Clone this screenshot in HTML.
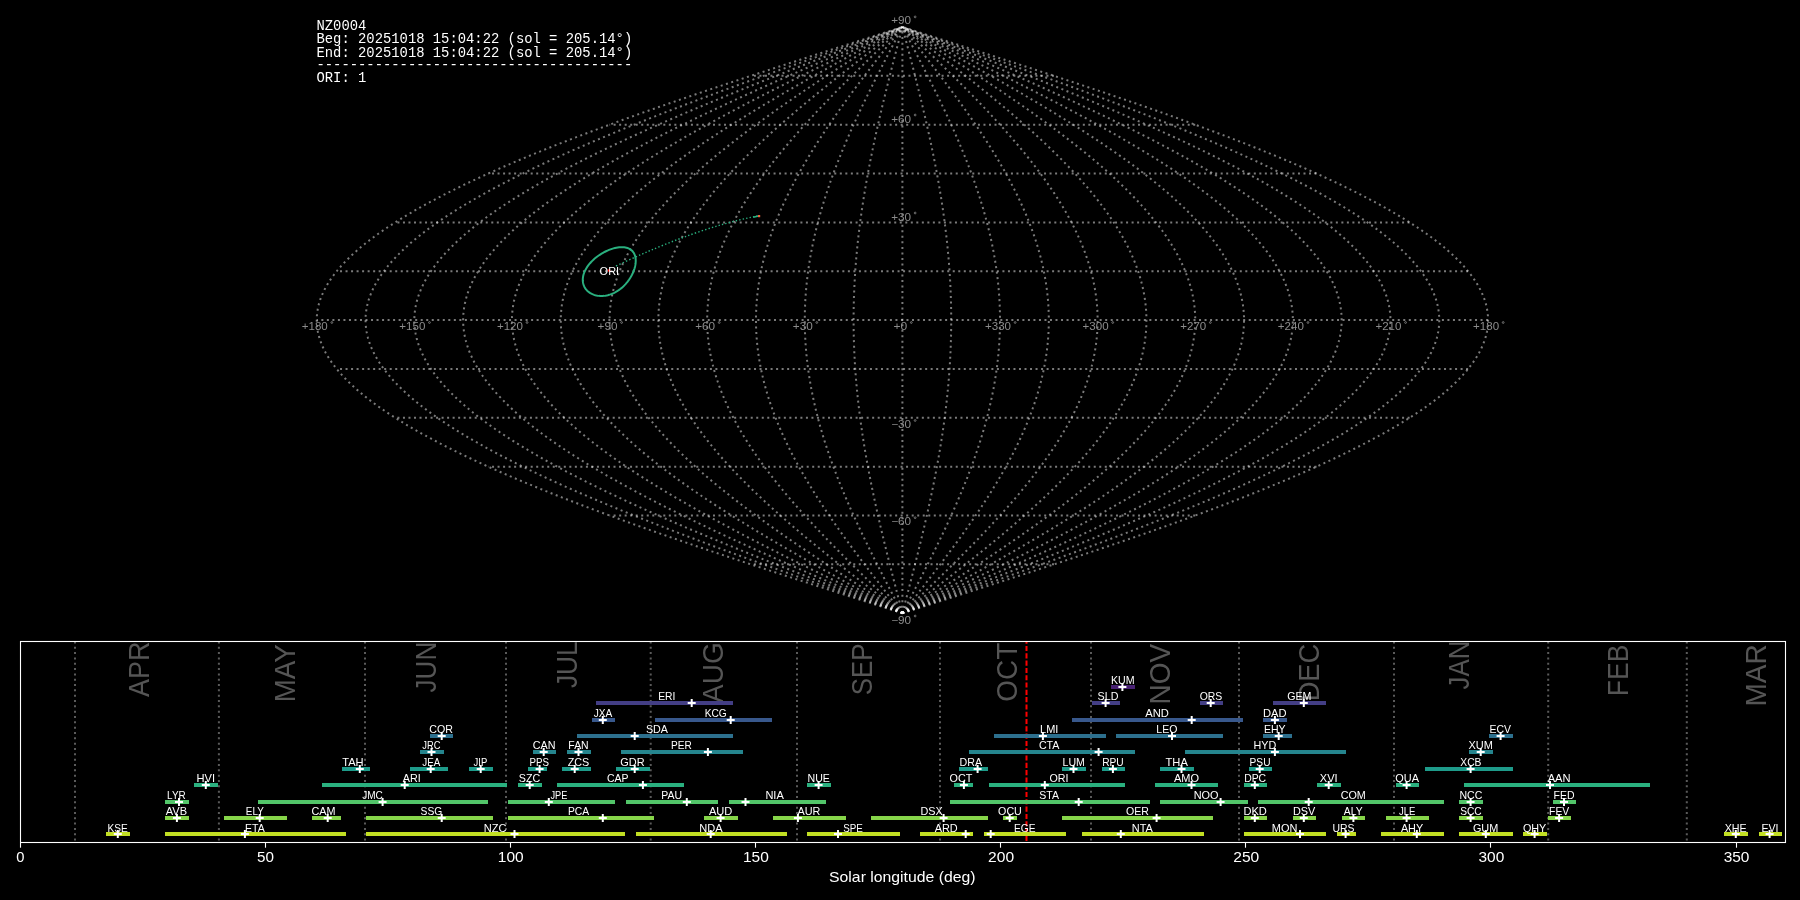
<!DOCTYPE html>
<html><head><meta charset="utf-8"><title>NZ0004</title>
<style>html,body{margin:0;padding:0;background:#000;width:1800px;height:900px;overflow:hidden}svg{display:block;will-change:transform}</style>
</head><body>
<svg width="1800" height="900" viewBox="0 0 1800 900"><g fill="none" stroke="#ffffff" stroke-opacity="0.48" stroke-width="2" stroke-dasharray="2 3.52"><path d="M1053.98 564.35 H750.82"/><path d="M1195.23 515.50 H609.57"/><path d="M1316.53 466.65 H488.27"/><path d="M1409.60 417.80 H395.20"/><path d="M1468.11 368.95 H336.69"/><path d="M1488.07 320.10 H316.73"/><path d="M1468.11 271.25 H336.69"/><path d="M1409.60 222.40 H395.20"/><path d="M1316.53 173.55 H488.27"/><path d="M1195.23 124.70 H609.57"/><path d="M1053.98 75.85 H750.82"/><path d="M902.40 613.20 L907.51 611.57 L912.62 609.95 L917.73 608.32 L922.84 606.69 L927.95 605.06 L933.05 603.43 L938.15 601.80 L943.25 600.18 L948.35 598.55 L953.44 596.92 L958.53 595.29 L963.62 593.66 L968.70 592.03 L973.77 590.41 L978.84 588.78 L983.91 587.15 L988.97 585.52 L994.02 583.89 L999.06 582.26 L1004.10 580.64 L1009.13 579.01 L1014.15 577.38 L1019.16 575.75 L1024.17 574.12 L1029.16 572.49 L1034.15 570.87 L1039.12 569.24 L1044.09 567.61 L1049.04 565.98 L1053.98 564.35 L1058.91 562.72 L1063.83 561.10 L1068.74 559.47 L1073.63 557.84 L1078.51 556.21 L1083.38 554.58 L1088.23 552.95 L1093.07 551.33 L1097.90 549.70 L1102.71 548.07 L1107.50 546.44 L1112.28 544.81 L1117.05 543.18 L1121.79 541.56 L1126.52 539.93 L1131.24 538.30 L1135.93 536.67 L1140.61 535.04 L1145.27 533.41 L1149.91 531.79 L1154.54 530.16 L1159.14 528.53 L1163.72 526.90 L1168.29 525.27 L1172.83 523.64 L1177.35 522.02 L1181.86 520.39 L1186.34 518.76 L1190.80 517.13 L1195.23 515.50 L1199.65 513.87 L1204.04 512.25 L1208.41 510.62 L1212.76 508.99 L1217.08 507.36 L1221.38 505.73 L1225.65 504.10 L1229.90 502.48 L1234.12 500.85 L1238.32 499.22 L1242.50 497.59 L1246.65 495.96 L1250.77 494.33 L1254.86 492.71 L1258.93 491.08 L1262.97 489.45 L1266.99 487.82 L1270.97 486.19 L1274.93 484.56 L1278.86 482.94 L1282.76 481.31 L1286.63 479.68 L1290.47 478.05 L1294.29 476.42 L1298.07 474.79 L1301.82 473.16 L1305.55 471.54 L1309.24 469.91 L1312.90 468.28 L1316.53 466.65 L1320.13 465.02 L1323.69 463.39 L1327.23 461.77 L1330.73 460.14 L1334.20 458.51 L1337.63 456.88 L1341.04 455.25 L1344.41 453.62 L1347.74 452.00 L1351.05 450.37 L1354.31 448.74 L1357.55 447.11 L1360.75 445.48 L1363.91 443.85 L1367.04 442.23 L1370.13 440.60 L1373.19 438.97 L1376.21 437.34 L1379.20 435.71 L1382.15 434.08 L1385.06 432.46 L1387.94 430.83 L1390.78 429.20 L1393.58 427.57 L1396.35 425.94 L1399.07 424.31 L1401.76 422.69 L1404.41 421.06 L1407.03 419.43 L1409.60 417.80 L1412.14 416.17 L1414.64 414.54 L1417.09 412.92 L1419.51 411.29 L1421.89 409.66 L1424.23 408.03 L1426.53 406.40 L1428.79 404.77 L1431.01 403.15 L1433.19 401.52 L1435.33 399.89 L1437.43 398.26 L1439.49 396.63 L1441.51 395.00 L1443.48 393.38 L1445.42 391.75 L1447.31 390.12 L1449.17 388.49 L1450.98 386.86 L1452.75 385.23 L1454.47 383.61 L1456.16 381.98 L1457.80 380.35 L1459.40 378.72 L1460.96 377.09 L1462.48 375.46 L1463.95 373.84 L1465.38 372.21 L1466.77 370.58 L1468.11 368.95 L1469.41 367.32 L1470.67 365.69 L1471.88 364.07 L1473.06 362.44 L1474.18 360.81 L1475.27 359.18 L1476.31 357.55 L1477.31 355.92 L1478.26 354.30 L1479.17 352.67 L1480.03 351.04 L1480.86 349.41 L1481.63 347.78 L1482.37 346.15 L1483.06 344.53 L1483.70 342.90 L1484.30 341.27 L1484.86 339.64 L1485.37 338.01 L1485.84 336.38 L1486.26 334.76 L1486.64 333.13 L1486.97 331.50 L1487.26 329.87 L1487.51 328.24 L1487.71 326.61 L1487.87 324.99 L1487.98 323.36 L1488.04 321.73 L1488.07 320.10 L1488.04 318.47 L1487.98 316.84 L1487.87 315.21 L1487.71 313.59 L1487.51 311.96 L1487.26 310.33 L1486.97 308.70 L1486.64 307.07 L1486.26 305.44 L1485.84 303.82 L1485.37 302.19 L1484.86 300.56 L1484.30 298.93 L1483.70 297.30 L1483.06 295.67 L1482.37 294.05 L1481.63 292.42 L1480.86 290.79 L1480.03 289.16 L1479.17 287.53 L1478.26 285.90 L1477.31 284.28 L1476.31 282.65 L1475.27 281.02 L1474.18 279.39 L1473.06 277.76 L1471.88 276.13 L1470.67 274.51 L1469.41 272.88 L1468.11 271.25 L1466.77 269.62 L1465.38 267.99 L1463.95 266.36 L1462.48 264.74 L1460.96 263.11 L1459.40 261.48 L1457.80 259.85 L1456.16 258.22 L1454.47 256.59 L1452.75 254.97 L1450.98 253.34 L1449.17 251.71 L1447.31 250.08 L1445.42 248.45 L1443.48 246.82 L1441.51 245.20 L1439.49 243.57 L1437.43 241.94 L1435.33 240.31 L1433.19 238.68 L1431.01 237.05 L1428.79 235.43 L1426.53 233.80 L1424.23 232.17 L1421.89 230.54 L1419.51 228.91 L1417.09 227.28 L1414.64 225.66 L1412.14 224.03 L1409.60 222.40 L1407.03 220.77 L1404.41 219.14 L1401.76 217.51 L1399.07 215.89 L1396.35 214.26 L1393.58 212.63 L1390.78 211.00 L1387.94 209.37 L1385.06 207.74 L1382.15 206.12 L1379.20 204.49 L1376.21 202.86 L1373.19 201.23 L1370.13 199.60 L1367.04 197.97 L1363.91 196.35 L1360.75 194.72 L1357.55 193.09 L1354.31 191.46 L1351.05 189.83 L1347.74 188.20 L1344.41 186.58 L1341.04 184.95 L1337.63 183.32 L1334.20 181.69 L1330.73 180.06 L1327.23 178.43 L1323.69 176.81 L1320.13 175.18 L1316.53 173.55 L1312.90 171.92 L1309.24 170.29 L1305.55 168.66 L1301.82 167.04 L1298.07 165.41 L1294.29 163.78 L1290.47 162.15 L1286.63 160.52 L1282.76 158.89 L1278.86 157.27 L1274.93 155.64 L1270.97 154.01 L1266.99 152.38 L1262.97 150.75 L1258.93 149.12 L1254.86 147.49 L1250.77 145.87 L1246.65 144.24 L1242.50 142.61 L1238.32 140.98 L1234.12 139.35 L1229.90 137.72 L1225.65 136.10 L1221.38 134.47 L1217.08 132.84 L1212.76 131.21 L1208.41 129.58 L1204.04 127.95 L1199.65 126.33 L1195.23 124.70 L1190.80 123.07 L1186.34 121.44 L1181.86 119.81 L1177.35 118.18 L1172.83 116.56 L1168.29 114.93 L1163.72 113.30 L1159.14 111.67 L1154.54 110.04 L1149.91 108.41 L1145.27 106.79 L1140.61 105.16 L1135.93 103.53 L1131.24 101.90 L1126.52 100.27 L1121.79 98.64 L1117.05 97.02 L1112.28 95.39 L1107.50 93.76 L1102.71 92.13 L1097.90 90.50 L1093.07 88.87 L1088.23 87.25 L1083.38 85.62 L1078.51 83.99 L1073.63 82.36 L1068.74 80.73 L1063.83 79.10 L1058.91 77.48 L1053.98 75.85 L1049.04 74.22 L1044.09 72.59 L1039.12 70.96 L1034.15 69.33 L1029.16 67.71 L1024.17 66.08 L1019.16 64.45 L1014.15 62.82 L1009.13 61.19 L1004.10 59.56 L999.06 57.94 L994.02 56.31 L988.97 54.68 L983.91 53.05 L978.84 51.42 L973.77 49.79 L968.70 48.17 L963.62 46.54 L958.53 44.91 L953.44 43.28 L948.35 41.65 L943.25 40.02 L938.15 38.40 L933.05 36.77 L927.95 35.14 L922.84 33.51 L917.73 31.88 L912.62 30.25 L907.51 28.63 L902.40 27.00"/><path d="M902.40 613.20 L907.08 611.57 L911.77 609.95 L916.45 608.32 L921.14 606.69 L925.82 605.06 L930.50 603.43 L935.17 601.80 L939.85 600.18 L944.52 598.55 L949.19 596.92 L953.86 595.29 L958.52 593.66 L963.17 592.03 L967.83 590.41 L972.47 588.78 L977.12 587.15 L981.75 585.52 L986.38 583.89 L991.01 582.26 L995.62 580.64 L1000.24 579.01 L1004.84 577.38 L1009.43 575.75 L1014.02 574.12 L1018.60 572.49 L1023.17 570.87 L1027.73 569.24 L1032.28 567.61 L1036.82 565.98 L1041.35 564.35 L1045.87 562.72 L1050.38 561.10 L1054.88 559.47 L1059.36 557.84 L1063.84 556.21 L1068.30 554.58 L1072.75 552.95 L1077.18 551.33 L1081.61 549.70 L1086.02 548.07 L1090.41 546.44 L1094.79 544.81 L1099.16 543.18 L1103.51 541.56 L1107.85 539.93 L1112.17 538.30 L1116.47 536.67 L1120.76 535.04 L1125.03 533.41 L1129.29 531.79 L1133.52 530.16 L1137.74 528.53 L1141.95 526.90 L1146.13 525.27 L1150.29 523.64 L1154.44 522.02 L1158.57 520.39 L1162.68 518.76 L1166.76 517.13 L1170.83 515.50 L1174.88 513.87 L1178.90 512.25 L1182.91 510.62 L1186.89 508.99 L1190.85 507.36 L1194.80 505.73 L1198.71 504.10 L1202.61 502.48 L1206.48 500.85 L1210.33 499.22 L1214.16 497.59 L1217.96 495.96 L1221.74 494.33 L1225.49 492.71 L1229.22 491.08 L1232.92 489.45 L1236.60 487.82 L1240.26 486.19 L1243.89 484.56 L1247.49 482.94 L1251.06 481.31 L1254.61 479.68 L1258.13 478.05 L1261.63 476.42 L1265.10 474.79 L1268.54 473.16 L1271.95 471.54 L1275.33 469.91 L1278.69 468.28 L1282.02 466.65 L1285.32 465.02 L1288.59 463.39 L1291.82 461.77 L1295.03 460.14 L1298.22 458.51 L1301.37 456.88 L1304.48 455.25 L1307.57 453.62 L1310.63 452.00 L1313.66 450.37 L1316.65 448.74 L1319.62 447.11 L1322.55 445.48 L1325.45 443.85 L1328.32 442.23 L1331.16 440.60 L1333.96 438.97 L1336.73 437.34 L1339.47 435.71 L1342.17 434.08 L1344.84 432.46 L1347.48 430.83 L1350.08 429.20 L1352.65 427.57 L1355.18 425.94 L1357.68 424.31 L1360.15 422.69 L1362.58 421.06 L1364.97 419.43 L1367.33 417.80 L1369.66 416.17 L1371.95 414.54 L1374.20 412.92 L1376.42 411.29 L1378.60 409.66 L1380.75 408.03 L1382.85 406.40 L1384.93 404.77 L1386.96 403.15 L1388.96 401.52 L1390.92 399.89 L1392.85 398.26 L1394.73 396.63 L1396.58 395.00 L1398.39 393.38 L1400.17 391.75 L1401.90 390.12 L1403.60 388.49 L1405.26 386.86 L1406.88 385.23 L1408.47 383.61 L1410.01 381.98 L1411.52 380.35 L1412.98 378.72 L1414.41 377.09 L1415.80 375.46 L1417.15 373.84 L1418.46 372.21 L1419.74 370.58 L1420.97 368.95 L1422.16 367.32 L1423.31 365.69 L1424.43 364.07 L1425.50 362.44 L1426.53 360.81 L1427.53 359.18 L1428.48 357.55 L1429.40 355.92 L1430.27 354.30 L1431.10 352.67 L1431.90 351.04 L1432.65 349.41 L1433.36 347.78 L1434.04 346.15 L1434.67 344.53 L1435.26 342.90 L1435.81 341.27 L1436.32 339.64 L1436.79 338.01 L1437.22 336.38 L1437.61 334.76 L1437.95 333.13 L1438.26 331.50 L1438.52 329.87 L1438.75 328.24 L1438.93 326.61 L1439.08 324.99 L1439.18 323.36 L1439.24 321.73 L1439.26 320.10 L1439.24 318.47 L1439.18 316.84 L1439.08 315.21 L1438.93 313.59 L1438.75 311.96 L1438.52 310.33 L1438.26 308.70 L1437.95 307.07 L1437.61 305.44 L1437.22 303.82 L1436.79 302.19 L1436.32 300.56 L1435.81 298.93 L1435.26 297.30 L1434.67 295.67 L1434.04 294.05 L1433.36 292.42 L1432.65 290.79 L1431.90 289.16 L1431.10 287.53 L1430.27 285.90 L1429.40 284.28 L1428.48 282.65 L1427.53 281.02 L1426.53 279.39 L1425.50 277.76 L1424.43 276.13 L1423.31 274.51 L1422.16 272.88 L1420.97 271.25 L1419.74 269.62 L1418.46 267.99 L1417.15 266.36 L1415.80 264.74 L1414.41 263.11 L1412.98 261.48 L1411.52 259.85 L1410.01 258.22 L1408.47 256.59 L1406.88 254.97 L1405.26 253.34 L1403.60 251.71 L1401.90 250.08 L1400.17 248.45 L1398.39 246.82 L1396.58 245.20 L1394.73 243.57 L1392.85 241.94 L1390.92 240.31 L1388.96 238.68 L1386.96 237.05 L1384.93 235.43 L1382.85 233.80 L1380.75 232.17 L1378.60 230.54 L1376.42 228.91 L1374.20 227.28 L1371.95 225.66 L1369.66 224.03 L1367.33 222.40 L1364.97 220.77 L1362.58 219.14 L1360.15 217.51 L1357.68 215.89 L1355.18 214.26 L1352.65 212.63 L1350.08 211.00 L1347.48 209.37 L1344.84 207.74 L1342.17 206.12 L1339.47 204.49 L1336.73 202.86 L1333.96 201.23 L1331.16 199.60 L1328.32 197.97 L1325.45 196.35 L1322.55 194.72 L1319.62 193.09 L1316.65 191.46 L1313.66 189.83 L1310.63 188.20 L1307.57 186.58 L1304.48 184.95 L1301.37 183.32 L1298.22 181.69 L1295.03 180.06 L1291.82 178.43 L1288.59 176.81 L1285.32 175.18 L1282.02 173.55 L1278.69 171.92 L1275.33 170.29 L1271.95 168.66 L1268.54 167.04 L1265.10 165.41 L1261.63 163.78 L1258.13 162.15 L1254.61 160.52 L1251.06 158.89 L1247.49 157.27 L1243.89 155.64 L1240.26 154.01 L1236.60 152.38 L1232.92 150.75 L1229.22 149.12 L1225.49 147.49 L1221.74 145.87 L1217.96 144.24 L1214.16 142.61 L1210.33 140.98 L1206.48 139.35 L1202.61 137.72 L1198.71 136.10 L1194.80 134.47 L1190.85 132.84 L1186.89 131.21 L1182.91 129.58 L1178.90 127.95 L1174.88 126.33 L1170.83 124.70 L1166.76 123.07 L1162.68 121.44 L1158.57 119.81 L1154.44 118.18 L1150.29 116.56 L1146.13 114.93 L1141.95 113.30 L1137.74 111.67 L1133.52 110.04 L1129.29 108.41 L1125.03 106.79 L1120.76 105.16 L1116.47 103.53 L1112.17 101.90 L1107.85 100.27 L1103.51 98.64 L1099.16 97.02 L1094.79 95.39 L1090.41 93.76 L1086.02 92.13 L1081.61 90.50 L1077.18 88.87 L1072.75 87.25 L1068.30 85.62 L1063.84 83.99 L1059.36 82.36 L1054.88 80.73 L1050.38 79.10 L1045.87 77.48 L1041.35 75.85 L1036.82 74.22 L1032.28 72.59 L1027.73 70.96 L1023.17 69.33 L1018.60 67.71 L1014.02 66.08 L1009.43 64.45 L1004.84 62.82 L1000.24 61.19 L995.62 59.56 L991.01 57.94 L986.38 56.31 L981.75 54.68 L977.12 53.05 L972.47 51.42 L967.83 49.79 L963.17 48.17 L958.52 46.54 L953.86 44.91 L949.19 43.28 L944.52 41.65 L939.85 40.02 L935.17 38.40 L930.50 36.77 L925.82 35.14 L921.14 33.51 L916.45 31.88 L911.77 30.25 L907.08 28.63 L902.40 27.00"/><path d="M902.40 613.20 L906.66 611.57 L910.92 609.95 L915.18 608.32 L919.43 606.69 L923.69 605.06 L927.94 603.43 L932.20 601.80 L936.44 600.18 L940.69 598.55 L944.94 596.92 L949.18 595.29 L953.42 593.66 L957.65 592.03 L961.88 590.41 L966.10 588.78 L970.32 587.15 L974.54 585.52 L978.75 583.89 L982.95 582.26 L987.15 580.64 L991.34 579.01 L995.53 577.38 L999.70 575.75 L1003.87 574.12 L1008.03 572.49 L1012.19 570.87 L1016.33 569.24 L1020.47 567.61 L1024.60 565.98 L1028.72 564.35 L1032.83 562.72 L1036.93 561.10 L1041.02 559.47 L1045.09 557.84 L1049.16 556.21 L1053.22 554.58 L1057.26 552.95 L1061.30 551.33 L1065.32 549.70 L1069.32 548.07 L1073.32 546.44 L1077.30 544.81 L1081.27 543.18 L1085.23 541.56 L1089.17 539.93 L1093.10 538.30 L1097.01 536.67 L1100.91 535.04 L1104.79 533.41 L1108.66 531.79 L1112.51 530.16 L1116.35 528.53 L1120.17 526.90 L1123.97 525.27 L1127.76 523.64 L1131.53 522.02 L1135.28 520.39 L1139.01 518.76 L1142.73 517.13 L1146.43 515.50 L1150.11 513.87 L1153.77 512.25 L1157.41 510.62 L1161.03 508.99 L1164.63 507.36 L1168.21 505.73 L1171.78 504.10 L1175.32 502.48 L1178.84 500.85 L1182.34 499.22 L1185.81 497.59 L1189.27 495.96 L1192.71 494.33 L1196.12 492.71 L1199.51 491.08 L1202.88 489.45 L1206.22 487.82 L1209.54 486.19 L1212.84 484.56 L1216.12 482.94 L1219.37 481.31 L1222.59 479.68 L1225.80 478.05 L1228.97 476.42 L1232.13 474.79 L1235.25 473.16 L1238.35 471.54 L1241.43 469.91 L1244.48 468.28 L1247.51 466.65 L1250.51 465.02 L1253.48 463.39 L1256.42 461.77 L1259.34 460.14 L1262.23 458.51 L1265.10 456.88 L1267.93 455.25 L1270.74 453.62 L1273.52 452.00 L1276.27 450.37 L1279.00 448.74 L1281.69 447.11 L1284.36 445.48 L1286.99 443.85 L1289.60 442.23 L1292.18 440.60 L1294.73 438.97 L1297.24 437.34 L1299.73 435.71 L1302.19 434.08 L1304.62 432.46 L1307.02 430.83 L1309.38 429.20 L1311.72 427.57 L1314.02 425.94 L1316.29 424.31 L1318.54 422.69 L1320.74 421.06 L1322.92 419.43 L1325.07 417.80 L1327.18 416.17 L1329.26 414.54 L1331.31 412.92 L1333.33 411.29 L1335.31 409.66 L1337.26 408.03 L1339.18 406.40 L1341.06 404.77 L1342.91 403.15 L1344.73 401.52 L1346.51 399.89 L1348.26 398.26 L1349.98 396.63 L1351.66 395.00 L1353.30 393.38 L1354.92 391.75 L1356.49 390.12 L1358.04 388.49 L1359.55 386.86 L1361.02 385.23 L1362.46 383.61 L1363.87 381.98 L1365.23 380.35 L1366.57 378.72 L1367.87 377.09 L1369.13 375.46 L1370.36 373.84 L1371.55 372.21 L1372.70 370.58 L1373.82 368.95 L1374.91 367.32 L1375.96 365.69 L1376.97 364.07 L1377.95 362.44 L1378.89 360.81 L1379.79 359.18 L1380.66 357.55 L1381.49 355.92 L1382.28 354.30 L1383.04 352.67 L1383.76 351.04 L1384.45 349.41 L1385.09 347.78 L1385.71 346.15 L1386.28 344.53 L1386.82 342.90 L1387.32 341.27 L1387.78 339.64 L1388.21 338.01 L1388.60 336.38 L1388.95 334.76 L1389.27 333.13 L1389.54 331.50 L1389.79 329.87 L1389.99 328.24 L1390.16 326.61 L1390.29 324.99 L1390.38 323.36 L1390.44 321.73 L1390.45 320.10 L1390.44 318.47 L1390.38 316.84 L1390.29 315.21 L1390.16 313.59 L1389.99 311.96 L1389.79 310.33 L1389.54 308.70 L1389.27 307.07 L1388.95 305.44 L1388.60 303.82 L1388.21 302.19 L1387.78 300.56 L1387.32 298.93 L1386.82 297.30 L1386.28 295.67 L1385.71 294.05 L1385.09 292.42 L1384.45 290.79 L1383.76 289.16 L1383.04 287.53 L1382.28 285.90 L1381.49 284.28 L1380.66 282.65 L1379.79 281.02 L1378.89 279.39 L1377.95 277.76 L1376.97 276.13 L1375.96 274.51 L1374.91 272.88 L1373.82 271.25 L1372.70 269.62 L1371.55 267.99 L1370.36 266.36 L1369.13 264.74 L1367.87 263.11 L1366.57 261.48 L1365.23 259.85 L1363.87 258.22 L1362.46 256.59 L1361.02 254.97 L1359.55 253.34 L1358.04 251.71 L1356.49 250.08 L1354.92 248.45 L1353.30 246.82 L1351.66 245.20 L1349.98 243.57 L1348.26 241.94 L1346.51 240.31 L1344.73 238.68 L1342.91 237.05 L1341.06 235.43 L1339.18 233.80 L1337.26 232.17 L1335.31 230.54 L1333.33 228.91 L1331.31 227.28 L1329.26 225.66 L1327.18 224.03 L1325.07 222.40 L1322.92 220.77 L1320.74 219.14 L1318.54 217.51 L1316.29 215.89 L1314.02 214.26 L1311.72 212.63 L1309.38 211.00 L1307.02 209.37 L1304.62 207.74 L1302.19 206.12 L1299.73 204.49 L1297.24 202.86 L1294.73 201.23 L1292.18 199.60 L1289.60 197.97 L1286.99 196.35 L1284.36 194.72 L1281.69 193.09 L1279.00 191.46 L1276.27 189.83 L1273.52 188.20 L1270.74 186.58 L1267.93 184.95 L1265.10 183.32 L1262.23 181.69 L1259.34 180.06 L1256.42 178.43 L1253.48 176.81 L1250.51 175.18 L1247.51 173.55 L1244.48 171.92 L1241.43 170.29 L1238.35 168.66 L1235.25 167.04 L1232.13 165.41 L1228.97 163.78 L1225.80 162.15 L1222.59 160.52 L1219.37 158.89 L1216.12 157.27 L1212.84 155.64 L1209.54 154.01 L1206.22 152.38 L1202.88 150.75 L1199.51 149.12 L1196.12 147.49 L1192.71 145.87 L1189.27 144.24 L1185.81 142.61 L1182.34 140.98 L1178.84 139.35 L1175.32 137.72 L1171.78 136.10 L1168.21 134.47 L1164.63 132.84 L1161.03 131.21 L1157.41 129.58 L1153.77 127.95 L1150.11 126.33 L1146.43 124.70 L1142.73 123.07 L1139.01 121.44 L1135.28 119.81 L1131.53 118.18 L1127.76 116.56 L1123.97 114.93 L1120.17 113.30 L1116.35 111.67 L1112.51 110.04 L1108.66 108.41 L1104.79 106.79 L1100.91 105.16 L1097.01 103.53 L1093.10 101.90 L1089.17 100.27 L1085.23 98.64 L1081.27 97.02 L1077.30 95.39 L1073.32 93.76 L1069.32 92.13 L1065.32 90.50 L1061.30 88.87 L1057.26 87.25 L1053.22 85.62 L1049.16 83.99 L1045.09 82.36 L1041.02 80.73 L1036.93 79.10 L1032.83 77.48 L1028.72 75.85 L1024.60 74.22 L1020.47 72.59 L1016.33 70.96 L1012.19 69.33 L1008.03 67.71 L1003.87 66.08 L999.70 64.45 L995.53 62.82 L991.34 61.19 L987.15 59.56 L982.95 57.94 L978.75 56.31 L974.54 54.68 L970.32 53.05 L966.10 51.42 L961.88 49.79 L957.65 48.17 L953.42 46.54 L949.18 44.91 L944.94 43.28 L940.69 41.65 L936.44 40.02 L932.20 38.40 L927.94 36.77 L923.69 35.14 L919.43 33.51 L915.18 31.88 L910.92 30.25 L906.66 28.63 L902.40 27.00"/><path d="M902.40 613.20 L906.23 611.57 L910.07 609.95 L913.90 608.32 L917.73 606.69 L921.56 605.06 L925.39 603.43 L929.22 601.80 L933.04 600.18 L936.86 598.55 L940.68 596.92 L944.50 595.29 L948.31 593.66 L952.12 592.03 L955.93 590.41 L959.73 588.78 L963.53 587.15 L967.33 585.52 L971.11 583.89 L974.90 582.26 L978.67 580.64 L982.45 579.01 L986.21 577.38 L989.97 575.75 L993.73 574.12 L997.47 572.49 L1001.21 570.87 L1004.94 569.24 L1008.66 567.61 L1012.38 565.98 L1016.09 564.35 L1019.78 562.72 L1023.47 561.10 L1027.15 559.47 L1030.82 557.84 L1034.48 556.21 L1038.14 554.58 L1041.78 552.95 L1045.41 551.33 L1049.02 549.70 L1052.63 548.07 L1056.23 546.44 L1059.81 544.81 L1063.39 543.18 L1066.95 541.56 L1070.49 539.93 L1074.03 538.30 L1077.55 536.67 L1081.06 535.04 L1084.55 533.41 L1088.03 531.79 L1091.50 530.16 L1094.95 528.53 L1098.39 526.90 L1101.82 525.27 L1105.22 523.64 L1108.62 522.02 L1111.99 520.39 L1115.35 518.76 L1118.70 517.13 L1122.02 515.50 L1125.34 513.87 L1128.63 512.25 L1131.91 510.62 L1135.17 508.99 L1138.41 507.36 L1141.63 505.73 L1144.84 504.10 L1148.03 502.48 L1151.19 500.85 L1154.34 499.22 L1157.47 497.59 L1160.58 495.96 L1163.68 494.33 L1166.75 492.71 L1169.80 491.08 L1172.83 489.45 L1175.84 487.82 L1178.83 486.19 L1181.80 484.56 L1184.74 482.94 L1187.67 481.31 L1190.57 479.68 L1193.46 478.05 L1196.32 476.42 L1199.15 474.79 L1201.97 473.16 L1204.76 471.54 L1207.53 469.91 L1210.27 468.28 L1213.00 466.65 L1215.69 465.02 L1218.37 463.39 L1221.02 461.77 L1223.65 460.14 L1226.25 458.51 L1228.83 456.88 L1231.38 455.25 L1233.91 453.62 L1236.41 452.00 L1238.88 450.37 L1241.34 448.74 L1243.76 447.11 L1246.16 445.48 L1248.53 443.85 L1250.88 442.23 L1253.20 440.60 L1255.49 438.97 L1257.76 437.34 L1260.00 435.71 L1262.21 434.08 L1264.40 432.46 L1266.55 430.83 L1268.68 429.20 L1270.79 427.57 L1272.86 425.94 L1274.90 424.31 L1276.92 422.69 L1278.91 421.06 L1280.87 419.43 L1282.80 417.80 L1284.70 416.17 L1286.58 414.54 L1288.42 412.92 L1290.23 411.29 L1292.02 409.66 L1293.77 408.03 L1295.50 406.40 L1297.19 404.77 L1298.86 403.15 L1300.50 401.52 L1302.10 399.89 L1303.67 398.26 L1305.22 396.63 L1306.73 395.00 L1308.21 393.38 L1309.67 391.75 L1311.09 390.12 L1312.47 388.49 L1313.83 386.86 L1315.16 385.23 L1316.45 383.61 L1317.72 381.98 L1318.95 380.35 L1320.15 378.72 L1321.32 377.09 L1322.46 375.46 L1323.56 373.84 L1324.63 372.21 L1325.67 370.58 L1326.68 368.95 L1327.66 367.32 L1328.60 365.69 L1329.51 364.07 L1330.39 362.44 L1331.24 360.81 L1332.05 359.18 L1332.83 357.55 L1333.58 355.92 L1334.29 354.30 L1334.98 352.67 L1335.63 351.04 L1336.24 349.41 L1336.82 347.78 L1337.37 346.15 L1337.89 344.53 L1338.38 342.90 L1338.83 341.27 L1339.24 339.64 L1339.63 338.01 L1339.98 336.38 L1340.30 334.76 L1340.58 333.13 L1340.83 331.50 L1341.05 329.87 L1341.23 328.24 L1341.38 326.61 L1341.50 324.99 L1341.58 323.36 L1341.63 321.73 L1341.65 320.10 L1341.63 318.47 L1341.58 316.84 L1341.50 315.21 L1341.38 313.59 L1341.23 311.96 L1341.05 310.33 L1340.83 308.70 L1340.58 307.07 L1340.30 305.44 L1339.98 303.82 L1339.63 302.19 L1339.24 300.56 L1338.83 298.93 L1338.38 297.30 L1337.89 295.67 L1337.37 294.05 L1336.82 292.42 L1336.24 290.79 L1335.63 289.16 L1334.98 287.53 L1334.29 285.90 L1333.58 284.28 L1332.83 282.65 L1332.05 281.02 L1331.24 279.39 L1330.39 277.76 L1329.51 276.13 L1328.60 274.51 L1327.66 272.88 L1326.68 271.25 L1325.67 269.62 L1324.63 267.99 L1323.56 266.36 L1322.46 264.74 L1321.32 263.11 L1320.15 261.48 L1318.95 259.85 L1317.72 258.22 L1316.45 256.59 L1315.16 254.97 L1313.83 253.34 L1312.47 251.71 L1311.09 250.08 L1309.67 248.45 L1308.21 246.82 L1306.73 245.20 L1305.22 243.57 L1303.67 241.94 L1302.10 240.31 L1300.50 238.68 L1298.86 237.05 L1297.19 235.43 L1295.50 233.80 L1293.77 232.17 L1292.02 230.54 L1290.23 228.91 L1288.42 227.28 L1286.58 225.66 L1284.70 224.03 L1282.80 222.40 L1280.87 220.77 L1278.91 219.14 L1276.92 217.51 L1274.90 215.89 L1272.86 214.26 L1270.79 212.63 L1268.68 211.00 L1266.55 209.37 L1264.40 207.74 L1262.21 206.12 L1260.00 204.49 L1257.76 202.86 L1255.49 201.23 L1253.20 199.60 L1250.88 197.97 L1248.53 196.35 L1246.16 194.72 L1243.76 193.09 L1241.34 191.46 L1238.88 189.83 L1236.41 188.20 L1233.91 186.58 L1231.38 184.95 L1228.83 183.32 L1226.25 181.69 L1223.65 180.06 L1221.02 178.43 L1218.37 176.81 L1215.69 175.18 L1213.00 173.55 L1210.27 171.92 L1207.53 170.29 L1204.76 168.66 L1201.97 167.04 L1199.15 165.41 L1196.32 163.78 L1193.46 162.15 L1190.57 160.52 L1187.67 158.89 L1184.74 157.27 L1181.80 155.64 L1178.83 154.01 L1175.84 152.38 L1172.83 150.75 L1169.80 149.12 L1166.75 147.49 L1163.68 145.87 L1160.58 144.24 L1157.47 142.61 L1154.34 140.98 L1151.19 139.35 L1148.03 137.72 L1144.84 136.10 L1141.63 134.47 L1138.41 132.84 L1135.17 131.21 L1131.91 129.58 L1128.63 127.95 L1125.34 126.33 L1122.02 124.70 L1118.70 123.07 L1115.35 121.44 L1111.99 119.81 L1108.62 118.18 L1105.22 116.56 L1101.82 114.93 L1098.39 113.30 L1094.95 111.67 L1091.50 110.04 L1088.03 108.41 L1084.55 106.79 L1081.06 105.16 L1077.55 103.53 L1074.03 101.90 L1070.49 100.27 L1066.95 98.64 L1063.39 97.02 L1059.81 95.39 L1056.23 93.76 L1052.63 92.13 L1049.02 90.50 L1045.41 88.87 L1041.78 87.25 L1038.14 85.62 L1034.48 83.99 L1030.82 82.36 L1027.15 80.73 L1023.47 79.10 L1019.78 77.48 L1016.09 75.85 L1012.38 74.22 L1008.66 72.59 L1004.94 70.96 L1001.21 69.33 L997.47 67.71 L993.73 66.08 L989.97 64.45 L986.21 62.82 L982.45 61.19 L978.67 59.56 L974.90 57.94 L971.11 56.31 L967.33 54.68 L963.53 53.05 L959.73 51.42 L955.93 49.79 L952.12 48.17 L948.31 46.54 L944.50 44.91 L940.68 43.28 L936.86 41.65 L933.04 40.02 L929.22 38.40 L925.39 36.77 L921.56 35.14 L917.73 33.51 L913.90 31.88 L910.07 30.25 L906.23 28.63 L902.40 27.00"/><path d="M902.40 613.20 L905.81 611.57 L909.21 609.95 L912.62 608.32 L916.03 606.69 L919.43 605.06 L922.83 603.43 L926.24 601.80 L929.64 600.18 L933.03 598.55 L936.43 596.92 L939.82 595.29 L943.21 593.66 L946.60 592.03 L949.98 590.41 L953.36 588.78 L956.74 587.15 L960.11 585.52 L963.48 583.89 L966.84 582.26 L970.20 580.64 L973.55 579.01 L976.90 577.38 L980.24 575.75 L983.58 574.12 L986.91 572.49 L990.23 570.87 L993.55 569.24 L996.86 567.61 L1000.16 565.98 L1003.45 564.35 L1006.74 562.72 L1010.02 561.10 L1013.29 559.47 L1016.55 557.84 L1019.81 556.21 L1023.05 554.58 L1026.29 552.95 L1029.52 551.33 L1032.73 549.70 L1035.94 548.07 L1039.14 546.44 L1042.32 544.81 L1045.50 543.18 L1048.66 541.56 L1051.82 539.93 L1054.96 538.30 L1058.09 536.67 L1061.21 535.04 L1064.31 533.41 L1067.41 531.79 L1070.49 530.16 L1073.56 528.53 L1076.62 526.90 L1079.66 525.27 L1082.69 523.64 L1085.70 522.02 L1088.70 520.39 L1091.69 518.76 L1094.66 517.13 L1097.62 515.50 L1100.57 513.87 L1103.49 512.25 L1106.41 510.62 L1109.30 508.99 L1112.19 507.36 L1115.05 505.73 L1117.90 504.10 L1120.73 502.48 L1123.55 500.85 L1126.35 499.22 L1129.13 497.59 L1131.90 495.96 L1134.64 494.33 L1137.38 492.71 L1140.09 491.08 L1142.78 489.45 L1145.46 487.82 L1148.11 486.19 L1150.75 484.56 L1153.37 482.94 L1155.97 481.31 L1158.55 479.68 L1161.12 478.05 L1163.66 476.42 L1166.18 474.79 L1168.68 473.16 L1171.16 471.54 L1173.63 469.91 L1176.07 468.28 L1178.49 466.65 L1180.88 465.02 L1183.26 463.39 L1185.62 461.77 L1187.95 460.14 L1190.27 458.51 L1192.56 456.88 L1194.83 455.25 L1197.07 453.62 L1199.30 452.00 L1201.50 450.37 L1203.68 448.74 L1205.83 447.11 L1207.96 445.48 L1210.07 443.85 L1212.16 442.23 L1214.22 440.60 L1216.26 438.97 L1218.28 437.34 L1220.27 435.71 L1222.23 434.08 L1224.18 432.46 L1226.09 430.83 L1227.99 429.20 L1229.85 427.57 L1231.70 425.94 L1233.52 424.31 L1235.31 422.69 L1237.08 421.06 L1238.82 419.43 L1240.53 417.80 L1242.23 416.17 L1243.89 414.54 L1245.53 412.92 L1247.14 411.29 L1248.73 409.66 L1250.29 408.03 L1251.82 406.40 L1253.33 404.77 L1254.81 403.15 L1256.26 401.52 L1257.69 399.89 L1259.09 398.26 L1260.46 396.63 L1261.81 395.00 L1263.12 393.38 L1264.41 391.75 L1265.68 390.12 L1266.91 388.49 L1268.12 386.86 L1269.30 385.23 L1270.45 383.61 L1271.57 381.98 L1272.67 380.35 L1273.73 378.72 L1274.77 377.09 L1275.78 375.46 L1276.77 373.84 L1277.72 372.21 L1278.64 370.58 L1279.54 368.95 L1280.41 367.32 L1281.25 365.69 L1282.06 364.07 L1282.84 362.44 L1283.59 360.81 L1284.31 359.18 L1285.01 357.55 L1285.67 355.92 L1286.31 354.30 L1286.91 352.67 L1287.49 351.04 L1288.04 349.41 L1288.56 347.78 L1289.04 346.15 L1289.50 344.53 L1289.93 342.90 L1290.33 341.27 L1290.71 339.64 L1291.05 338.01 L1291.36 336.38 L1291.64 334.76 L1291.89 333.13 L1292.12 331.50 L1292.31 329.87 L1292.47 328.24 L1292.61 326.61 L1292.71 324.99 L1292.78 323.36 L1292.83 321.73 L1292.84 320.10 L1292.83 318.47 L1292.78 316.84 L1292.71 315.21 L1292.61 313.59 L1292.47 311.96 L1292.31 310.33 L1292.12 308.70 L1291.89 307.07 L1291.64 305.44 L1291.36 303.82 L1291.05 302.19 L1290.71 300.56 L1290.33 298.93 L1289.93 297.30 L1289.50 295.67 L1289.04 294.05 L1288.56 292.42 L1288.04 290.79 L1287.49 289.16 L1286.91 287.53 L1286.31 285.90 L1285.67 284.28 L1285.01 282.65 L1284.31 281.02 L1283.59 279.39 L1282.84 277.76 L1282.06 276.13 L1281.25 274.51 L1280.41 272.88 L1279.54 271.25 L1278.64 269.62 L1277.72 267.99 L1276.77 266.36 L1275.78 264.74 L1274.77 263.11 L1273.73 261.48 L1272.67 259.85 L1271.57 258.22 L1270.45 256.59 L1269.30 254.97 L1268.12 253.34 L1266.91 251.71 L1265.68 250.08 L1264.41 248.45 L1263.12 246.82 L1261.81 245.20 L1260.46 243.57 L1259.09 241.94 L1257.69 240.31 L1256.26 238.68 L1254.81 237.05 L1253.33 235.43 L1251.82 233.80 L1250.29 232.17 L1248.73 230.54 L1247.14 228.91 L1245.53 227.28 L1243.89 225.66 L1242.23 224.03 L1240.53 222.40 L1238.82 220.77 L1237.08 219.14 L1235.31 217.51 L1233.52 215.89 L1231.70 214.26 L1229.85 212.63 L1227.99 211.00 L1226.09 209.37 L1224.18 207.74 L1222.23 206.12 L1220.27 204.49 L1218.28 202.86 L1216.26 201.23 L1214.22 199.60 L1212.16 197.97 L1210.07 196.35 L1207.96 194.72 L1205.83 193.09 L1203.68 191.46 L1201.50 189.83 L1199.30 188.20 L1197.07 186.58 L1194.83 184.95 L1192.56 183.32 L1190.27 181.69 L1187.95 180.06 L1185.62 178.43 L1183.26 176.81 L1180.88 175.18 L1178.49 173.55 L1176.07 171.92 L1173.63 170.29 L1171.16 168.66 L1168.68 167.04 L1166.18 165.41 L1163.66 163.78 L1161.12 162.15 L1158.55 160.52 L1155.97 158.89 L1153.37 157.27 L1150.75 155.64 L1148.11 154.01 L1145.46 152.38 L1142.78 150.75 L1140.09 149.12 L1137.38 147.49 L1134.64 145.87 L1131.90 144.24 L1129.13 142.61 L1126.35 140.98 L1123.55 139.35 L1120.73 137.72 L1117.90 136.10 L1115.05 134.47 L1112.19 132.84 L1109.30 131.21 L1106.41 129.58 L1103.49 127.95 L1100.57 126.33 L1097.62 124.70 L1094.66 123.07 L1091.69 121.44 L1088.70 119.81 L1085.70 118.18 L1082.69 116.56 L1079.66 114.93 L1076.62 113.30 L1073.56 111.67 L1070.49 110.04 L1067.41 108.41 L1064.31 106.79 L1061.21 105.16 L1058.09 103.53 L1054.96 101.90 L1051.82 100.27 L1048.66 98.64 L1045.50 97.02 L1042.32 95.39 L1039.14 93.76 L1035.94 92.13 L1032.73 90.50 L1029.52 88.87 L1026.29 87.25 L1023.05 85.62 L1019.81 83.99 L1016.55 82.36 L1013.29 80.73 L1010.02 79.10 L1006.74 77.48 L1003.45 75.85 L1000.16 74.22 L996.86 72.59 L993.55 70.96 L990.23 69.33 L986.91 67.71 L983.58 66.08 L980.24 64.45 L976.90 62.82 L973.55 61.19 L970.20 59.56 L966.84 57.94 L963.48 56.31 L960.11 54.68 L956.74 53.05 L953.36 51.42 L949.98 49.79 L946.60 48.17 L943.21 46.54 L939.82 44.91 L936.43 43.28 L933.03 41.65 L929.64 40.02 L926.24 38.40 L922.83 36.77 L919.43 35.14 L916.03 33.51 L912.62 31.88 L909.21 30.25 L905.81 28.63 L902.40 27.00"/><path d="M902.40 613.20 L905.38 611.57 L908.36 609.95 L911.34 608.32 L914.32 606.69 L917.30 605.06 L920.28 603.43 L923.26 601.80 L926.23 600.18 L929.20 598.55 L932.18 596.92 L935.14 595.29 L938.11 593.66 L941.07 592.03 L944.04 590.41 L946.99 588.78 L949.95 587.15 L952.90 585.52 L955.84 583.89 L958.79 582.26 L961.72 580.64 L964.66 579.01 L967.59 577.38 L970.51 575.75 L973.43 574.12 L976.34 572.49 L979.25 570.87 L982.15 569.24 L985.05 567.61 L987.94 565.98 L990.82 564.35 L993.70 562.72 L996.57 561.10 L999.43 559.47 L1002.29 557.84 L1005.13 556.21 L1007.97 554.58 L1010.80 552.95 L1013.63 551.33 L1016.44 549.70 L1019.25 548.07 L1022.04 546.44 L1024.83 544.81 L1027.61 543.18 L1030.38 541.56 L1033.14 539.93 L1035.89 538.30 L1038.63 536.67 L1041.36 535.04 L1044.08 533.41 L1046.78 531.79 L1049.48 530.16 L1052.16 528.53 L1054.84 526.90 L1057.50 525.27 L1060.15 523.64 L1062.79 522.02 L1065.42 520.39 L1068.03 518.76 L1070.63 517.13 L1073.22 515.50 L1075.79 513.87 L1078.36 512.25 L1080.91 510.62 L1083.44 508.99 L1085.96 507.36 L1088.47 505.73 L1090.96 504.10 L1093.44 502.48 L1095.91 500.85 L1098.36 499.22 L1100.79 497.59 L1103.21 495.96 L1105.61 494.33 L1108.00 492.71 L1110.38 491.08 L1112.73 489.45 L1115.07 487.82 L1117.40 486.19 L1119.71 484.56 L1122.00 482.94 L1124.28 481.31 L1126.54 479.68 L1128.78 478.05 L1131.00 476.42 L1133.21 474.79 L1135.40 473.16 L1137.57 471.54 L1139.72 469.91 L1141.86 468.28 L1143.97 466.65 L1146.07 465.02 L1148.15 463.39 L1150.22 461.77 L1152.26 460.14 L1154.28 458.51 L1156.29 456.88 L1158.27 455.25 L1160.24 453.62 L1162.18 452.00 L1164.11 450.37 L1166.02 448.74 L1167.90 447.11 L1169.77 445.48 L1171.61 443.85 L1173.44 442.23 L1175.24 440.60 L1177.03 438.97 L1178.79 437.34 L1180.53 435.71 L1182.25 434.08 L1183.95 432.46 L1185.63 430.83 L1187.29 429.20 L1188.92 427.57 L1190.53 425.94 L1192.13 424.31 L1193.69 422.69 L1195.24 421.06 L1196.77 419.43 L1198.27 417.80 L1199.75 416.17 L1201.20 414.54 L1202.64 412.92 L1204.05 411.29 L1205.44 409.66 L1206.80 408.03 L1208.14 406.40 L1209.46 404.77 L1210.76 403.15 L1212.03 401.52 L1213.28 399.89 L1214.50 398.26 L1215.70 396.63 L1216.88 395.00 L1218.03 393.38 L1219.16 391.75 L1220.27 390.12 L1221.35 388.49 L1222.40 386.86 L1223.44 385.23 L1224.44 383.61 L1225.43 381.98 L1226.38 380.35 L1227.32 378.72 L1228.23 377.09 L1229.11 375.46 L1229.97 373.84 L1230.80 372.21 L1231.61 370.58 L1232.40 368.95 L1233.16 367.32 L1233.89 365.69 L1234.60 364.07 L1235.28 362.44 L1235.94 360.81 L1236.57 359.18 L1237.18 357.55 L1237.76 355.92 L1238.32 354.30 L1238.85 352.67 L1239.35 351.04 L1239.83 349.41 L1240.29 347.78 L1240.71 346.15 L1241.12 344.53 L1241.49 342.90 L1241.84 341.27 L1242.17 339.64 L1242.47 338.01 L1242.74 336.38 L1242.99 334.76 L1243.21 333.13 L1243.40 331.50 L1243.57 329.87 L1243.71 328.24 L1243.83 326.61 L1243.92 324.99 L1243.99 323.36 L1244.03 321.73 L1244.04 320.10 L1244.03 318.47 L1243.99 316.84 L1243.92 315.21 L1243.83 313.59 L1243.71 311.96 L1243.57 310.33 L1243.40 308.70 L1243.21 307.07 L1242.99 305.44 L1242.74 303.82 L1242.47 302.19 L1242.17 300.56 L1241.84 298.93 L1241.49 297.30 L1241.12 295.67 L1240.71 294.05 L1240.29 292.42 L1239.83 290.79 L1239.35 289.16 L1238.85 287.53 L1238.32 285.90 L1237.76 284.28 L1237.18 282.65 L1236.57 281.02 L1235.94 279.39 L1235.28 277.76 L1234.60 276.13 L1233.89 274.51 L1233.16 272.88 L1232.40 271.25 L1231.61 269.62 L1230.80 267.99 L1229.97 266.36 L1229.11 264.74 L1228.23 263.11 L1227.32 261.48 L1226.38 259.85 L1225.43 258.22 L1224.44 256.59 L1223.44 254.97 L1222.40 253.34 L1221.35 251.71 L1220.27 250.08 L1219.16 248.45 L1218.03 246.82 L1216.88 245.20 L1215.70 243.57 L1214.50 241.94 L1213.28 240.31 L1212.03 238.68 L1210.76 237.05 L1209.46 235.43 L1208.14 233.80 L1206.80 232.17 L1205.44 230.54 L1204.05 228.91 L1202.64 227.28 L1201.20 225.66 L1199.75 224.03 L1198.27 222.40 L1196.77 220.77 L1195.24 219.14 L1193.69 217.51 L1192.13 215.89 L1190.53 214.26 L1188.92 212.63 L1187.29 211.00 L1185.63 209.37 L1183.95 207.74 L1182.25 206.12 L1180.53 204.49 L1178.79 202.86 L1177.03 201.23 L1175.24 199.60 L1173.44 197.97 L1171.61 196.35 L1169.77 194.72 L1167.90 193.09 L1166.02 191.46 L1164.11 189.83 L1162.18 188.20 L1160.24 186.58 L1158.27 184.95 L1156.29 183.32 L1154.28 181.69 L1152.26 180.06 L1150.22 178.43 L1148.15 176.81 L1146.07 175.18 L1143.97 173.55 L1141.86 171.92 L1139.72 170.29 L1137.57 168.66 L1135.40 167.04 L1133.21 165.41 L1131.00 163.78 L1128.78 162.15 L1126.54 160.52 L1124.28 158.89 L1122.00 157.27 L1119.71 155.64 L1117.40 154.01 L1115.07 152.38 L1112.73 150.75 L1110.38 149.12 L1108.00 147.49 L1105.61 145.87 L1103.21 144.24 L1100.79 142.61 L1098.36 140.98 L1095.91 139.35 L1093.44 137.72 L1090.96 136.10 L1088.47 134.47 L1085.96 132.84 L1083.44 131.21 L1080.91 129.58 L1078.36 127.95 L1075.79 126.33 L1073.22 124.70 L1070.63 123.07 L1068.03 121.44 L1065.42 119.81 L1062.79 118.18 L1060.15 116.56 L1057.50 114.93 L1054.84 113.30 L1052.16 111.67 L1049.48 110.04 L1046.78 108.41 L1044.08 106.79 L1041.36 105.16 L1038.63 103.53 L1035.89 101.90 L1033.14 100.27 L1030.38 98.64 L1027.61 97.02 L1024.83 95.39 L1022.04 93.76 L1019.25 92.13 L1016.44 90.50 L1013.63 88.87 L1010.80 87.25 L1007.97 85.62 L1005.13 83.99 L1002.29 82.36 L999.43 80.73 L996.57 79.10 L993.70 77.48 L990.82 75.85 L987.94 74.22 L985.05 72.59 L982.15 70.96 L979.25 69.33 L976.34 67.71 L973.43 66.08 L970.51 64.45 L967.59 62.82 L964.66 61.19 L961.72 59.56 L958.79 57.94 L955.84 56.31 L952.90 54.68 L949.95 53.05 L946.99 51.42 L944.04 49.79 L941.07 48.17 L938.11 46.54 L935.14 44.91 L932.18 43.28 L929.20 41.65 L926.23 40.02 L923.26 38.40 L920.28 36.77 L917.30 35.14 L914.32 33.51 L911.34 31.88 L908.36 30.25 L905.38 28.63 L902.40 27.00"/><path d="M902.40 613.20 L904.96 611.57 L907.51 609.95 L910.07 608.32 L912.62 606.69 L915.17 605.06 L917.73 603.43 L920.28 601.80 L922.83 600.18 L925.38 598.55 L927.92 596.92 L930.47 595.29 L933.01 593.66 L935.55 592.03 L938.09 590.41 L940.62 588.78 L943.15 587.15 L945.68 585.52 L948.21 583.89 L950.73 582.26 L953.25 580.64 L955.76 579.01 L958.28 577.38 L960.78 575.75 L963.28 574.12 L965.78 572.49 L968.27 570.87 L970.76 569.24 L973.24 567.61 L975.72 565.98 L978.19 564.35 L980.66 562.72 L983.12 561.10 L985.57 559.47 L988.02 557.84 L990.46 556.21 L992.89 554.58 L995.32 552.95 L997.74 551.33 L1000.15 549.70 L1002.55 548.07 L1004.95 546.44 L1007.34 544.81 L1009.72 543.18 L1012.10 541.56 L1014.46 539.93 L1016.82 538.30 L1019.17 536.67 L1021.51 535.04 L1023.84 533.41 L1026.16 531.79 L1028.47 530.16 L1030.77 528.53 L1033.06 526.90 L1035.34 525.27 L1037.62 523.64 L1039.88 522.02 L1042.13 520.39 L1044.37 518.76 L1046.60 517.13 L1048.82 515.50 L1051.02 513.87 L1053.22 512.25 L1055.40 510.62 L1057.58 508.99 L1059.74 507.36 L1061.89 505.73 L1064.03 504.10 L1066.15 502.48 L1068.26 500.85 L1070.36 499.22 L1072.45 497.59 L1074.52 495.96 L1076.58 494.33 L1078.63 492.71 L1080.67 491.08 L1082.69 489.45 L1084.69 487.82 L1086.69 486.19 L1088.66 484.56 L1090.63 482.94 L1092.58 481.31 L1094.52 479.68 L1096.44 478.05 L1098.34 476.42 L1100.24 474.79 L1102.11 473.16 L1103.97 471.54 L1105.82 469.91 L1107.65 468.28 L1109.46 466.65 L1111.26 465.02 L1113.05 463.39 L1114.81 461.77 L1116.56 460.14 L1118.30 458.51 L1120.02 456.88 L1121.72 455.25 L1123.40 453.62 L1125.07 452.00 L1126.72 450.37 L1128.36 448.74 L1129.97 447.11 L1131.57 445.48 L1133.16 443.85 L1134.72 442.23 L1136.27 440.60 L1137.80 438.97 L1139.31 437.34 L1140.80 435.71 L1142.27 434.08 L1143.73 432.46 L1145.17 430.83 L1146.59 429.20 L1147.99 427.57 L1149.37 425.94 L1150.74 424.31 L1152.08 422.69 L1153.41 421.06 L1154.71 419.43 L1156.00 417.80 L1157.27 416.17 L1158.52 414.54 L1159.75 412.92 L1160.96 411.29 L1162.15 409.66 L1163.32 408.03 L1164.47 406.40 L1165.60 404.77 L1166.71 403.15 L1167.80 401.52 L1168.87 399.89 L1169.92 398.26 L1170.95 396.63 L1171.95 395.00 L1172.94 393.38 L1173.91 391.75 L1174.86 390.12 L1175.78 388.49 L1176.69 386.86 L1177.57 385.23 L1178.44 383.61 L1179.28 381.98 L1180.10 380.35 L1180.90 378.72 L1181.68 377.09 L1182.44 375.46 L1183.17 373.84 L1183.89 372.21 L1184.58 370.58 L1185.25 368.95 L1185.91 367.32 L1186.53 365.69 L1187.14 364.07 L1187.73 362.44 L1188.29 360.81 L1188.83 359.18 L1189.35 357.55 L1189.85 355.92 L1190.33 354.30 L1190.78 352.67 L1191.22 351.04 L1191.63 349.41 L1192.02 347.78 L1192.38 346.15 L1192.73 344.53 L1193.05 342.90 L1193.35 341.27 L1193.63 339.64 L1193.88 338.01 L1194.12 336.38 L1194.33 334.76 L1194.52 333.13 L1194.69 331.50 L1194.83 329.87 L1194.95 328.24 L1195.05 326.61 L1195.13 324.99 L1195.19 323.36 L1195.22 321.73 L1195.23 320.10 L1195.22 318.47 L1195.19 316.84 L1195.13 315.21 L1195.05 313.59 L1194.95 311.96 L1194.83 310.33 L1194.69 308.70 L1194.52 307.07 L1194.33 305.44 L1194.12 303.82 L1193.88 302.19 L1193.63 300.56 L1193.35 298.93 L1193.05 297.30 L1192.73 295.67 L1192.38 294.05 L1192.02 292.42 L1191.63 290.79 L1191.22 289.16 L1190.78 287.53 L1190.33 285.90 L1189.85 284.28 L1189.35 282.65 L1188.83 281.02 L1188.29 279.39 L1187.73 277.76 L1187.14 276.13 L1186.53 274.51 L1185.91 272.88 L1185.25 271.25 L1184.58 269.62 L1183.89 267.99 L1183.17 266.36 L1182.44 264.74 L1181.68 263.11 L1180.90 261.48 L1180.10 259.85 L1179.28 258.22 L1178.44 256.59 L1177.57 254.97 L1176.69 253.34 L1175.78 251.71 L1174.86 250.08 L1173.91 248.45 L1172.94 246.82 L1171.95 245.20 L1170.95 243.57 L1169.92 241.94 L1168.87 240.31 L1167.80 238.68 L1166.71 237.05 L1165.60 235.43 L1164.47 233.80 L1163.32 232.17 L1162.15 230.54 L1160.96 228.91 L1159.75 227.28 L1158.52 225.66 L1157.27 224.03 L1156.00 222.40 L1154.71 220.77 L1153.41 219.14 L1152.08 217.51 L1150.74 215.89 L1149.37 214.26 L1147.99 212.63 L1146.59 211.00 L1145.17 209.37 L1143.73 207.74 L1142.27 206.12 L1140.80 204.49 L1139.31 202.86 L1137.80 201.23 L1136.27 199.60 L1134.72 197.97 L1133.16 196.35 L1131.57 194.72 L1129.97 193.09 L1128.36 191.46 L1126.72 189.83 L1125.07 188.20 L1123.40 186.58 L1121.72 184.95 L1120.02 183.32 L1118.30 181.69 L1116.56 180.06 L1114.81 178.43 L1113.05 176.81 L1111.26 175.18 L1109.46 173.55 L1107.65 171.92 L1105.82 170.29 L1103.97 168.66 L1102.11 167.04 L1100.24 165.41 L1098.34 163.78 L1096.44 162.15 L1094.52 160.52 L1092.58 158.89 L1090.63 157.27 L1088.66 155.64 L1086.69 154.01 L1084.69 152.38 L1082.69 150.75 L1080.67 149.12 L1078.63 147.49 L1076.58 145.87 L1074.52 144.24 L1072.45 142.61 L1070.36 140.98 L1068.26 139.35 L1066.15 137.72 L1064.03 136.10 L1061.89 134.47 L1059.74 132.84 L1057.58 131.21 L1055.40 129.58 L1053.22 127.95 L1051.02 126.33 L1048.82 124.70 L1046.60 123.07 L1044.37 121.44 L1042.13 119.81 L1039.88 118.18 L1037.62 116.56 L1035.34 114.93 L1033.06 113.30 L1030.77 111.67 L1028.47 110.04 L1026.16 108.41 L1023.84 106.79 L1021.51 105.16 L1019.17 103.53 L1016.82 101.90 L1014.46 100.27 L1012.10 98.64 L1009.72 97.02 L1007.34 95.39 L1004.95 93.76 L1002.55 92.13 L1000.15 90.50 L997.74 88.87 L995.32 87.25 L992.89 85.62 L990.46 83.99 L988.02 82.36 L985.57 80.73 L983.12 79.10 L980.66 77.48 L978.19 75.85 L975.72 74.22 L973.24 72.59 L970.76 70.96 L968.27 69.33 L965.78 67.71 L963.28 66.08 L960.78 64.45 L958.28 62.82 L955.76 61.19 L953.25 59.56 L950.73 57.94 L948.21 56.31 L945.68 54.68 L943.15 53.05 L940.62 51.42 L938.09 49.79 L935.55 48.17 L933.01 46.54 L930.47 44.91 L927.92 43.28 L925.38 41.65 L922.83 40.02 L920.28 38.40 L917.73 36.77 L915.17 35.14 L912.62 33.51 L910.07 31.88 L907.51 30.25 L904.96 28.63 L902.40 27.00"/><path d="M902.40 613.20 L904.53 611.57 L906.66 609.95 L908.79 608.32 L910.92 606.69 L913.04 605.06 L915.17 603.43 L917.30 601.80 L919.42 600.18 L921.55 598.55 L923.67 596.92 L925.79 595.29 L927.91 593.66 L930.02 592.03 L932.14 590.41 L934.25 588.78 L936.36 587.15 L938.47 585.52 L940.57 583.89 L942.68 582.26 L944.77 580.64 L946.87 579.01 L948.96 577.38 L951.05 575.75 L953.14 574.12 L955.22 572.49 L957.29 570.87 L959.37 569.24 L961.44 567.61 L963.50 565.98 L965.56 564.35 L967.61 562.72 L969.66 561.10 L971.71 559.47 L973.75 557.84 L975.78 556.21 L977.81 554.58 L979.83 552.95 L981.85 551.33 L983.86 549.70 L985.86 548.07 L987.86 546.44 L989.85 544.81 L991.84 543.18 L993.81 541.56 L995.79 539.93 L997.75 538.30 L999.71 536.67 L1001.65 535.04 L1003.60 533.41 L1005.53 531.79 L1007.46 530.16 L1009.37 528.53 L1011.28 526.90 L1013.19 525.27 L1015.08 523.64 L1016.96 522.02 L1018.84 520.39 L1020.71 518.76 L1022.56 517.13 L1024.41 515.50 L1026.25 513.87 L1028.08 512.25 L1029.90 510.62 L1031.71 508.99 L1033.52 507.36 L1035.31 505.73 L1037.09 504.10 L1038.86 502.48 L1040.62 500.85 L1042.37 499.22 L1044.11 497.59 L1045.84 495.96 L1047.55 494.33 L1049.26 492.71 L1050.95 491.08 L1052.64 489.45 L1054.31 487.82 L1055.97 486.19 L1057.62 484.56 L1059.26 482.94 L1060.88 481.31 L1062.50 479.68 L1064.10 478.05 L1065.69 476.42 L1067.26 474.79 L1068.83 473.16 L1070.38 471.54 L1071.92 469.91 L1073.44 468.28 L1074.95 466.65 L1076.45 465.02 L1077.94 463.39 L1079.41 461.77 L1080.87 460.14 L1082.32 458.51 L1083.75 456.88 L1085.17 455.25 L1086.57 453.62 L1087.96 452.00 L1089.34 450.37 L1090.70 448.74 L1092.04 447.11 L1093.38 445.48 L1094.70 443.85 L1096.00 442.23 L1097.29 440.60 L1098.56 438.97 L1099.82 437.34 L1101.07 435.71 L1102.30 434.08 L1103.51 432.46 L1104.71 430.83 L1105.89 429.20 L1107.06 427.57 L1108.21 425.94 L1109.35 424.31 L1110.47 422.69 L1111.57 421.06 L1112.66 419.43 L1113.73 417.80 L1114.79 416.17 L1115.83 414.54 L1116.86 412.92 L1117.86 411.29 L1118.86 409.66 L1119.83 408.03 L1120.79 406.40 L1121.73 404.77 L1122.66 403.15 L1123.56 401.52 L1124.46 399.89 L1125.33 398.26 L1126.19 396.63 L1127.03 395.00 L1127.85 393.38 L1128.66 391.75 L1129.45 390.12 L1130.22 388.49 L1130.97 386.86 L1131.71 385.23 L1132.43 383.61 L1133.13 381.98 L1133.82 380.35 L1134.48 378.72 L1135.13 377.09 L1135.76 375.46 L1136.38 373.84 L1136.97 372.21 L1137.55 370.58 L1138.11 368.95 L1138.65 367.32 L1139.18 365.69 L1139.69 364.07 L1140.17 362.44 L1140.64 360.81 L1141.09 359.18 L1141.53 357.55 L1141.94 355.92 L1142.34 354.30 L1142.72 352.67 L1143.08 351.04 L1143.42 349.41 L1143.75 347.78 L1144.05 346.15 L1144.34 344.53 L1144.61 342.90 L1144.86 341.27 L1145.09 339.64 L1145.30 338.01 L1145.50 336.38 L1145.68 334.76 L1145.83 333.13 L1145.97 331.50 L1146.09 329.87 L1146.20 328.24 L1146.28 326.61 L1146.34 324.99 L1146.39 323.36 L1146.42 321.73 L1146.43 320.10 L1146.42 318.47 L1146.39 316.84 L1146.34 315.21 L1146.28 313.59 L1146.20 311.96 L1146.09 310.33 L1145.97 308.70 L1145.83 307.07 L1145.68 305.44 L1145.50 303.82 L1145.30 302.19 L1145.09 300.56 L1144.86 298.93 L1144.61 297.30 L1144.34 295.67 L1144.05 294.05 L1143.75 292.42 L1143.42 290.79 L1143.08 289.16 L1142.72 287.53 L1142.34 285.90 L1141.94 284.28 L1141.53 282.65 L1141.09 281.02 L1140.64 279.39 L1140.17 277.76 L1139.69 276.13 L1139.18 274.51 L1138.65 272.88 L1138.11 271.25 L1137.55 269.62 L1136.97 267.99 L1136.38 266.36 L1135.76 264.74 L1135.13 263.11 L1134.48 261.48 L1133.82 259.85 L1133.13 258.22 L1132.43 256.59 L1131.71 254.97 L1130.97 253.34 L1130.22 251.71 L1129.45 250.08 L1128.66 248.45 L1127.85 246.82 L1127.03 245.20 L1126.19 243.57 L1125.33 241.94 L1124.46 240.31 L1123.56 238.68 L1122.66 237.05 L1121.73 235.43 L1120.79 233.80 L1119.83 232.17 L1118.86 230.54 L1117.86 228.91 L1116.86 227.28 L1115.83 225.66 L1114.79 224.03 L1113.73 222.40 L1112.66 220.77 L1111.57 219.14 L1110.47 217.51 L1109.35 215.89 L1108.21 214.26 L1107.06 212.63 L1105.89 211.00 L1104.71 209.37 L1103.51 207.74 L1102.30 206.12 L1101.07 204.49 L1099.82 202.86 L1098.56 201.23 L1097.29 199.60 L1096.00 197.97 L1094.70 196.35 L1093.38 194.72 L1092.04 193.09 L1090.70 191.46 L1089.34 189.83 L1087.96 188.20 L1086.57 186.58 L1085.17 184.95 L1083.75 183.32 L1082.32 181.69 L1080.87 180.06 L1079.41 178.43 L1077.94 176.81 L1076.45 175.18 L1074.95 173.55 L1073.44 171.92 L1071.92 170.29 L1070.38 168.66 L1068.83 167.04 L1067.26 165.41 L1065.69 163.78 L1064.10 162.15 L1062.50 160.52 L1060.88 158.89 L1059.26 157.27 L1057.62 155.64 L1055.97 154.01 L1054.31 152.38 L1052.64 150.75 L1050.95 149.12 L1049.26 147.49 L1047.55 145.87 L1045.84 144.24 L1044.11 142.61 L1042.37 140.98 L1040.62 139.35 L1038.86 137.72 L1037.09 136.10 L1035.31 134.47 L1033.52 132.84 L1031.71 131.21 L1029.90 129.58 L1028.08 127.95 L1026.25 126.33 L1024.41 124.70 L1022.56 123.07 L1020.71 121.44 L1018.84 119.81 L1016.96 118.18 L1015.08 116.56 L1013.19 114.93 L1011.28 113.30 L1009.37 111.67 L1007.46 110.04 L1005.53 108.41 L1003.60 106.79 L1001.65 105.16 L999.71 103.53 L997.75 101.90 L995.79 100.27 L993.81 98.64 L991.84 97.02 L989.85 95.39 L987.86 93.76 L985.86 92.13 L983.86 90.50 L981.85 88.87 L979.83 87.25 L977.81 85.62 L975.78 83.99 L973.75 82.36 L971.71 80.73 L969.66 79.10 L967.61 77.48 L965.56 75.85 L963.50 74.22 L961.44 72.59 L959.37 70.96 L957.29 69.33 L955.22 67.71 L953.14 66.08 L951.05 64.45 L948.96 62.82 L946.87 61.19 L944.77 59.56 L942.68 57.94 L940.57 56.31 L938.47 54.68 L936.36 53.05 L934.25 51.42 L932.14 49.79 L930.02 48.17 L927.91 46.54 L925.79 44.91 L923.67 43.28 L921.55 41.65 L919.42 40.02 L917.30 38.40 L915.17 36.77 L913.04 35.14 L910.92 33.51 L908.79 31.88 L906.66 30.25 L904.53 28.63 L902.40 27.00"/><path d="M902.40 613.20 L904.10 611.57 L905.81 609.95 L907.51 608.32 L909.21 606.69 L910.92 605.06 L912.62 603.43 L914.32 601.80 L916.02 600.18 L917.72 598.55 L919.41 596.92 L921.11 595.29 L922.81 593.66 L924.50 592.03 L926.19 590.41 L927.88 588.78 L929.57 587.15 L931.26 585.52 L932.94 583.89 L934.62 582.26 L936.30 580.64 L937.98 579.01 L939.65 577.38 L941.32 575.75 L942.99 574.12 L944.65 572.49 L946.32 570.87 L947.97 569.24 L949.63 567.61 L951.28 565.98 L952.93 564.35 L954.57 562.72 L956.21 561.10 L957.85 559.47 L959.48 557.84 L961.10 556.21 L962.73 554.58 L964.34 552.95 L965.96 551.33 L967.57 549.70 L969.17 548.07 L970.77 546.44 L972.36 544.81 L973.95 543.18 L975.53 541.56 L977.11 539.93 L978.68 538.30 L980.24 536.67 L981.80 535.04 L983.36 533.41 L984.90 531.79 L986.45 530.16 L987.98 528.53 L989.51 526.90 L991.03 525.27 L992.54 523.64 L994.05 522.02 L995.55 520.39 L997.05 518.76 L998.53 517.13 L1000.01 515.50 L1001.48 513.87 L1002.95 512.25 L1004.40 510.62 L1005.85 508.99 L1007.29 507.36 L1008.73 505.73 L1010.15 504.10 L1011.57 502.48 L1012.97 500.85 L1014.37 499.22 L1015.77 497.59 L1017.15 495.96 L1018.52 494.33 L1019.89 492.71 L1021.24 491.08 L1022.59 489.45 L1023.93 487.82 L1025.26 486.19 L1026.58 484.56 L1027.89 482.94 L1029.19 481.31 L1030.48 479.68 L1031.76 478.05 L1033.03 476.42 L1034.29 474.79 L1035.54 473.16 L1036.78 471.54 L1038.01 469.91 L1039.23 468.28 L1040.44 466.65 L1041.64 465.02 L1042.83 463.39 L1044.01 461.77 L1045.18 460.14 L1046.33 458.51 L1047.48 456.88 L1048.61 455.25 L1049.74 453.62 L1050.85 452.00 L1051.95 450.37 L1053.04 448.74 L1054.12 447.11 L1055.18 445.48 L1056.24 443.85 L1057.28 442.23 L1058.31 440.60 L1059.33 438.97 L1060.34 437.34 L1061.33 435.71 L1062.32 434.08 L1063.29 432.46 L1064.25 430.83 L1065.19 429.20 L1066.13 427.57 L1067.05 425.94 L1067.96 424.31 L1068.85 422.69 L1069.74 421.06 L1070.61 419.43 L1071.47 417.80 L1072.31 416.17 L1073.15 414.54 L1073.96 412.92 L1074.77 411.29 L1075.56 409.66 L1076.34 408.03 L1077.11 406.40 L1077.86 404.77 L1078.60 403.15 L1079.33 401.52 L1080.04 399.89 L1080.74 398.26 L1081.43 396.63 L1082.10 395.00 L1082.76 393.38 L1083.41 391.75 L1084.04 390.12 L1084.66 388.49 L1085.26 386.86 L1085.85 385.23 L1086.42 383.61 L1086.99 381.98 L1087.53 380.35 L1088.07 378.72 L1088.59 377.09 L1089.09 375.46 L1089.58 373.84 L1090.06 372.21 L1090.52 370.58 L1090.97 368.95 L1091.40 367.32 L1091.82 365.69 L1092.23 364.07 L1092.62 362.44 L1092.99 360.81 L1093.36 359.18 L1093.70 357.55 L1094.04 355.92 L1094.35 354.30 L1094.66 352.67 L1094.94 351.04 L1095.22 349.41 L1095.48 347.78 L1095.72 346.15 L1095.95 344.53 L1096.17 342.90 L1096.37 341.27 L1096.55 339.64 L1096.72 338.01 L1096.88 336.38 L1097.02 334.76 L1097.15 333.13 L1097.26 331.50 L1097.35 329.87 L1097.44 328.24 L1097.50 326.61 L1097.56 324.99 L1097.59 323.36 L1097.61 321.73 L1097.62 320.10 L1097.61 318.47 L1097.59 316.84 L1097.56 315.21 L1097.50 313.59 L1097.44 311.96 L1097.35 310.33 L1097.26 308.70 L1097.15 307.07 L1097.02 305.44 L1096.88 303.82 L1096.72 302.19 L1096.55 300.56 L1096.37 298.93 L1096.17 297.30 L1095.95 295.67 L1095.72 294.05 L1095.48 292.42 L1095.22 290.79 L1094.94 289.16 L1094.66 287.53 L1094.35 285.90 L1094.04 284.28 L1093.70 282.65 L1093.36 281.02 L1092.99 279.39 L1092.62 277.76 L1092.23 276.13 L1091.82 274.51 L1091.40 272.88 L1090.97 271.25 L1090.52 269.62 L1090.06 267.99 L1089.58 266.36 L1089.09 264.74 L1088.59 263.11 L1088.07 261.48 L1087.53 259.85 L1086.99 258.22 L1086.42 256.59 L1085.85 254.97 L1085.26 253.34 L1084.66 251.71 L1084.04 250.08 L1083.41 248.45 L1082.76 246.82 L1082.10 245.20 L1081.43 243.57 L1080.74 241.94 L1080.04 240.31 L1079.33 238.68 L1078.60 237.05 L1077.86 235.43 L1077.11 233.80 L1076.34 232.17 L1075.56 230.54 L1074.77 228.91 L1073.96 227.28 L1073.15 225.66 L1072.31 224.03 L1071.47 222.40 L1070.61 220.77 L1069.74 219.14 L1068.85 217.51 L1067.96 215.89 L1067.05 214.26 L1066.13 212.63 L1065.19 211.00 L1064.25 209.37 L1063.29 207.74 L1062.32 206.12 L1061.33 204.49 L1060.34 202.86 L1059.33 201.23 L1058.31 199.60 L1057.28 197.97 L1056.24 196.35 L1055.18 194.72 L1054.12 193.09 L1053.04 191.46 L1051.95 189.83 L1050.85 188.20 L1049.74 186.58 L1048.61 184.95 L1047.48 183.32 L1046.33 181.69 L1045.18 180.06 L1044.01 178.43 L1042.83 176.81 L1041.64 175.18 L1040.44 173.55 L1039.23 171.92 L1038.01 170.29 L1036.78 168.66 L1035.54 167.04 L1034.29 165.41 L1033.03 163.78 L1031.76 162.15 L1030.48 160.52 L1029.19 158.89 L1027.89 157.27 L1026.58 155.64 L1025.26 154.01 L1023.93 152.38 L1022.59 150.75 L1021.24 149.12 L1019.89 147.49 L1018.52 145.87 L1017.15 144.24 L1015.77 142.61 L1014.37 140.98 L1012.97 139.35 L1011.57 137.72 L1010.15 136.10 L1008.73 134.47 L1007.29 132.84 L1005.85 131.21 L1004.40 129.58 L1002.95 127.95 L1001.48 126.33 L1000.01 124.70 L998.53 123.07 L997.05 121.44 L995.55 119.81 L994.05 118.18 L992.54 116.56 L991.03 114.93 L989.51 113.30 L987.98 111.67 L986.45 110.04 L984.90 108.41 L983.36 106.79 L981.80 105.16 L980.24 103.53 L978.68 101.90 L977.11 100.27 L975.53 98.64 L973.95 97.02 L972.36 95.39 L970.77 93.76 L969.17 92.13 L967.57 90.50 L965.96 88.87 L964.34 87.25 L962.73 85.62 L961.10 83.99 L959.48 82.36 L957.85 80.73 L956.21 79.10 L954.57 77.48 L952.93 75.85 L951.28 74.22 L949.63 72.59 L947.97 70.96 L946.32 69.33 L944.65 67.71 L942.99 66.08 L941.32 64.45 L939.65 62.82 L937.98 61.19 L936.30 59.56 L934.62 57.94 L932.94 56.31 L931.26 54.68 L929.57 53.05 L927.88 51.42 L926.19 49.79 L924.50 48.17 L922.81 46.54 L921.11 44.91 L919.41 43.28 L917.72 41.65 L916.02 40.02 L914.32 38.40 L912.62 36.77 L910.92 35.14 L909.21 33.51 L907.51 31.88 L905.81 30.25 L904.10 28.63 L902.40 27.00"/><path d="M902.40 613.20 L903.68 611.57 L904.96 609.95 L906.23 608.32 L907.51 606.69 L908.79 605.06 L910.06 603.43 L911.34 601.80 L912.61 600.18 L913.89 598.55 L915.16 596.92 L916.43 595.29 L917.70 593.66 L918.97 592.03 L920.24 590.41 L921.51 588.78 L922.78 587.15 L924.04 585.52 L925.30 583.89 L926.57 582.26 L927.82 580.64 L929.08 579.01 L930.34 577.38 L931.59 575.75 L932.84 574.12 L934.09 572.49 L935.34 570.87 L936.58 569.24 L937.82 567.61 L939.06 565.98 L940.30 564.35 L941.53 562.72 L942.76 561.10 L943.98 559.47 L945.21 557.84 L946.43 556.21 L947.65 554.58 L948.86 552.95 L950.07 551.33 L951.27 549.70 L952.48 548.07 L953.68 546.44 L954.87 544.81 L956.06 543.18 L957.25 541.56 L958.43 539.93 L959.61 538.30 L960.78 536.67 L961.95 535.04 L963.12 533.41 L964.28 531.79 L965.43 530.16 L966.58 528.53 L967.73 526.90 L968.87 525.27 L970.01 523.64 L971.14 522.02 L972.26 520.39 L973.38 518.76 L974.50 517.13 L975.61 515.50 L976.71 513.87 L977.81 512.25 L978.90 510.62 L979.99 508.99 L981.07 507.36 L982.14 505.73 L983.21 504.10 L984.28 502.48 L985.33 500.85 L986.38 499.22 L987.42 497.59 L988.46 495.96 L989.49 494.33 L990.52 492.71 L991.53 491.08 L992.54 489.45 L993.55 487.82 L994.54 486.19 L995.53 484.56 L996.51 482.94 L997.49 481.31 L998.46 479.68 L999.42 478.05 L1000.37 476.42 L1001.32 474.79 L1002.26 473.16 L1003.19 471.54 L1004.11 469.91 L1005.02 468.28 L1005.93 466.65 L1006.83 465.02 L1007.72 463.39 L1008.61 461.77 L1009.48 460.14 L1010.35 458.51 L1011.21 456.88 L1012.06 455.25 L1012.90 453.62 L1013.74 452.00 L1014.56 450.37 L1015.38 448.74 L1016.19 447.11 L1016.99 445.48 L1017.78 443.85 L1018.56 442.23 L1019.33 440.60 L1020.10 438.97 L1020.85 437.34 L1021.60 435.71 L1022.34 434.08 L1023.07 432.46 L1023.78 430.83 L1024.49 429.20 L1025.20 427.57 L1025.89 425.94 L1026.57 424.31 L1027.24 422.69 L1027.90 421.06 L1028.56 419.43 L1029.20 417.80 L1029.83 416.17 L1030.46 414.54 L1031.07 412.92 L1031.68 411.29 L1032.27 409.66 L1032.86 408.03 L1033.43 406.40 L1034.00 404.77 L1034.55 403.15 L1035.10 401.52 L1035.63 399.89 L1036.16 398.26 L1036.67 396.63 L1037.18 395.00 L1037.67 393.38 L1038.16 391.75 L1038.63 390.12 L1039.09 388.49 L1039.54 386.86 L1039.99 385.23 L1040.42 383.61 L1040.84 381.98 L1041.25 380.35 L1041.65 378.72 L1042.04 377.09 L1042.42 375.46 L1042.79 373.84 L1043.14 372.21 L1043.49 370.58 L1043.83 368.95 L1044.15 367.32 L1044.47 365.69 L1044.77 364.07 L1045.06 362.44 L1045.35 360.81 L1045.62 359.18 L1045.88 357.55 L1046.13 355.92 L1046.36 354.30 L1046.59 352.67 L1046.81 351.04 L1047.01 349.41 L1047.21 347.78 L1047.39 346.15 L1047.56 344.53 L1047.73 342.90 L1047.88 341.27 L1048.01 339.64 L1048.14 338.01 L1048.26 336.38 L1048.37 334.76 L1048.46 333.13 L1048.54 331.50 L1048.62 329.87 L1048.68 328.24 L1048.73 326.61 L1048.77 324.99 L1048.79 323.36 L1048.81 321.73 L1048.82 320.10 L1048.81 318.47 L1048.79 316.84 L1048.77 315.21 L1048.73 313.59 L1048.68 311.96 L1048.62 310.33 L1048.54 308.70 L1048.46 307.07 L1048.37 305.44 L1048.26 303.82 L1048.14 302.19 L1048.01 300.56 L1047.88 298.93 L1047.73 297.30 L1047.56 295.67 L1047.39 294.05 L1047.21 292.42 L1047.01 290.79 L1046.81 289.16 L1046.59 287.53 L1046.36 285.90 L1046.13 284.28 L1045.88 282.65 L1045.62 281.02 L1045.35 279.39 L1045.06 277.76 L1044.77 276.13 L1044.47 274.51 L1044.15 272.88 L1043.83 271.25 L1043.49 269.62 L1043.14 267.99 L1042.79 266.36 L1042.42 264.74 L1042.04 263.11 L1041.65 261.48 L1041.25 259.85 L1040.84 258.22 L1040.42 256.59 L1039.99 254.97 L1039.54 253.34 L1039.09 251.71 L1038.63 250.08 L1038.16 248.45 L1037.67 246.82 L1037.18 245.20 L1036.67 243.57 L1036.16 241.94 L1035.63 240.31 L1035.10 238.68 L1034.55 237.05 L1034.00 235.43 L1033.43 233.80 L1032.86 232.17 L1032.27 230.54 L1031.68 228.91 L1031.07 227.28 L1030.46 225.66 L1029.83 224.03 L1029.20 222.40 L1028.56 220.77 L1027.90 219.14 L1027.24 217.51 L1026.57 215.89 L1025.89 214.26 L1025.20 212.63 L1024.49 211.00 L1023.78 209.37 L1023.07 207.74 L1022.34 206.12 L1021.60 204.49 L1020.85 202.86 L1020.10 201.23 L1019.33 199.60 L1018.56 197.97 L1017.78 196.35 L1016.99 194.72 L1016.19 193.09 L1015.38 191.46 L1014.56 189.83 L1013.74 188.20 L1012.90 186.58 L1012.06 184.95 L1011.21 183.32 L1010.35 181.69 L1009.48 180.06 L1008.61 178.43 L1007.72 176.81 L1006.83 175.18 L1005.93 173.55 L1005.02 171.92 L1004.11 170.29 L1003.19 168.66 L1002.26 167.04 L1001.32 165.41 L1000.37 163.78 L999.42 162.15 L998.46 160.52 L997.49 158.89 L996.51 157.27 L995.53 155.64 L994.54 154.01 L993.55 152.38 L992.54 150.75 L991.53 149.12 L990.52 147.49 L989.49 145.87 L988.46 144.24 L987.42 142.61 L986.38 140.98 L985.33 139.35 L984.28 137.72 L983.21 136.10 L982.14 134.47 L981.07 132.84 L979.99 131.21 L978.90 129.58 L977.81 127.95 L976.71 126.33 L975.61 124.70 L974.50 123.07 L973.38 121.44 L972.26 119.81 L971.14 118.18 L970.01 116.56 L968.87 114.93 L967.73 113.30 L966.58 111.67 L965.43 110.04 L964.28 108.41 L963.12 106.79 L961.95 105.16 L960.78 103.53 L959.61 101.90 L958.43 100.27 L957.25 98.64 L956.06 97.02 L954.87 95.39 L953.68 93.76 L952.48 92.13 L951.27 90.50 L950.07 88.87 L948.86 87.25 L947.65 85.62 L946.43 83.99 L945.21 82.36 L943.98 80.73 L942.76 79.10 L941.53 77.48 L940.30 75.85 L939.06 74.22 L937.82 72.59 L936.58 70.96 L935.34 69.33 L934.09 67.71 L932.84 66.08 L931.59 64.45 L930.34 62.82 L929.08 61.19 L927.82 59.56 L926.57 57.94 L925.30 56.31 L924.04 54.68 L922.78 53.05 L921.51 51.42 L920.24 49.79 L918.97 48.17 L917.70 46.54 L916.43 44.91 L915.16 43.28 L913.89 41.65 L912.61 40.02 L911.34 38.40 L910.06 36.77 L908.79 35.14 L907.51 33.51 L906.23 31.88 L904.96 30.25 L903.68 28.63 L902.40 27.00"/><path d="M902.40 613.20 L903.25 611.57 L904.10 609.95 L904.96 608.32 L905.81 606.69 L906.66 605.06 L907.51 603.43 L908.36 601.80 L909.21 600.18 L910.06 598.55 L910.91 596.92 L911.76 595.29 L912.60 593.66 L913.45 592.03 L914.30 590.41 L915.14 588.78 L915.98 587.15 L916.83 585.52 L917.67 583.89 L918.51 582.26 L919.35 580.64 L920.19 579.01 L921.03 577.38 L921.86 575.75 L922.69 574.12 L923.53 572.49 L924.36 570.87 L925.19 569.24 L926.01 567.61 L926.84 565.98 L927.66 564.35 L928.49 562.72 L929.31 561.10 L930.12 559.47 L930.94 557.84 L931.75 556.21 L932.56 554.58 L933.37 552.95 L934.18 551.33 L934.98 549.70 L935.78 548.07 L936.58 546.44 L937.38 544.81 L938.17 543.18 L938.97 541.56 L939.75 539.93 L940.54 538.30 L941.32 536.67 L942.10 535.04 L942.88 533.41 L943.65 531.79 L944.42 530.16 L945.19 528.53 L945.95 526.90 L946.71 525.27 L947.47 523.64 L948.23 522.02 L948.98 520.39 L949.72 518.76 L950.47 517.13 L951.21 515.50 L951.94 513.87 L952.67 512.25 L953.40 510.62 L954.13 508.99 L954.85 507.36 L955.56 505.73 L956.28 504.10 L956.98 502.48 L957.69 500.85 L958.39 499.22 L959.08 497.59 L959.77 495.96 L960.46 494.33 L961.14 492.71 L961.82 491.08 L962.50 489.45 L963.16 487.82 L963.83 486.19 L964.49 484.56 L965.14 482.94 L965.79 481.31 L966.44 479.68 L967.08 478.05 L967.71 476.42 L968.35 474.79 L968.97 473.16 L969.59 471.54 L970.21 469.91 L970.82 468.28 L971.42 466.65 L972.02 465.02 L972.62 463.39 L973.20 461.77 L973.79 460.14 L974.37 458.51 L974.94 456.88 L975.51 455.25 L976.07 453.62 L976.62 452.00 L977.17 450.37 L977.72 448.74 L978.26 447.11 L978.79 445.48 L979.32 443.85 L979.84 442.23 L980.36 440.60 L980.87 438.97 L981.37 437.34 L981.87 435.71 L982.36 434.08 L982.84 432.46 L983.32 430.83 L983.80 429.20 L984.26 427.57 L984.72 425.94 L985.18 424.31 L985.63 422.69 L986.07 421.06 L986.50 419.43 L986.93 417.80 L987.36 416.17 L987.77 414.54 L988.18 412.92 L988.59 411.29 L988.98 409.66 L989.37 408.03 L989.76 406.40 L990.13 404.77 L990.50 403.15 L990.87 401.52 L991.22 399.89 L991.57 398.26 L991.92 396.63 L992.25 395.00 L992.58 393.38 L992.90 391.75 L993.22 390.12 L993.53 388.49 L993.83 386.86 L994.12 385.23 L994.41 383.61 L994.69 381.98 L994.97 380.35 L995.23 378.72 L995.49 377.09 L995.75 375.46 L995.99 373.84 L996.23 372.21 L996.46 370.58 L996.68 368.95 L996.90 367.32 L997.11 365.69 L997.31 364.07 L997.51 362.44 L997.70 360.81 L997.88 359.18 L998.05 357.55 L998.22 355.92 L998.38 354.30 L998.53 352.67 L998.67 351.04 L998.81 349.41 L998.94 347.78 L999.06 346.15 L999.18 344.53 L999.28 342.90 L999.38 341.27 L999.48 339.64 L999.56 338.01 L999.64 336.38 L999.71 334.76 L999.77 333.13 L999.83 331.50 L999.88 329.87 L999.92 328.24 L999.95 326.61 L999.98 324.99 L1000.00 323.36 L1000.01 321.73 L1000.01 320.10 L1000.01 318.47 L1000.00 316.84 L999.98 315.21 L999.95 313.59 L999.92 311.96 L999.88 310.33 L999.83 308.70 L999.77 307.07 L999.71 305.44 L999.64 303.82 L999.56 302.19 L999.48 300.56 L999.38 298.93 L999.28 297.30 L999.18 295.67 L999.06 294.05 L998.94 292.42 L998.81 290.79 L998.67 289.16 L998.53 287.53 L998.38 285.90 L998.22 284.28 L998.05 282.65 L997.88 281.02 L997.70 279.39 L997.51 277.76 L997.31 276.13 L997.11 274.51 L996.90 272.88 L996.68 271.25 L996.46 269.62 L996.23 267.99 L995.99 266.36 L995.75 264.74 L995.49 263.11 L995.23 261.48 L994.97 259.85 L994.69 258.22 L994.41 256.59 L994.12 254.97 L993.83 253.34 L993.53 251.71 L993.22 250.08 L992.90 248.45 L992.58 246.82 L992.25 245.20 L991.92 243.57 L991.57 241.94 L991.22 240.31 L990.87 238.68 L990.50 237.05 L990.13 235.43 L989.76 233.80 L989.37 232.17 L988.98 230.54 L988.59 228.91 L988.18 227.28 L987.77 225.66 L987.36 224.03 L986.93 222.40 L986.50 220.77 L986.07 219.14 L985.63 217.51 L985.18 215.89 L984.72 214.26 L984.26 212.63 L983.80 211.00 L983.32 209.37 L982.84 207.74 L982.36 206.12 L981.87 204.49 L981.37 202.86 L980.87 201.23 L980.36 199.60 L979.84 197.97 L979.32 196.35 L978.79 194.72 L978.26 193.09 L977.72 191.46 L977.17 189.83 L976.62 188.20 L976.07 186.58 L975.51 184.95 L974.94 183.32 L974.37 181.69 L973.79 180.06 L973.20 178.43 L972.62 176.81 L972.02 175.18 L971.42 173.55 L970.82 171.92 L970.21 170.29 L969.59 168.66 L968.97 167.04 L968.35 165.41 L967.71 163.78 L967.08 162.15 L966.44 160.52 L965.79 158.89 L965.14 157.27 L964.49 155.64 L963.83 154.01 L963.16 152.38 L962.50 150.75 L961.82 149.12 L961.14 147.49 L960.46 145.87 L959.77 144.24 L959.08 142.61 L958.39 140.98 L957.69 139.35 L956.98 137.72 L956.28 136.10 L955.56 134.47 L954.85 132.84 L954.13 131.21 L953.40 129.58 L952.67 127.95 L951.94 126.33 L951.21 124.70 L950.47 123.07 L949.72 121.44 L948.98 119.81 L948.23 118.18 L947.47 116.56 L946.71 114.93 L945.95 113.30 L945.19 111.67 L944.42 110.04 L943.65 108.41 L942.88 106.79 L942.10 105.16 L941.32 103.53 L940.54 101.90 L939.75 100.27 L938.97 98.64 L938.17 97.02 L937.38 95.39 L936.58 93.76 L935.78 92.13 L934.98 90.50 L934.18 88.87 L933.37 87.25 L932.56 85.62 L931.75 83.99 L930.94 82.36 L930.12 80.73 L929.31 79.10 L928.49 77.48 L927.66 75.85 L926.84 74.22 L926.01 72.59 L925.19 70.96 L924.36 69.33 L923.53 67.71 L922.69 66.08 L921.86 64.45 L921.03 62.82 L920.19 61.19 L919.35 59.56 L918.51 57.94 L917.67 56.31 L916.83 54.68 L915.98 53.05 L915.14 51.42 L914.30 49.79 L913.45 48.17 L912.60 46.54 L911.76 44.91 L910.91 43.28 L910.06 41.65 L909.21 40.02 L908.36 38.40 L907.51 36.77 L906.66 35.14 L905.81 33.51 L904.96 31.88 L904.10 30.25 L903.25 28.63 L902.40 27.00"/><path d="M902.40 613.20 L902.83 611.57 L903.25 609.95 L903.68 608.32 L904.10 606.69 L904.53 605.06 L904.95 603.43 L905.38 601.80 L905.80 600.18 L906.23 598.55 L906.65 596.92 L907.08 595.29 L907.50 593.66 L907.92 592.03 L908.35 590.41 L908.77 588.78 L909.19 587.15 L909.61 585.52 L910.03 583.89 L910.46 582.26 L910.87 580.64 L911.29 579.01 L911.71 577.38 L912.13 575.75 L912.55 574.12 L912.96 572.49 L913.38 570.87 L913.79 569.24 L914.21 567.61 L914.62 565.98 L915.03 564.35 L915.44 562.72 L915.85 561.10 L916.26 559.47 L916.67 557.84 L917.08 556.21 L917.48 554.58 L917.89 552.95 L918.29 551.33 L918.69 549.70 L919.09 548.07 L919.49 546.44 L919.89 544.81 L920.29 543.18 L920.68 541.56 L921.08 539.93 L921.47 538.30 L921.86 536.67 L922.25 535.04 L922.64 533.41 L923.03 531.79 L923.41 530.16 L923.79 528.53 L924.18 526.90 L924.56 525.27 L924.94 523.64 L925.31 522.02 L925.69 520.39 L926.06 518.76 L926.43 517.13 L926.80 515.50 L927.17 513.87 L927.54 512.25 L927.90 510.62 L928.26 508.99 L928.62 507.36 L928.98 505.73 L929.34 504.10 L929.69 502.48 L930.04 500.85 L930.39 499.22 L930.74 497.59 L931.09 495.96 L931.43 494.33 L931.77 492.71 L932.11 491.08 L932.45 489.45 L932.78 487.82 L933.11 486.19 L933.44 484.56 L933.77 482.94 L934.10 481.31 L934.42 479.68 L934.74 478.05 L935.06 476.42 L935.37 474.79 L935.69 473.16 L936.00 471.54 L936.30 469.91 L936.61 468.28 L936.91 466.65 L937.21 465.02 L937.51 463.39 L937.80 461.77 L938.09 460.14 L938.38 458.51 L938.67 456.88 L938.95 455.25 L939.23 453.62 L939.51 452.00 L939.79 450.37 L940.06 448.74 L940.33 447.11 L940.60 445.48 L940.86 443.85 L941.12 442.23 L941.38 440.60 L941.63 438.97 L941.88 437.34 L942.13 435.71 L942.38 434.08 L942.62 432.46 L942.86 430.83 L943.10 429.20 L943.33 427.57 L943.56 425.94 L943.79 424.31 L944.01 422.69 L944.23 421.06 L944.45 419.43 L944.67 417.80 L944.88 416.17 L945.09 414.54 L945.29 412.92 L945.49 411.29 L945.69 409.66 L945.89 408.03 L946.08 406.40 L946.27 404.77 L946.45 403.15 L946.63 401.52 L946.81 399.89 L946.99 398.26 L947.16 396.63 L947.33 395.00 L947.49 393.38 L947.65 391.75 L947.81 390.12 L947.96 388.49 L948.11 386.86 L948.26 385.23 L948.41 383.61 L948.55 381.98 L948.68 380.35 L948.82 378.72 L948.95 377.09 L949.07 375.46 L949.20 373.84 L949.31 372.21 L949.43 370.58 L949.54 368.95 L949.65 367.32 L949.76 365.69 L949.86 364.07 L949.95 362.44 L950.05 360.81 L950.14 359.18 L950.23 357.55 L950.31 355.92 L950.39 354.30 L950.46 352.67 L950.54 351.04 L950.60 349.41 L950.67 347.78 L950.73 346.15 L950.79 344.53 L950.84 342.90 L950.89 341.27 L950.94 339.64 L950.98 338.01 L951.02 336.38 L951.06 334.76 L951.09 333.13 L951.11 331.50 L951.14 329.87 L951.16 328.24 L951.18 326.61 L951.19 324.99 L951.20 323.36 L951.20 321.73 L951.21 320.10 L951.20 318.47 L951.20 316.84 L951.19 315.21 L951.18 313.59 L951.16 311.96 L951.14 310.33 L951.11 308.70 L951.09 307.07 L951.06 305.44 L951.02 303.82 L950.98 302.19 L950.94 300.56 L950.89 298.93 L950.84 297.30 L950.79 295.67 L950.73 294.05 L950.67 292.42 L950.60 290.79 L950.54 289.16 L950.46 287.53 L950.39 285.90 L950.31 284.28 L950.23 282.65 L950.14 281.02 L950.05 279.39 L949.95 277.76 L949.86 276.13 L949.76 274.51 L949.65 272.88 L949.54 271.25 L949.43 269.62 L949.31 267.99 L949.20 266.36 L949.07 264.74 L948.95 263.11 L948.82 261.48 L948.68 259.85 L948.55 258.22 L948.41 256.59 L948.26 254.97 L948.11 253.34 L947.96 251.71 L947.81 250.08 L947.65 248.45 L947.49 246.82 L947.33 245.20 L947.16 243.57 L946.99 241.94 L946.81 240.31 L946.63 238.68 L946.45 237.05 L946.27 235.43 L946.08 233.80 L945.89 232.17 L945.69 230.54 L945.49 228.91 L945.29 227.28 L945.09 225.66 L944.88 224.03 L944.67 222.40 L944.45 220.77 L944.23 219.14 L944.01 217.51 L943.79 215.89 L943.56 214.26 L943.33 212.63 L943.10 211.00 L942.86 209.37 L942.62 207.74 L942.38 206.12 L942.13 204.49 L941.88 202.86 L941.63 201.23 L941.38 199.60 L941.12 197.97 L940.86 196.35 L940.60 194.72 L940.33 193.09 L940.06 191.46 L939.79 189.83 L939.51 188.20 L939.23 186.58 L938.95 184.95 L938.67 183.32 L938.38 181.69 L938.09 180.06 L937.80 178.43 L937.51 176.81 L937.21 175.18 L936.91 173.55 L936.61 171.92 L936.30 170.29 L936.00 168.66 L935.69 167.04 L935.37 165.41 L935.06 163.78 L934.74 162.15 L934.42 160.52 L934.10 158.89 L933.77 157.27 L933.44 155.64 L933.11 154.01 L932.78 152.38 L932.45 150.75 L932.11 149.12 L931.77 147.49 L931.43 145.87 L931.09 144.24 L930.74 142.61 L930.39 140.98 L930.04 139.35 L929.69 137.72 L929.34 136.10 L928.98 134.47 L928.62 132.84 L928.26 131.21 L927.90 129.58 L927.54 127.95 L927.17 126.33 L926.80 124.70 L926.43 123.07 L926.06 121.44 L925.69 119.81 L925.31 118.18 L924.94 116.56 L924.56 114.93 L924.18 113.30 L923.79 111.67 L923.41 110.04 L923.03 108.41 L922.64 106.79 L922.25 105.16 L921.86 103.53 L921.47 101.90 L921.08 100.27 L920.68 98.64 L920.29 97.02 L919.89 95.39 L919.49 93.76 L919.09 92.13 L918.69 90.50 L918.29 88.87 L917.89 87.25 L917.48 85.62 L917.08 83.99 L916.67 82.36 L916.26 80.73 L915.85 79.10 L915.44 77.48 L915.03 75.85 L914.62 74.22 L914.21 72.59 L913.79 70.96 L913.38 69.33 L912.96 67.71 L912.55 66.08 L912.13 64.45 L911.71 62.82 L911.29 61.19 L910.87 59.56 L910.46 57.94 L910.03 56.31 L909.61 54.68 L909.19 53.05 L908.77 51.42 L908.35 49.79 L907.92 48.17 L907.50 46.54 L907.08 44.91 L906.65 43.28 L906.23 41.65 L905.80 40.02 L905.38 38.40 L904.95 36.77 L904.53 35.14 L904.10 33.51 L903.68 31.88 L903.25 30.25 L902.83 28.63 L902.40 27.00"/><path d="M902.40 613.20 L902.40 611.57 L902.40 609.95 L902.40 608.32 L902.40 606.69 L902.40 605.06 L902.40 603.43 L902.40 601.80 L902.40 600.18 L902.40 598.55 L902.40 596.92 L902.40 595.29 L902.40 593.66 L902.40 592.03 L902.40 590.41 L902.40 588.78 L902.40 587.15 L902.40 585.52 L902.40 583.89 L902.40 582.26 L902.40 580.64 L902.40 579.01 L902.40 577.38 L902.40 575.75 L902.40 574.12 L902.40 572.49 L902.40 570.87 L902.40 569.24 L902.40 567.61 L902.40 565.98 L902.40 564.35 L902.40 562.72 L902.40 561.10 L902.40 559.47 L902.40 557.84 L902.40 556.21 L902.40 554.58 L902.40 552.95 L902.40 551.33 L902.40 549.70 L902.40 548.07 L902.40 546.44 L902.40 544.81 L902.40 543.18 L902.40 541.56 L902.40 539.93 L902.40 538.30 L902.40 536.67 L902.40 535.04 L902.40 533.41 L902.40 531.79 L902.40 530.16 L902.40 528.53 L902.40 526.90 L902.40 525.27 L902.40 523.64 L902.40 522.02 L902.40 520.39 L902.40 518.76 L902.40 517.13 L902.40 515.50 L902.40 513.87 L902.40 512.25 L902.40 510.62 L902.40 508.99 L902.40 507.36 L902.40 505.73 L902.40 504.10 L902.40 502.48 L902.40 500.85 L902.40 499.22 L902.40 497.59 L902.40 495.96 L902.40 494.33 L902.40 492.71 L902.40 491.08 L902.40 489.45 L902.40 487.82 L902.40 486.19 L902.40 484.56 L902.40 482.94 L902.40 481.31 L902.40 479.68 L902.40 478.05 L902.40 476.42 L902.40 474.79 L902.40 473.16 L902.40 471.54 L902.40 469.91 L902.40 468.28 L902.40 466.65 L902.40 465.02 L902.40 463.39 L902.40 461.77 L902.40 460.14 L902.40 458.51 L902.40 456.88 L902.40 455.25 L902.40 453.62 L902.40 452.00 L902.40 450.37 L902.40 448.74 L902.40 447.11 L902.40 445.48 L902.40 443.85 L902.40 442.23 L902.40 440.60 L902.40 438.97 L902.40 437.34 L902.40 435.71 L902.40 434.08 L902.40 432.46 L902.40 430.83 L902.40 429.20 L902.40 427.57 L902.40 425.94 L902.40 424.31 L902.40 422.69 L902.40 421.06 L902.40 419.43 L902.40 417.80 L902.40 416.17 L902.40 414.54 L902.40 412.92 L902.40 411.29 L902.40 409.66 L902.40 408.03 L902.40 406.40 L902.40 404.77 L902.40 403.15 L902.40 401.52 L902.40 399.89 L902.40 398.26 L902.40 396.63 L902.40 395.00 L902.40 393.38 L902.40 391.75 L902.40 390.12 L902.40 388.49 L902.40 386.86 L902.40 385.23 L902.40 383.61 L902.40 381.98 L902.40 380.35 L902.40 378.72 L902.40 377.09 L902.40 375.46 L902.40 373.84 L902.40 372.21 L902.40 370.58 L902.40 368.95 L902.40 367.32 L902.40 365.69 L902.40 364.07 L902.40 362.44 L902.40 360.81 L902.40 359.18 L902.40 357.55 L902.40 355.92 L902.40 354.30 L902.40 352.67 L902.40 351.04 L902.40 349.41 L902.40 347.78 L902.40 346.15 L902.40 344.53 L902.40 342.90 L902.40 341.27 L902.40 339.64 L902.40 338.01 L902.40 336.38 L902.40 334.76 L902.40 333.13 L902.40 331.50 L902.40 329.87 L902.40 328.24 L902.40 326.61 L902.40 324.99 L902.40 323.36 L902.40 321.73 L902.40 320.10 L902.40 318.47 L902.40 316.84 L902.40 315.21 L902.40 313.59 L902.40 311.96 L902.40 310.33 L902.40 308.70 L902.40 307.07 L902.40 305.44 L902.40 303.82 L902.40 302.19 L902.40 300.56 L902.40 298.93 L902.40 297.30 L902.40 295.67 L902.40 294.05 L902.40 292.42 L902.40 290.79 L902.40 289.16 L902.40 287.53 L902.40 285.90 L902.40 284.28 L902.40 282.65 L902.40 281.02 L902.40 279.39 L902.40 277.76 L902.40 276.13 L902.40 274.51 L902.40 272.88 L902.40 271.25 L902.40 269.62 L902.40 267.99 L902.40 266.36 L902.40 264.74 L902.40 263.11 L902.40 261.48 L902.40 259.85 L902.40 258.22 L902.40 256.59 L902.40 254.97 L902.40 253.34 L902.40 251.71 L902.40 250.08 L902.40 248.45 L902.40 246.82 L902.40 245.20 L902.40 243.57 L902.40 241.94 L902.40 240.31 L902.40 238.68 L902.40 237.05 L902.40 235.43 L902.40 233.80 L902.40 232.17 L902.40 230.54 L902.40 228.91 L902.40 227.28 L902.40 225.66 L902.40 224.03 L902.40 222.40 L902.40 220.77 L902.40 219.14 L902.40 217.51 L902.40 215.89 L902.40 214.26 L902.40 212.63 L902.40 211.00 L902.40 209.37 L902.40 207.74 L902.40 206.12 L902.40 204.49 L902.40 202.86 L902.40 201.23 L902.40 199.60 L902.40 197.97 L902.40 196.35 L902.40 194.72 L902.40 193.09 L902.40 191.46 L902.40 189.83 L902.40 188.20 L902.40 186.58 L902.40 184.95 L902.40 183.32 L902.40 181.69 L902.40 180.06 L902.40 178.43 L902.40 176.81 L902.40 175.18 L902.40 173.55 L902.40 171.92 L902.40 170.29 L902.40 168.66 L902.40 167.04 L902.40 165.41 L902.40 163.78 L902.40 162.15 L902.40 160.52 L902.40 158.89 L902.40 157.27 L902.40 155.64 L902.40 154.01 L902.40 152.38 L902.40 150.75 L902.40 149.12 L902.40 147.49 L902.40 145.87 L902.40 144.24 L902.40 142.61 L902.40 140.98 L902.40 139.35 L902.40 137.72 L902.40 136.10 L902.40 134.47 L902.40 132.84 L902.40 131.21 L902.40 129.58 L902.40 127.95 L902.40 126.33 L902.40 124.70 L902.40 123.07 L902.40 121.44 L902.40 119.81 L902.40 118.18 L902.40 116.56 L902.40 114.93 L902.40 113.30 L902.40 111.67 L902.40 110.04 L902.40 108.41 L902.40 106.79 L902.40 105.16 L902.40 103.53 L902.40 101.90 L902.40 100.27 L902.40 98.64 L902.40 97.02 L902.40 95.39 L902.40 93.76 L902.40 92.13 L902.40 90.50 L902.40 88.87 L902.40 87.25 L902.40 85.62 L902.40 83.99 L902.40 82.36 L902.40 80.73 L902.40 79.10 L902.40 77.48 L902.40 75.85 L902.40 74.22 L902.40 72.59 L902.40 70.96 L902.40 69.33 L902.40 67.71 L902.40 66.08 L902.40 64.45 L902.40 62.82 L902.40 61.19 L902.40 59.56 L902.40 57.94 L902.40 56.31 L902.40 54.68 L902.40 53.05 L902.40 51.42 L902.40 49.79 L902.40 48.17 L902.40 46.54 L902.40 44.91 L902.40 43.28 L902.40 41.65 L902.40 40.02 L902.40 38.40 L902.40 36.77 L902.40 35.14 L902.40 33.51 L902.40 31.88 L902.40 30.25 L902.40 28.63 L902.40 27.00"/><path d="M902.40 613.20 L901.97 611.57 L901.55 609.95 L901.12 608.32 L900.70 606.69 L900.27 605.06 L899.85 603.43 L899.42 601.80 L899.00 600.18 L898.57 598.55 L898.15 596.92 L897.72 595.29 L897.30 593.66 L896.88 592.03 L896.45 590.41 L896.03 588.78 L895.61 587.15 L895.19 585.52 L894.77 583.89 L894.34 582.26 L893.93 580.64 L893.51 579.01 L893.09 577.38 L892.67 575.75 L892.25 574.12 L891.84 572.49 L891.42 570.87 L891.01 569.24 L890.59 567.61 L890.18 565.98 L889.77 564.35 L889.36 562.72 L888.95 561.10 L888.54 559.47 L888.13 557.84 L887.72 556.21 L887.32 554.58 L886.91 552.95 L886.51 551.33 L886.11 549.70 L885.71 548.07 L885.31 546.44 L884.91 544.81 L884.51 543.18 L884.12 541.56 L883.72 539.93 L883.33 538.30 L882.94 536.67 L882.55 535.04 L882.16 533.41 L881.77 531.79 L881.39 530.16 L881.01 528.53 L880.62 526.90 L880.24 525.27 L879.86 523.64 L879.49 522.02 L879.11 520.39 L878.74 518.76 L878.37 517.13 L878.00 515.50 L877.63 513.87 L877.26 512.25 L876.90 510.62 L876.54 508.99 L876.18 507.36 L875.82 505.73 L875.46 504.10 L875.11 502.48 L874.76 500.85 L874.41 499.22 L874.06 497.59 L873.71 495.96 L873.37 494.33 L873.03 492.71 L872.69 491.08 L872.35 489.45 L872.02 487.82 L871.69 486.19 L871.36 484.56 L871.03 482.94 L870.70 481.31 L870.38 479.68 L870.06 478.05 L869.74 476.42 L869.43 474.79 L869.11 473.16 L868.80 471.54 L868.50 469.91 L868.19 468.28 L867.89 466.65 L867.59 465.02 L867.29 463.39 L867.00 461.77 L866.71 460.14 L866.42 458.51 L866.13 456.88 L865.85 455.25 L865.57 453.62 L865.29 452.00 L865.01 450.37 L864.74 448.74 L864.47 447.11 L864.20 445.48 L863.94 443.85 L863.68 442.23 L863.42 440.60 L863.17 438.97 L862.92 437.34 L862.67 435.71 L862.42 434.08 L862.18 432.46 L861.94 430.83 L861.70 429.20 L861.47 427.57 L861.24 425.94 L861.01 424.31 L860.79 422.69 L860.57 421.06 L860.35 419.43 L860.13 417.80 L859.92 416.17 L859.71 414.54 L859.51 412.92 L859.31 411.29 L859.11 409.66 L858.91 408.03 L858.72 406.40 L858.53 404.77 L858.35 403.15 L858.17 401.52 L857.99 399.89 L857.81 398.26 L857.64 396.63 L857.47 395.00 L857.31 393.38 L857.15 391.75 L856.99 390.12 L856.84 388.49 L856.69 386.86 L856.54 385.23 L856.39 383.61 L856.25 381.98 L856.12 380.35 L855.98 378.72 L855.85 377.09 L855.73 375.46 L855.60 373.84 L855.49 372.21 L855.37 370.58 L855.26 368.95 L855.15 367.32 L855.04 365.69 L854.94 364.07 L854.85 362.44 L854.75 360.81 L854.66 359.18 L854.57 357.55 L854.49 355.92 L854.41 354.30 L854.34 352.67 L854.26 351.04 L854.20 349.41 L854.13 347.78 L854.07 346.15 L854.01 344.53 L853.96 342.90 L853.91 341.27 L853.86 339.64 L853.82 338.01 L853.78 336.38 L853.74 334.76 L853.71 333.13 L853.69 331.50 L853.66 329.87 L853.64 328.24 L853.62 326.61 L853.61 324.99 L853.60 323.36 L853.60 321.73 L853.59 320.10 L853.60 318.47 L853.60 316.84 L853.61 315.21 L853.62 313.59 L853.64 311.96 L853.66 310.33 L853.69 308.70 L853.71 307.07 L853.74 305.44 L853.78 303.82 L853.82 302.19 L853.86 300.56 L853.91 298.93 L853.96 297.30 L854.01 295.67 L854.07 294.05 L854.13 292.42 L854.20 290.79 L854.26 289.16 L854.34 287.53 L854.41 285.90 L854.49 284.28 L854.57 282.65 L854.66 281.02 L854.75 279.39 L854.85 277.76 L854.94 276.13 L855.04 274.51 L855.15 272.88 L855.26 271.25 L855.37 269.62 L855.49 267.99 L855.60 266.36 L855.73 264.74 L855.85 263.11 L855.98 261.48 L856.12 259.85 L856.25 258.22 L856.39 256.59 L856.54 254.97 L856.69 253.34 L856.84 251.71 L856.99 250.08 L857.15 248.45 L857.31 246.82 L857.47 245.20 L857.64 243.57 L857.81 241.94 L857.99 240.31 L858.17 238.68 L858.35 237.05 L858.53 235.43 L858.72 233.80 L858.91 232.17 L859.11 230.54 L859.31 228.91 L859.51 227.28 L859.71 225.66 L859.92 224.03 L860.13 222.40 L860.35 220.77 L860.57 219.14 L860.79 217.51 L861.01 215.89 L861.24 214.26 L861.47 212.63 L861.70 211.00 L861.94 209.37 L862.18 207.74 L862.42 206.12 L862.67 204.49 L862.92 202.86 L863.17 201.23 L863.42 199.60 L863.68 197.97 L863.94 196.35 L864.20 194.72 L864.47 193.09 L864.74 191.46 L865.01 189.83 L865.29 188.20 L865.57 186.58 L865.85 184.95 L866.13 183.32 L866.42 181.69 L866.71 180.06 L867.00 178.43 L867.29 176.81 L867.59 175.18 L867.89 173.55 L868.19 171.92 L868.50 170.29 L868.80 168.66 L869.11 167.04 L869.43 165.41 L869.74 163.78 L870.06 162.15 L870.38 160.52 L870.70 158.89 L871.03 157.27 L871.36 155.64 L871.69 154.01 L872.02 152.38 L872.35 150.75 L872.69 149.12 L873.03 147.49 L873.37 145.87 L873.71 144.24 L874.06 142.61 L874.41 140.98 L874.76 139.35 L875.11 137.72 L875.46 136.10 L875.82 134.47 L876.18 132.84 L876.54 131.21 L876.90 129.58 L877.26 127.95 L877.63 126.33 L878.00 124.70 L878.37 123.07 L878.74 121.44 L879.11 119.81 L879.49 118.18 L879.86 116.56 L880.24 114.93 L880.62 113.30 L881.01 111.67 L881.39 110.04 L881.77 108.41 L882.16 106.79 L882.55 105.16 L882.94 103.53 L883.33 101.90 L883.72 100.27 L884.12 98.64 L884.51 97.02 L884.91 95.39 L885.31 93.76 L885.71 92.13 L886.11 90.50 L886.51 88.87 L886.91 87.25 L887.32 85.62 L887.72 83.99 L888.13 82.36 L888.54 80.73 L888.95 79.10 L889.36 77.48 L889.77 75.85 L890.18 74.22 L890.59 72.59 L891.01 70.96 L891.42 69.33 L891.84 67.71 L892.25 66.08 L892.67 64.45 L893.09 62.82 L893.51 61.19 L893.93 59.56 L894.34 57.94 L894.77 56.31 L895.19 54.68 L895.61 53.05 L896.03 51.42 L896.45 49.79 L896.88 48.17 L897.30 46.54 L897.72 44.91 L898.15 43.28 L898.57 41.65 L899.00 40.02 L899.42 38.40 L899.85 36.77 L900.27 35.14 L900.70 33.51 L901.12 31.88 L901.55 30.25 L901.97 28.63 L902.40 27.00"/><path d="M902.40 613.20 L901.55 611.57 L900.70 609.95 L899.84 608.32 L898.99 606.69 L898.14 605.06 L897.29 603.43 L896.44 601.80 L895.59 600.18 L894.74 598.55 L893.89 596.92 L893.04 595.29 L892.20 593.66 L891.35 592.03 L890.50 590.41 L889.66 588.78 L888.82 587.15 L887.97 585.52 L887.13 583.89 L886.29 582.26 L885.45 580.64 L884.61 579.01 L883.77 577.38 L882.94 575.75 L882.11 574.12 L881.27 572.49 L880.44 570.87 L879.61 569.24 L878.79 567.61 L877.96 565.98 L877.14 564.35 L876.31 562.72 L875.49 561.10 L874.68 559.47 L873.86 557.84 L873.05 556.21 L872.24 554.58 L871.43 552.95 L870.62 551.33 L869.82 549.70 L869.02 548.07 L868.22 546.44 L867.42 544.81 L866.63 543.18 L865.83 541.56 L865.05 539.93 L864.26 538.30 L863.48 536.67 L862.70 535.04 L861.92 533.41 L861.15 531.79 L860.38 530.16 L859.61 528.53 L858.85 526.90 L858.09 525.27 L857.33 523.64 L856.57 522.02 L855.82 520.39 L855.08 518.76 L854.33 517.13 L853.59 515.50 L852.86 513.87 L852.13 512.25 L851.40 510.62 L850.67 508.99 L849.95 507.36 L849.24 505.73 L848.52 504.10 L847.82 502.48 L847.11 500.85 L846.41 499.22 L845.72 497.59 L845.03 495.96 L844.34 494.33 L843.66 492.71 L842.98 491.08 L842.30 489.45 L841.64 487.82 L840.97 486.19 L840.31 484.56 L839.66 482.94 L839.01 481.31 L838.36 479.68 L837.72 478.05 L837.09 476.42 L836.45 474.79 L835.83 473.16 L835.21 471.54 L834.59 469.91 L833.98 468.28 L833.38 466.65 L832.78 465.02 L832.18 463.39 L831.60 461.77 L831.01 460.14 L830.43 458.51 L829.86 456.88 L829.29 455.25 L828.73 453.62 L828.18 452.00 L827.63 450.37 L827.08 448.74 L826.54 447.11 L826.01 445.48 L825.48 443.85 L824.96 442.23 L824.44 440.60 L823.93 438.97 L823.43 437.34 L822.93 435.71 L822.44 434.08 L821.96 432.46 L821.48 430.83 L821.00 429.20 L820.54 427.57 L820.08 425.94 L819.62 424.31 L819.17 422.69 L818.73 421.06 L818.30 419.43 L817.87 417.80 L817.44 416.17 L817.03 414.54 L816.62 412.92 L816.21 411.29 L815.82 409.66 L815.43 408.03 L815.04 406.40 L814.67 404.77 L814.30 403.15 L813.93 401.52 L813.58 399.89 L813.23 398.26 L812.88 396.63 L812.55 395.00 L812.22 393.38 L811.90 391.75 L811.58 390.12 L811.27 388.49 L810.97 386.86 L810.68 385.23 L810.39 383.61 L810.11 381.98 L809.83 380.35 L809.57 378.72 L809.31 377.09 L809.05 375.46 L808.81 373.84 L808.57 372.21 L808.34 370.58 L808.12 368.95 L807.90 367.32 L807.69 365.69 L807.49 364.07 L807.29 362.44 L807.10 360.81 L806.92 359.18 L806.75 357.55 L806.58 355.92 L806.42 354.30 L806.27 352.67 L806.13 351.04 L805.99 349.41 L805.86 347.78 L805.74 346.15 L805.62 344.53 L805.52 342.90 L805.42 341.27 L805.32 339.64 L805.24 338.01 L805.16 336.38 L805.09 334.76 L805.03 333.13 L804.97 331.50 L804.92 329.87 L804.88 328.24 L804.85 326.61 L804.82 324.99 L804.80 323.36 L804.79 321.73 L804.79 320.10 L804.79 318.47 L804.80 316.84 L804.82 315.21 L804.85 313.59 L804.88 311.96 L804.92 310.33 L804.97 308.70 L805.03 307.07 L805.09 305.44 L805.16 303.82 L805.24 302.19 L805.32 300.56 L805.42 298.93 L805.52 297.30 L805.62 295.67 L805.74 294.05 L805.86 292.42 L805.99 290.79 L806.13 289.16 L806.27 287.53 L806.42 285.90 L806.58 284.28 L806.75 282.65 L806.92 281.02 L807.10 279.39 L807.29 277.76 L807.49 276.13 L807.69 274.51 L807.90 272.88 L808.12 271.25 L808.34 269.62 L808.57 267.99 L808.81 266.36 L809.05 264.74 L809.31 263.11 L809.57 261.48 L809.83 259.85 L810.11 258.22 L810.39 256.59 L810.68 254.97 L810.97 253.34 L811.27 251.71 L811.58 250.08 L811.90 248.45 L812.22 246.82 L812.55 245.20 L812.88 243.57 L813.23 241.94 L813.58 240.31 L813.93 238.68 L814.30 237.05 L814.67 235.43 L815.04 233.80 L815.43 232.17 L815.82 230.54 L816.21 228.91 L816.62 227.28 L817.03 225.66 L817.44 224.03 L817.87 222.40 L818.30 220.77 L818.73 219.14 L819.17 217.51 L819.62 215.89 L820.08 214.26 L820.54 212.63 L821.00 211.00 L821.48 209.37 L821.96 207.74 L822.44 206.12 L822.93 204.49 L823.43 202.86 L823.93 201.23 L824.44 199.60 L824.96 197.97 L825.48 196.35 L826.01 194.72 L826.54 193.09 L827.08 191.46 L827.63 189.83 L828.18 188.20 L828.73 186.58 L829.29 184.95 L829.86 183.32 L830.43 181.69 L831.01 180.06 L831.60 178.43 L832.18 176.81 L832.78 175.18 L833.38 173.55 L833.98 171.92 L834.59 170.29 L835.21 168.66 L835.83 167.04 L836.45 165.41 L837.09 163.78 L837.72 162.15 L838.36 160.52 L839.01 158.89 L839.66 157.27 L840.31 155.64 L840.97 154.01 L841.64 152.38 L842.30 150.75 L842.98 149.12 L843.66 147.49 L844.34 145.87 L845.03 144.24 L845.72 142.61 L846.41 140.98 L847.11 139.35 L847.82 137.72 L848.52 136.10 L849.24 134.47 L849.95 132.84 L850.67 131.21 L851.40 129.58 L852.13 127.95 L852.86 126.33 L853.59 124.70 L854.33 123.07 L855.08 121.44 L855.82 119.81 L856.57 118.18 L857.33 116.56 L858.09 114.93 L858.85 113.30 L859.61 111.67 L860.38 110.04 L861.15 108.41 L861.92 106.79 L862.70 105.16 L863.48 103.53 L864.26 101.90 L865.05 100.27 L865.83 98.64 L866.63 97.02 L867.42 95.39 L868.22 93.76 L869.02 92.13 L869.82 90.50 L870.62 88.87 L871.43 87.25 L872.24 85.62 L873.05 83.99 L873.86 82.36 L874.68 80.73 L875.49 79.10 L876.31 77.48 L877.14 75.85 L877.96 74.22 L878.79 72.59 L879.61 70.96 L880.44 69.33 L881.27 67.71 L882.11 66.08 L882.94 64.45 L883.77 62.82 L884.61 61.19 L885.45 59.56 L886.29 57.94 L887.13 56.31 L887.97 54.68 L888.82 53.05 L889.66 51.42 L890.50 49.79 L891.35 48.17 L892.20 46.54 L893.04 44.91 L893.89 43.28 L894.74 41.65 L895.59 40.02 L896.44 38.40 L897.29 36.77 L898.14 35.14 L898.99 33.51 L899.84 31.88 L900.70 30.25 L901.55 28.63 L902.40 27.00"/><path d="M902.40 613.20 L901.12 611.57 L899.84 609.95 L898.57 608.32 L897.29 606.69 L896.01 605.06 L894.74 603.43 L893.46 601.80 L892.19 600.18 L890.91 598.55 L889.64 596.92 L888.37 595.29 L887.10 593.66 L885.83 592.03 L884.56 590.41 L883.29 588.78 L882.02 587.15 L880.76 585.52 L879.50 583.89 L878.23 582.26 L876.98 580.64 L875.72 579.01 L874.46 577.38 L873.21 575.75 L871.96 574.12 L870.71 572.49 L869.46 570.87 L868.22 569.24 L866.98 567.61 L865.74 565.98 L864.50 564.35 L863.27 562.72 L862.04 561.10 L860.82 559.47 L859.59 557.84 L858.37 556.21 L857.15 554.58 L855.94 552.95 L854.73 551.33 L853.53 549.70 L852.32 548.07 L851.12 546.44 L849.93 544.81 L848.74 543.18 L847.55 541.56 L846.37 539.93 L845.19 538.30 L844.02 536.67 L842.85 535.04 L841.68 533.41 L840.52 531.79 L839.37 530.16 L838.22 528.53 L837.07 526.90 L835.93 525.27 L834.79 523.64 L833.66 522.02 L832.54 520.39 L831.42 518.76 L830.30 517.13 L829.19 515.50 L828.09 513.87 L826.99 512.25 L825.90 510.62 L824.81 508.99 L823.73 507.36 L822.66 505.73 L821.59 504.10 L820.52 502.48 L819.47 500.85 L818.42 499.22 L817.38 497.59 L816.34 495.96 L815.31 494.33 L814.28 492.71 L813.27 491.08 L812.26 489.45 L811.25 487.82 L810.26 486.19 L809.27 484.56 L808.29 482.94 L807.31 481.31 L806.34 479.68 L805.38 478.05 L804.43 476.42 L803.48 474.79 L802.54 473.16 L801.61 471.54 L800.69 469.91 L799.78 468.28 L798.87 466.65 L797.97 465.02 L797.08 463.39 L796.19 461.77 L795.32 460.14 L794.45 458.51 L793.59 456.88 L792.74 455.25 L791.90 453.62 L791.06 452.00 L790.24 450.37 L789.42 448.74 L788.61 447.11 L787.81 445.48 L787.02 443.85 L786.24 442.23 L785.47 440.60 L784.70 438.97 L783.95 437.34 L783.20 435.71 L782.46 434.08 L781.73 432.46 L781.02 430.83 L780.31 429.20 L779.60 427.57 L778.91 425.94 L778.23 424.31 L777.56 422.69 L776.90 421.06 L776.24 419.43 L775.60 417.80 L774.97 416.17 L774.34 414.54 L773.73 412.92 L773.12 411.29 L772.53 409.66 L771.94 408.03 L771.37 406.40 L770.80 404.77 L770.25 403.15 L769.70 401.52 L769.17 399.89 L768.64 398.26 L768.13 396.63 L767.62 395.00 L767.13 393.38 L766.64 391.75 L766.17 390.12 L765.71 388.49 L765.26 386.86 L764.81 385.23 L764.38 383.61 L763.96 381.98 L763.55 380.35 L763.15 378.72 L762.76 377.09 L762.38 375.46 L762.01 373.84 L761.66 372.21 L761.31 370.58 L760.97 368.95 L760.65 367.32 L760.33 365.69 L760.03 364.07 L759.74 362.44 L759.45 360.81 L759.18 359.18 L758.92 357.55 L758.67 355.92 L758.44 354.30 L758.21 352.67 L757.99 351.04 L757.79 349.41 L757.59 347.78 L757.41 346.15 L757.24 344.53 L757.07 342.90 L756.92 341.27 L756.79 339.64 L756.66 338.01 L756.54 336.38 L756.43 334.76 L756.34 333.13 L756.26 331.50 L756.18 329.87 L756.12 328.24 L756.07 326.61 L756.03 324.99 L756.01 323.36 L755.99 321.73 L755.98 320.10 L755.99 318.47 L756.01 316.84 L756.03 315.21 L756.07 313.59 L756.12 311.96 L756.18 310.33 L756.26 308.70 L756.34 307.07 L756.43 305.44 L756.54 303.82 L756.66 302.19 L756.79 300.56 L756.92 298.93 L757.07 297.30 L757.24 295.67 L757.41 294.05 L757.59 292.42 L757.79 290.79 L757.99 289.16 L758.21 287.53 L758.44 285.90 L758.67 284.28 L758.92 282.65 L759.18 281.02 L759.45 279.39 L759.74 277.76 L760.03 276.13 L760.33 274.51 L760.65 272.88 L760.97 271.25 L761.31 269.62 L761.66 267.99 L762.01 266.36 L762.38 264.74 L762.76 263.11 L763.15 261.48 L763.55 259.85 L763.96 258.22 L764.38 256.59 L764.81 254.97 L765.26 253.34 L765.71 251.71 L766.17 250.08 L766.64 248.45 L767.13 246.82 L767.62 245.20 L768.13 243.57 L768.64 241.94 L769.17 240.31 L769.70 238.68 L770.25 237.05 L770.80 235.43 L771.37 233.80 L771.94 232.17 L772.53 230.54 L773.12 228.91 L773.73 227.28 L774.34 225.66 L774.97 224.03 L775.60 222.40 L776.24 220.77 L776.90 219.14 L777.56 217.51 L778.23 215.89 L778.91 214.26 L779.60 212.63 L780.31 211.00 L781.02 209.37 L781.73 207.74 L782.46 206.12 L783.20 204.49 L783.95 202.86 L784.70 201.23 L785.47 199.60 L786.24 197.97 L787.02 196.35 L787.81 194.72 L788.61 193.09 L789.42 191.46 L790.24 189.83 L791.06 188.20 L791.90 186.58 L792.74 184.95 L793.59 183.32 L794.45 181.69 L795.32 180.06 L796.19 178.43 L797.08 176.81 L797.97 175.18 L798.87 173.55 L799.78 171.92 L800.69 170.29 L801.61 168.66 L802.54 167.04 L803.48 165.41 L804.43 163.78 L805.38 162.15 L806.34 160.52 L807.31 158.89 L808.29 157.27 L809.27 155.64 L810.26 154.01 L811.25 152.38 L812.26 150.75 L813.27 149.12 L814.28 147.49 L815.31 145.87 L816.34 144.24 L817.38 142.61 L818.42 140.98 L819.47 139.35 L820.52 137.72 L821.59 136.10 L822.66 134.47 L823.73 132.84 L824.81 131.21 L825.90 129.58 L826.99 127.95 L828.09 126.33 L829.19 124.70 L830.30 123.07 L831.42 121.44 L832.54 119.81 L833.66 118.18 L834.79 116.56 L835.93 114.93 L837.07 113.30 L838.22 111.67 L839.37 110.04 L840.52 108.41 L841.68 106.79 L842.85 105.16 L844.02 103.53 L845.19 101.90 L846.37 100.27 L847.55 98.64 L848.74 97.02 L849.93 95.39 L851.12 93.76 L852.32 92.13 L853.53 90.50 L854.73 88.87 L855.94 87.25 L857.15 85.62 L858.37 83.99 L859.59 82.36 L860.82 80.73 L862.04 79.10 L863.27 77.48 L864.50 75.85 L865.74 74.22 L866.98 72.59 L868.22 70.96 L869.46 69.33 L870.71 67.71 L871.96 66.08 L873.21 64.45 L874.46 62.82 L875.72 61.19 L876.98 59.56 L878.23 57.94 L879.50 56.31 L880.76 54.68 L882.02 53.05 L883.29 51.42 L884.56 49.79 L885.83 48.17 L887.10 46.54 L888.37 44.91 L889.64 43.28 L890.91 41.65 L892.19 40.02 L893.46 38.40 L894.74 36.77 L896.01 35.14 L897.29 33.51 L898.57 31.88 L899.84 30.25 L901.12 28.63 L902.40 27.00"/><path d="M902.40 613.20 L900.70 611.57 L898.99 609.95 L897.29 608.32 L895.59 606.69 L893.88 605.06 L892.18 603.43 L890.48 601.80 L888.78 600.18 L887.08 598.55 L885.39 596.92 L883.69 595.29 L881.99 593.66 L880.30 592.03 L878.61 590.41 L876.92 588.78 L875.23 587.15 L873.54 585.52 L871.86 583.89 L870.18 582.26 L868.50 580.64 L866.82 579.01 L865.15 577.38 L863.48 575.75 L861.81 574.12 L860.15 572.49 L858.48 570.87 L856.83 569.24 L855.17 567.61 L853.52 565.98 L851.87 564.35 L850.23 562.72 L848.59 561.10 L846.95 559.47 L845.32 557.84 L843.70 556.21 L842.07 554.58 L840.46 552.95 L838.84 551.33 L837.23 549.70 L835.63 548.07 L834.03 546.44 L832.44 544.81 L830.85 543.18 L829.27 541.56 L827.69 539.93 L826.12 538.30 L824.56 536.67 L823.00 535.04 L821.44 533.41 L819.90 531.79 L818.35 530.16 L816.82 528.53 L815.29 526.90 L813.77 525.27 L812.26 523.64 L810.75 522.02 L809.25 520.39 L807.75 518.76 L806.27 517.13 L804.79 515.50 L803.32 513.87 L801.85 512.25 L800.40 510.62 L798.95 508.99 L797.51 507.36 L796.07 505.73 L794.65 504.10 L793.23 502.48 L791.83 500.85 L790.43 499.22 L789.03 497.59 L787.65 495.96 L786.28 494.33 L784.91 492.71 L783.56 491.08 L782.21 489.45 L780.87 487.82 L779.54 486.19 L778.22 484.56 L776.91 482.94 L775.61 481.31 L774.32 479.68 L773.04 478.05 L771.77 476.42 L770.51 474.79 L769.26 473.16 L768.02 471.54 L766.79 469.91 L765.57 468.28 L764.36 466.65 L763.16 465.02 L761.97 463.39 L760.79 461.77 L759.62 460.14 L758.47 458.51 L757.32 456.88 L756.19 455.25 L755.06 453.62 L753.95 452.00 L752.85 450.37 L751.76 448.74 L750.68 447.11 L749.62 445.48 L748.56 443.85 L747.52 442.23 L746.49 440.60 L745.47 438.97 L744.46 437.34 L743.47 435.71 L742.48 434.08 L741.51 432.46 L740.55 430.83 L739.61 429.20 L738.67 427.57 L737.75 425.94 L736.84 424.31 L735.95 422.69 L735.06 421.06 L734.19 419.43 L733.33 417.80 L732.49 416.17 L731.65 414.54 L730.84 412.92 L730.03 411.29 L729.24 409.66 L728.46 408.03 L727.69 406.40 L726.94 404.77 L726.20 403.15 L725.47 401.52 L724.76 399.89 L724.06 398.26 L723.37 396.63 L722.70 395.00 L722.04 393.38 L721.39 391.75 L720.76 390.12 L720.14 388.49 L719.54 386.86 L718.95 385.23 L718.38 383.61 L717.81 381.98 L717.27 380.35 L716.73 378.72 L716.21 377.09 L715.71 375.46 L715.22 373.84 L714.74 372.21 L714.28 370.58 L713.83 368.95 L713.40 367.32 L712.98 365.69 L712.57 364.07 L712.18 362.44 L711.81 360.81 L711.44 359.18 L711.10 357.55 L710.76 355.92 L710.45 354.30 L710.14 352.67 L709.86 351.04 L709.58 349.41 L709.32 347.78 L709.08 346.15 L708.85 344.53 L708.63 342.90 L708.43 341.27 L708.25 339.64 L708.08 338.01 L707.92 336.38 L707.78 334.76 L707.65 333.13 L707.54 331.50 L707.45 329.87 L707.36 328.24 L707.30 326.61 L707.24 324.99 L707.21 323.36 L707.19 321.73 L707.18 320.10 L707.19 318.47 L707.21 316.84 L707.24 315.21 L707.30 313.59 L707.36 311.96 L707.45 310.33 L707.54 308.70 L707.65 307.07 L707.78 305.44 L707.92 303.82 L708.08 302.19 L708.25 300.56 L708.43 298.93 L708.63 297.30 L708.85 295.67 L709.08 294.05 L709.32 292.42 L709.58 290.79 L709.86 289.16 L710.14 287.53 L710.45 285.90 L710.76 284.28 L711.10 282.65 L711.44 281.02 L711.81 279.39 L712.18 277.76 L712.57 276.13 L712.98 274.51 L713.40 272.88 L713.83 271.25 L714.28 269.62 L714.74 267.99 L715.22 266.36 L715.71 264.74 L716.21 263.11 L716.73 261.48 L717.27 259.85 L717.81 258.22 L718.38 256.59 L718.95 254.97 L719.54 253.34 L720.14 251.71 L720.76 250.08 L721.39 248.45 L722.04 246.82 L722.70 245.20 L723.37 243.57 L724.06 241.94 L724.76 240.31 L725.47 238.68 L726.20 237.05 L726.94 235.43 L727.69 233.80 L728.46 232.17 L729.24 230.54 L730.03 228.91 L730.84 227.28 L731.65 225.66 L732.49 224.03 L733.33 222.40 L734.19 220.77 L735.06 219.14 L735.95 217.51 L736.84 215.89 L737.75 214.26 L738.67 212.63 L739.61 211.00 L740.55 209.37 L741.51 207.74 L742.48 206.12 L743.47 204.49 L744.46 202.86 L745.47 201.23 L746.49 199.60 L747.52 197.97 L748.56 196.35 L749.62 194.72 L750.68 193.09 L751.76 191.46 L752.85 189.83 L753.95 188.20 L755.06 186.58 L756.19 184.95 L757.32 183.32 L758.47 181.69 L759.62 180.06 L760.79 178.43 L761.97 176.81 L763.16 175.18 L764.36 173.55 L765.57 171.92 L766.79 170.29 L768.02 168.66 L769.26 167.04 L770.51 165.41 L771.77 163.78 L773.04 162.15 L774.32 160.52 L775.61 158.89 L776.91 157.27 L778.22 155.64 L779.54 154.01 L780.87 152.38 L782.21 150.75 L783.56 149.12 L784.91 147.49 L786.28 145.87 L787.65 144.24 L789.03 142.61 L790.43 140.98 L791.83 139.35 L793.23 137.72 L794.65 136.10 L796.07 134.47 L797.51 132.84 L798.95 131.21 L800.40 129.58 L801.85 127.95 L803.32 126.33 L804.79 124.70 L806.27 123.07 L807.75 121.44 L809.25 119.81 L810.75 118.18 L812.26 116.56 L813.77 114.93 L815.29 113.30 L816.82 111.67 L818.35 110.04 L819.90 108.41 L821.44 106.79 L823.00 105.16 L824.56 103.53 L826.12 101.90 L827.69 100.27 L829.27 98.64 L830.85 97.02 L832.44 95.39 L834.03 93.76 L835.63 92.13 L837.23 90.50 L838.84 88.87 L840.46 87.25 L842.07 85.62 L843.70 83.99 L845.32 82.36 L846.95 80.73 L848.59 79.10 L850.23 77.48 L851.87 75.85 L853.52 74.22 L855.17 72.59 L856.83 70.96 L858.48 69.33 L860.15 67.71 L861.81 66.08 L863.48 64.45 L865.15 62.82 L866.82 61.19 L868.50 59.56 L870.18 57.94 L871.86 56.31 L873.54 54.68 L875.23 53.05 L876.92 51.42 L878.61 49.79 L880.30 48.17 L881.99 46.54 L883.69 44.91 L885.39 43.28 L887.08 41.65 L888.78 40.02 L890.48 38.40 L892.18 36.77 L893.88 35.14 L895.59 33.51 L897.29 31.88 L898.99 30.25 L900.70 28.63 L902.40 27.00"/><path d="M902.40 613.20 L900.27 611.57 L898.14 609.95 L896.01 608.32 L893.88 606.69 L891.76 605.06 L889.63 603.43 L887.50 601.80 L885.38 600.18 L883.25 598.55 L881.13 596.92 L879.01 595.29 L876.89 593.66 L874.78 592.03 L872.66 590.41 L870.55 588.78 L868.44 587.15 L866.33 585.52 L864.23 583.89 L862.12 582.26 L860.03 580.64 L857.93 579.01 L855.84 577.38 L853.75 575.75 L851.66 574.12 L849.58 572.49 L847.51 570.87 L845.43 569.24 L843.36 567.61 L841.30 565.98 L839.24 564.35 L837.19 562.72 L835.14 561.10 L833.09 559.47 L831.05 557.84 L829.02 556.21 L826.99 554.58 L824.97 552.95 L822.95 551.33 L820.94 549.70 L818.94 548.07 L816.94 546.44 L814.95 544.81 L812.96 543.18 L810.99 541.56 L809.01 539.93 L807.05 538.30 L805.09 536.67 L803.15 535.04 L801.20 533.41 L799.27 531.79 L797.34 530.16 L795.43 528.53 L793.52 526.90 L791.61 525.27 L789.72 523.64 L787.84 522.02 L785.96 520.39 L784.09 518.76 L782.24 517.13 L780.39 515.50 L778.55 513.87 L776.72 512.25 L774.90 510.62 L773.09 508.99 L771.28 507.36 L769.49 505.73 L767.71 504.10 L765.94 502.48 L764.18 500.85 L762.43 499.22 L760.69 497.59 L758.96 495.96 L757.25 494.33 L755.54 492.71 L753.85 491.08 L752.16 489.45 L750.49 487.82 L748.83 486.19 L747.18 484.56 L745.54 482.94 L743.92 481.31 L742.30 479.68 L740.70 478.05 L739.11 476.42 L737.54 474.79 L735.97 473.16 L734.42 471.54 L732.88 469.91 L731.36 468.28 L729.85 466.65 L728.35 465.02 L726.86 463.39 L725.39 461.77 L723.93 460.14 L722.48 458.51 L721.05 456.88 L719.63 455.25 L718.23 453.62 L716.84 452.00 L715.46 450.37 L714.10 448.74 L712.76 447.11 L711.42 445.48 L710.10 443.85 L708.80 442.23 L707.51 440.60 L706.24 438.97 L704.98 437.34 L703.73 435.71 L702.50 434.08 L701.29 432.46 L700.09 430.83 L698.91 429.20 L697.74 427.57 L696.59 425.94 L695.45 424.31 L694.33 422.69 L693.23 421.06 L692.14 419.43 L691.07 417.80 L690.01 416.17 L688.97 414.54 L687.94 412.92 L686.94 411.29 L685.94 409.66 L684.97 408.03 L684.01 406.40 L683.07 404.77 L682.14 403.15 L681.24 401.52 L680.34 399.89 L679.47 398.26 L678.61 396.63 L677.77 395.00 L676.95 393.38 L676.14 391.75 L675.35 390.12 L674.58 388.49 L673.83 386.86 L673.09 385.23 L672.37 383.61 L671.67 381.98 L670.98 380.35 L670.32 378.72 L669.67 377.09 L669.04 375.46 L668.42 373.84 L667.83 372.21 L667.25 370.58 L666.69 368.95 L666.15 367.32 L665.62 365.69 L665.11 364.07 L664.63 362.44 L664.16 360.81 L663.71 359.18 L663.27 357.55 L662.86 355.92 L662.46 354.30 L662.08 352.67 L661.72 351.04 L661.38 349.41 L661.05 347.78 L660.75 346.15 L660.46 344.53 L660.19 342.90 L659.94 341.27 L659.71 339.64 L659.50 338.01 L659.30 336.38 L659.12 334.76 L658.97 333.13 L658.83 331.50 L658.71 329.87 L658.60 328.24 L658.52 326.61 L658.46 324.99 L658.41 323.36 L658.38 321.73 L658.37 320.10 L658.38 318.47 L658.41 316.84 L658.46 315.21 L658.52 313.59 L658.60 311.96 L658.71 310.33 L658.83 308.70 L658.97 307.07 L659.12 305.44 L659.30 303.82 L659.50 302.19 L659.71 300.56 L659.94 298.93 L660.19 297.30 L660.46 295.67 L660.75 294.05 L661.05 292.42 L661.38 290.79 L661.72 289.16 L662.08 287.53 L662.46 285.90 L662.86 284.28 L663.27 282.65 L663.71 281.02 L664.16 279.39 L664.63 277.76 L665.11 276.13 L665.62 274.51 L666.15 272.88 L666.69 271.25 L667.25 269.62 L667.83 267.99 L668.42 266.36 L669.04 264.74 L669.67 263.11 L670.32 261.48 L670.98 259.85 L671.67 258.22 L672.37 256.59 L673.09 254.97 L673.83 253.34 L674.58 251.71 L675.35 250.08 L676.14 248.45 L676.95 246.82 L677.77 245.20 L678.61 243.57 L679.47 241.94 L680.34 240.31 L681.24 238.68 L682.14 237.05 L683.07 235.43 L684.01 233.80 L684.97 232.17 L685.94 230.54 L686.94 228.91 L687.94 227.28 L688.97 225.66 L690.01 224.03 L691.07 222.40 L692.14 220.77 L693.23 219.14 L694.33 217.51 L695.45 215.89 L696.59 214.26 L697.74 212.63 L698.91 211.00 L700.09 209.37 L701.29 207.74 L702.50 206.12 L703.73 204.49 L704.98 202.86 L706.24 201.23 L707.51 199.60 L708.80 197.97 L710.10 196.35 L711.42 194.72 L712.76 193.09 L714.10 191.46 L715.46 189.83 L716.84 188.20 L718.23 186.58 L719.63 184.95 L721.05 183.32 L722.48 181.69 L723.93 180.06 L725.39 178.43 L726.86 176.81 L728.35 175.18 L729.85 173.55 L731.36 171.92 L732.88 170.29 L734.42 168.66 L735.97 167.04 L737.54 165.41 L739.11 163.78 L740.70 162.15 L742.30 160.52 L743.92 158.89 L745.54 157.27 L747.18 155.64 L748.83 154.01 L750.49 152.38 L752.16 150.75 L753.85 149.12 L755.54 147.49 L757.25 145.87 L758.96 144.24 L760.69 142.61 L762.43 140.98 L764.18 139.35 L765.94 137.72 L767.71 136.10 L769.49 134.47 L771.28 132.84 L773.09 131.21 L774.90 129.58 L776.72 127.95 L778.55 126.33 L780.39 124.70 L782.24 123.07 L784.09 121.44 L785.96 119.81 L787.84 118.18 L789.72 116.56 L791.61 114.93 L793.52 113.30 L795.43 111.67 L797.34 110.04 L799.27 108.41 L801.20 106.79 L803.15 105.16 L805.09 103.53 L807.05 101.90 L809.01 100.27 L810.99 98.64 L812.96 97.02 L814.95 95.39 L816.94 93.76 L818.94 92.13 L820.94 90.50 L822.95 88.87 L824.97 87.25 L826.99 85.62 L829.02 83.99 L831.05 82.36 L833.09 80.73 L835.14 79.10 L837.19 77.48 L839.24 75.85 L841.30 74.22 L843.36 72.59 L845.43 70.96 L847.51 69.33 L849.58 67.71 L851.66 66.08 L853.75 64.45 L855.84 62.82 L857.93 61.19 L860.03 59.56 L862.12 57.94 L864.23 56.31 L866.33 54.68 L868.44 53.05 L870.55 51.42 L872.66 49.79 L874.78 48.17 L876.89 46.54 L879.01 44.91 L881.13 43.28 L883.25 41.65 L885.38 40.02 L887.50 38.40 L889.63 36.77 L891.76 35.14 L893.88 33.51 L896.01 31.88 L898.14 30.25 L900.27 28.63 L902.40 27.00"/><path d="M902.40 613.20 L899.84 611.57 L897.29 609.95 L894.73 608.32 L892.18 606.69 L889.63 605.06 L887.07 603.43 L884.52 601.80 L881.97 600.18 L879.42 598.55 L876.88 596.92 L874.33 595.29 L871.79 593.66 L869.25 592.03 L866.71 590.41 L864.18 588.78 L861.65 587.15 L859.12 585.52 L856.59 583.89 L854.07 582.26 L851.55 580.64 L849.04 579.01 L846.52 577.38 L844.02 575.75 L841.52 574.12 L839.02 572.49 L836.53 570.87 L834.04 569.24 L831.56 567.61 L829.08 565.98 L826.61 564.35 L824.14 562.72 L821.68 561.10 L819.23 559.47 L816.78 557.84 L814.34 556.21 L811.91 554.58 L809.48 552.95 L807.06 551.33 L804.65 549.70 L802.25 548.07 L799.85 546.44 L797.46 544.81 L795.08 543.18 L792.70 541.56 L790.34 539.93 L787.98 538.30 L785.63 536.67 L783.29 535.04 L780.96 533.41 L778.64 531.79 L776.33 530.16 L774.03 528.53 L771.74 526.90 L769.46 525.27 L767.18 523.64 L764.92 522.02 L762.67 520.39 L760.43 518.76 L758.20 517.13 L755.98 515.50 L753.78 513.87 L751.58 512.25 L749.40 510.62 L747.22 508.99 L745.06 507.36 L742.91 505.73 L740.77 504.10 L738.65 502.48 L736.54 500.85 L734.44 499.22 L732.35 497.59 L730.28 495.96 L728.22 494.33 L726.17 492.71 L724.13 491.08 L722.11 489.45 L720.11 487.82 L718.11 486.19 L716.14 484.56 L714.17 482.94 L712.22 481.31 L710.28 479.68 L708.36 478.05 L706.46 476.42 L704.56 474.79 L702.69 473.16 L700.83 471.54 L698.98 469.91 L697.15 468.28 L695.34 466.65 L693.54 465.02 L691.75 463.39 L689.99 461.77 L688.24 460.14 L686.50 458.51 L684.78 456.88 L683.08 455.25 L681.40 453.62 L679.73 452.00 L678.08 450.37 L676.44 448.74 L674.83 447.11 L673.23 445.48 L671.64 443.85 L670.08 442.23 L668.53 440.60 L667.00 438.97 L665.49 437.34 L664.00 435.71 L662.53 434.08 L661.07 432.46 L659.63 430.83 L658.21 429.20 L656.81 427.57 L655.43 425.94 L654.06 424.31 L652.72 422.69 L651.39 421.06 L650.09 419.43 L648.80 417.80 L647.53 416.17 L646.28 414.54 L645.05 412.92 L643.84 411.29 L642.65 409.66 L641.48 408.03 L640.33 406.40 L639.20 404.77 L638.09 403.15 L637.00 401.52 L635.93 399.89 L634.88 398.26 L633.85 396.63 L632.85 395.00 L631.86 393.38 L630.89 391.75 L629.94 390.12 L629.02 388.49 L628.11 386.86 L627.23 385.23 L626.36 383.61 L625.52 381.98 L624.70 380.35 L623.90 378.72 L623.12 377.09 L622.36 375.46 L621.63 373.84 L620.91 372.21 L620.22 370.58 L619.55 368.95 L618.89 367.32 L618.27 365.69 L617.66 364.07 L617.07 362.44 L616.51 360.81 L615.97 359.18 L615.45 357.55 L614.95 355.92 L614.47 354.30 L614.02 352.67 L613.58 351.04 L613.17 349.41 L612.78 347.78 L612.42 346.15 L612.07 344.53 L611.75 342.90 L611.45 341.27 L611.17 339.64 L610.92 338.01 L610.68 336.38 L610.47 334.76 L610.28 333.13 L610.11 331.50 L609.97 329.87 L609.85 328.24 L609.75 326.61 L609.67 324.99 L609.61 323.36 L609.58 321.73 L609.57 320.10 L609.58 318.47 L609.61 316.84 L609.67 315.21 L609.75 313.59 L609.85 311.96 L609.97 310.33 L610.11 308.70 L610.28 307.07 L610.47 305.44 L610.68 303.82 L610.92 302.19 L611.17 300.56 L611.45 298.93 L611.75 297.30 L612.07 295.67 L612.42 294.05 L612.78 292.42 L613.17 290.79 L613.58 289.16 L614.02 287.53 L614.47 285.90 L614.95 284.28 L615.45 282.65 L615.97 281.02 L616.51 279.39 L617.07 277.76 L617.66 276.13 L618.27 274.51 L618.89 272.88 L619.55 271.25 L620.22 269.62 L620.91 267.99 L621.63 266.36 L622.36 264.74 L623.12 263.11 L623.90 261.48 L624.70 259.85 L625.52 258.22 L626.36 256.59 L627.23 254.97 L628.11 253.34 L629.02 251.71 L629.94 250.08 L630.89 248.45 L631.86 246.82 L632.85 245.20 L633.85 243.57 L634.88 241.94 L635.93 240.31 L637.00 238.68 L638.09 237.05 L639.20 235.43 L640.33 233.80 L641.48 232.17 L642.65 230.54 L643.84 228.91 L645.05 227.28 L646.28 225.66 L647.53 224.03 L648.80 222.40 L650.09 220.77 L651.39 219.14 L652.72 217.51 L654.06 215.89 L655.43 214.26 L656.81 212.63 L658.21 211.00 L659.63 209.37 L661.07 207.74 L662.53 206.12 L664.00 204.49 L665.49 202.86 L667.00 201.23 L668.53 199.60 L670.08 197.97 L671.64 196.35 L673.23 194.72 L674.83 193.09 L676.44 191.46 L678.08 189.83 L679.73 188.20 L681.40 186.58 L683.08 184.95 L684.78 183.32 L686.50 181.69 L688.24 180.06 L689.99 178.43 L691.75 176.81 L693.54 175.18 L695.34 173.55 L697.15 171.92 L698.98 170.29 L700.83 168.66 L702.69 167.04 L704.56 165.41 L706.46 163.78 L708.36 162.15 L710.28 160.52 L712.22 158.89 L714.17 157.27 L716.14 155.64 L718.11 154.01 L720.11 152.38 L722.11 150.75 L724.13 149.12 L726.17 147.49 L728.22 145.87 L730.28 144.24 L732.35 142.61 L734.44 140.98 L736.54 139.35 L738.65 137.72 L740.77 136.10 L742.91 134.47 L745.06 132.84 L747.22 131.21 L749.40 129.58 L751.58 127.95 L753.78 126.33 L755.98 124.70 L758.20 123.07 L760.43 121.44 L762.67 119.81 L764.92 118.18 L767.18 116.56 L769.46 114.93 L771.74 113.30 L774.03 111.67 L776.33 110.04 L778.64 108.41 L780.96 106.79 L783.29 105.16 L785.63 103.53 L787.98 101.90 L790.34 100.27 L792.70 98.64 L795.08 97.02 L797.46 95.39 L799.85 93.76 L802.25 92.13 L804.65 90.50 L807.06 88.87 L809.48 87.25 L811.91 85.62 L814.34 83.99 L816.78 82.36 L819.23 80.73 L821.68 79.10 L824.14 77.48 L826.61 75.85 L829.08 74.22 L831.56 72.59 L834.04 70.96 L836.53 69.33 L839.02 67.71 L841.52 66.08 L844.02 64.45 L846.52 62.82 L849.04 61.19 L851.55 59.56 L854.07 57.94 L856.59 56.31 L859.12 54.68 L861.65 53.05 L864.18 51.42 L866.71 49.79 L869.25 48.17 L871.79 46.54 L874.33 44.91 L876.88 43.28 L879.42 41.65 L881.97 40.02 L884.52 38.40 L887.07 36.77 L889.63 35.14 L892.18 33.51 L894.73 31.88 L897.29 30.25 L899.84 28.63 L902.40 27.00"/><path d="M902.40 613.20 L899.42 611.57 L896.44 609.95 L893.46 608.32 L890.48 606.69 L887.50 605.06 L884.52 603.43 L881.54 601.80 L878.57 600.18 L875.60 598.55 L872.62 596.92 L869.66 595.29 L866.69 593.66 L863.73 592.03 L860.76 590.41 L857.81 588.78 L854.85 587.15 L851.90 585.52 L848.96 583.89 L846.01 582.26 L843.08 580.64 L840.14 579.01 L837.21 577.38 L834.29 575.75 L831.37 574.12 L828.46 572.49 L825.55 570.87 L822.65 569.24 L819.75 567.61 L816.86 565.98 L813.98 564.35 L811.10 562.72 L808.23 561.10 L805.37 559.47 L802.51 557.84 L799.67 556.21 L796.83 554.58 L794.00 552.95 L791.17 551.33 L788.36 549.70 L785.55 548.07 L782.76 546.44 L779.97 544.81 L777.19 543.18 L774.42 541.56 L771.66 539.93 L768.91 538.30 L766.17 536.67 L763.44 535.04 L760.72 533.41 L758.02 531.79 L755.32 530.16 L752.64 528.53 L749.96 526.90 L747.30 525.27 L744.65 523.64 L742.01 522.02 L739.38 520.39 L736.77 518.76 L734.17 517.13 L731.58 515.50 L729.01 513.87 L726.44 512.25 L723.89 510.62 L721.36 508.99 L718.84 507.36 L716.33 505.73 L713.84 504.10 L711.36 502.48 L708.89 500.85 L706.44 499.22 L704.01 497.59 L701.59 495.96 L699.19 494.33 L696.80 492.71 L694.42 491.08 L692.07 489.45 L689.73 487.82 L687.40 486.19 L685.09 484.56 L682.80 482.94 L680.52 481.31 L678.26 479.68 L676.02 478.05 L673.80 476.42 L671.59 474.79 L669.40 473.16 L667.23 471.54 L665.08 469.91 L662.94 468.28 L660.83 466.65 L658.73 465.02 L656.65 463.39 L654.58 461.77 L652.54 460.14 L650.52 458.51 L648.51 456.88 L646.53 455.25 L644.56 453.62 L642.62 452.00 L640.69 450.37 L638.78 448.74 L636.90 447.11 L635.03 445.48 L633.19 443.85 L631.36 442.23 L629.56 440.60 L627.77 438.97 L626.01 437.34 L624.27 435.71 L622.55 434.08 L620.85 432.46 L619.17 430.83 L617.51 429.20 L615.88 427.57 L614.27 425.94 L612.67 424.31 L611.11 422.69 L609.56 421.06 L608.03 419.43 L606.53 417.80 L605.05 416.17 L603.60 414.54 L602.16 412.92 L600.75 411.29 L599.36 409.66 L598.00 408.03 L596.66 406.40 L595.34 404.77 L594.04 403.15 L592.77 401.52 L591.52 399.89 L590.30 398.26 L589.10 396.63 L587.92 395.00 L586.77 393.38 L585.64 391.75 L584.53 390.12 L583.45 388.49 L582.40 386.86 L581.36 385.23 L580.36 383.61 L579.37 381.98 L578.42 380.35 L577.48 378.72 L576.57 377.09 L575.69 375.46 L574.83 373.84 L574.00 372.21 L573.19 370.58 L572.40 368.95 L571.64 367.32 L570.91 365.69 L570.20 364.07 L569.52 362.44 L568.86 360.81 L568.23 359.18 L567.62 357.55 L567.04 355.92 L566.48 354.30 L565.95 352.67 L565.45 351.04 L564.97 349.41 L564.51 347.78 L564.09 346.15 L563.68 344.53 L563.31 342.90 L562.96 341.27 L562.63 339.64 L562.33 338.01 L562.06 336.38 L561.81 334.76 L561.59 333.13 L561.40 331.50 L561.23 329.87 L561.09 328.24 L560.97 326.61 L560.88 324.99 L560.81 323.36 L560.77 321.73 L560.76 320.10 L560.77 318.47 L560.81 316.84 L560.88 315.21 L560.97 313.59 L561.09 311.96 L561.23 310.33 L561.40 308.70 L561.59 307.07 L561.81 305.44 L562.06 303.82 L562.33 302.19 L562.63 300.56 L562.96 298.93 L563.31 297.30 L563.68 295.67 L564.09 294.05 L564.51 292.42 L564.97 290.79 L565.45 289.16 L565.95 287.53 L566.48 285.90 L567.04 284.28 L567.62 282.65 L568.23 281.02 L568.86 279.39 L569.52 277.76 L570.20 276.13 L570.91 274.51 L571.64 272.88 L572.40 271.25 L573.19 269.62 L574.00 267.99 L574.83 266.36 L575.69 264.74 L576.57 263.11 L577.48 261.48 L578.42 259.85 L579.37 258.22 L580.36 256.59 L581.36 254.97 L582.40 253.34 L583.45 251.71 L584.53 250.08 L585.64 248.45 L586.77 246.82 L587.92 245.20 L589.10 243.57 L590.30 241.94 L591.52 240.31 L592.77 238.68 L594.04 237.05 L595.34 235.43 L596.66 233.80 L598.00 232.17 L599.36 230.54 L600.75 228.91 L602.16 227.28 L603.60 225.66 L605.05 224.03 L606.53 222.40 L608.03 220.77 L609.56 219.14 L611.11 217.51 L612.67 215.89 L614.27 214.26 L615.88 212.63 L617.51 211.00 L619.17 209.37 L620.85 207.74 L622.55 206.12 L624.27 204.49 L626.01 202.86 L627.77 201.23 L629.56 199.60 L631.36 197.97 L633.19 196.35 L635.03 194.72 L636.90 193.09 L638.78 191.46 L640.69 189.83 L642.62 188.20 L644.56 186.58 L646.53 184.95 L648.51 183.32 L650.52 181.69 L652.54 180.06 L654.58 178.43 L656.65 176.81 L658.73 175.18 L660.83 173.55 L662.94 171.92 L665.08 170.29 L667.23 168.66 L669.40 167.04 L671.59 165.41 L673.80 163.78 L676.02 162.15 L678.26 160.52 L680.52 158.89 L682.80 157.27 L685.09 155.64 L687.40 154.01 L689.73 152.38 L692.07 150.75 L694.42 149.12 L696.80 147.49 L699.19 145.87 L701.59 144.24 L704.01 142.61 L706.44 140.98 L708.89 139.35 L711.36 137.72 L713.84 136.10 L716.33 134.47 L718.84 132.84 L721.36 131.21 L723.89 129.58 L726.44 127.95 L729.01 126.33 L731.58 124.70 L734.17 123.07 L736.77 121.44 L739.38 119.81 L742.01 118.18 L744.65 116.56 L747.30 114.93 L749.96 113.30 L752.64 111.67 L755.32 110.04 L758.02 108.41 L760.72 106.79 L763.44 105.16 L766.17 103.53 L768.91 101.90 L771.66 100.27 L774.42 98.64 L777.19 97.02 L779.97 95.39 L782.76 93.76 L785.55 92.13 L788.36 90.50 L791.17 88.87 L794.00 87.25 L796.83 85.62 L799.67 83.99 L802.51 82.36 L805.37 80.73 L808.23 79.10 L811.10 77.48 L813.98 75.85 L816.86 74.22 L819.75 72.59 L822.65 70.96 L825.55 69.33 L828.46 67.71 L831.37 66.08 L834.29 64.45 L837.21 62.82 L840.14 61.19 L843.08 59.56 L846.01 57.94 L848.96 56.31 L851.90 54.68 L854.85 53.05 L857.81 51.42 L860.76 49.79 L863.73 48.17 L866.69 46.54 L869.66 44.91 L872.62 43.28 L875.60 41.65 L878.57 40.02 L881.54 38.40 L884.52 36.77 L887.50 35.14 L890.48 33.51 L893.46 31.88 L896.44 30.25 L899.42 28.63 L902.40 27.00"/><path d="M902.40 613.20 L898.99 611.57 L895.59 609.95 L892.18 608.32 L888.77 606.69 L885.37 605.06 L881.97 603.43 L878.56 601.80 L875.16 600.18 L871.77 598.55 L868.37 596.92 L864.98 595.29 L861.59 593.66 L858.20 592.03 L854.82 590.41 L851.44 588.78 L848.06 587.15 L844.69 585.52 L841.32 583.89 L837.96 582.26 L834.60 580.64 L831.25 579.01 L827.90 577.38 L824.56 575.75 L821.22 574.12 L817.89 572.49 L814.57 570.87 L811.25 569.24 L807.94 567.61 L804.64 565.98 L801.35 564.35 L798.06 562.72 L794.78 561.10 L791.51 559.47 L788.25 557.84 L784.99 556.21 L781.75 554.58 L778.51 552.95 L775.28 551.33 L772.07 549.70 L768.86 548.07 L765.66 546.44 L762.48 544.81 L759.30 543.18 L756.14 541.56 L752.98 539.93 L749.84 538.30 L746.71 536.67 L743.59 535.04 L740.49 533.41 L737.39 531.79 L734.31 530.16 L731.24 528.53 L728.18 526.90 L725.14 525.27 L722.11 523.64 L719.10 522.02 L716.10 520.39 L713.11 518.76 L710.14 517.13 L707.18 515.50 L704.23 513.87 L701.31 512.25 L698.39 510.62 L695.50 508.99 L692.61 507.36 L689.75 505.73 L686.90 504.10 L684.07 502.48 L681.25 500.85 L678.45 499.22 L675.67 497.59 L672.90 495.96 L670.16 494.33 L667.42 492.71 L664.71 491.08 L662.02 489.45 L659.34 487.82 L656.69 486.19 L654.05 484.56 L651.43 482.94 L648.83 481.31 L646.25 479.68 L643.68 478.05 L641.14 476.42 L638.62 474.79 L636.12 473.16 L633.64 471.54 L631.17 469.91 L628.73 468.28 L626.31 466.65 L623.92 465.02 L621.54 463.39 L619.18 461.77 L616.85 460.14 L614.53 458.51 L612.24 456.88 L609.97 455.25 L607.73 453.62 L605.50 452.00 L603.30 450.37 L601.12 448.74 L598.97 447.11 L596.84 445.48 L594.73 443.85 L592.64 442.23 L590.58 440.60 L588.54 438.97 L586.52 437.34 L584.53 435.71 L582.57 434.08 L580.62 432.46 L578.71 430.83 L576.81 429.20 L574.95 427.57 L573.10 425.94 L571.28 424.31 L569.49 422.69 L567.72 421.06 L565.98 419.43 L564.27 417.80 L562.57 416.17 L560.91 414.54 L559.27 412.92 L557.66 411.29 L556.07 409.66 L554.51 408.03 L552.98 406.40 L551.47 404.77 L549.99 403.15 L548.54 401.52 L547.11 399.89 L545.71 398.26 L544.34 396.63 L542.99 395.00 L541.68 393.38 L540.39 391.75 L539.12 390.12 L537.89 388.49 L536.68 386.86 L535.50 385.23 L534.35 383.61 L533.23 381.98 L532.13 380.35 L531.07 378.72 L530.03 377.09 L529.02 375.46 L528.03 373.84 L527.08 372.21 L526.16 370.58 L525.26 368.95 L524.39 367.32 L523.55 365.69 L522.74 364.07 L521.96 362.44 L521.21 360.81 L520.49 359.18 L519.79 357.55 L519.13 355.92 L518.49 354.30 L517.89 352.67 L517.31 351.04 L516.76 349.41 L516.24 347.78 L515.76 346.15 L515.30 344.53 L514.87 342.90 L514.47 341.27 L514.09 339.64 L513.75 338.01 L513.44 336.38 L513.16 334.76 L512.91 333.13 L512.68 331.50 L512.49 329.87 L512.33 328.24 L512.19 326.61 L512.09 324.99 L512.02 323.36 L511.97 321.73 L511.96 320.10 L511.97 318.47 L512.02 316.84 L512.09 315.21 L512.19 313.59 L512.33 311.96 L512.49 310.33 L512.68 308.70 L512.91 307.07 L513.16 305.44 L513.44 303.82 L513.75 302.19 L514.09 300.56 L514.47 298.93 L514.87 297.30 L515.30 295.67 L515.76 294.05 L516.24 292.42 L516.76 290.79 L517.31 289.16 L517.89 287.53 L518.49 285.90 L519.13 284.28 L519.79 282.65 L520.49 281.02 L521.21 279.39 L521.96 277.76 L522.74 276.13 L523.55 274.51 L524.39 272.88 L525.26 271.25 L526.16 269.62 L527.08 267.99 L528.03 266.36 L529.02 264.74 L530.03 263.11 L531.07 261.48 L532.13 259.85 L533.23 258.22 L534.35 256.59 L535.50 254.97 L536.68 253.34 L537.89 251.71 L539.12 250.08 L540.39 248.45 L541.68 246.82 L542.99 245.20 L544.34 243.57 L545.71 241.94 L547.11 240.31 L548.54 238.68 L549.99 237.05 L551.47 235.43 L552.98 233.80 L554.51 232.17 L556.07 230.54 L557.66 228.91 L559.27 227.28 L560.91 225.66 L562.57 224.03 L564.27 222.40 L565.98 220.77 L567.72 219.14 L569.49 217.51 L571.28 215.89 L573.10 214.26 L574.95 212.63 L576.81 211.00 L578.71 209.37 L580.62 207.74 L582.57 206.12 L584.53 204.49 L586.52 202.86 L588.54 201.23 L590.58 199.60 L592.64 197.97 L594.73 196.35 L596.84 194.72 L598.97 193.09 L601.12 191.46 L603.30 189.83 L605.50 188.20 L607.73 186.58 L609.97 184.95 L612.24 183.32 L614.53 181.69 L616.85 180.06 L619.18 178.43 L621.54 176.81 L623.92 175.18 L626.31 173.55 L628.73 171.92 L631.17 170.29 L633.64 168.66 L636.12 167.04 L638.62 165.41 L641.14 163.78 L643.68 162.15 L646.25 160.52 L648.83 158.89 L651.43 157.27 L654.05 155.64 L656.69 154.01 L659.34 152.38 L662.02 150.75 L664.71 149.12 L667.42 147.49 L670.16 145.87 L672.90 144.24 L675.67 142.61 L678.45 140.98 L681.25 139.35 L684.07 137.72 L686.90 136.10 L689.75 134.47 L692.61 132.84 L695.50 131.21 L698.39 129.58 L701.31 127.95 L704.23 126.33 L707.18 124.70 L710.14 123.07 L713.11 121.44 L716.10 119.81 L719.10 118.18 L722.11 116.56 L725.14 114.93 L728.18 113.30 L731.24 111.67 L734.31 110.04 L737.39 108.41 L740.49 106.79 L743.59 105.16 L746.71 103.53 L749.84 101.90 L752.98 100.27 L756.14 98.64 L759.30 97.02 L762.48 95.39 L765.66 93.76 L768.86 92.13 L772.07 90.50 L775.28 88.87 L778.51 87.25 L781.75 85.62 L784.99 83.99 L788.25 82.36 L791.51 80.73 L794.78 79.10 L798.06 77.48 L801.35 75.85 L804.64 74.22 L807.94 72.59 L811.25 70.96 L814.57 69.33 L817.89 67.71 L821.22 66.08 L824.56 64.45 L827.90 62.82 L831.25 61.19 L834.60 59.56 L837.96 57.94 L841.32 56.31 L844.69 54.68 L848.06 53.05 L851.44 51.42 L854.82 49.79 L858.20 48.17 L861.59 46.54 L864.98 44.91 L868.37 43.28 L871.77 41.65 L875.16 40.02 L878.56 38.40 L881.97 36.77 L885.37 35.14 L888.77 33.51 L892.18 31.88 L895.59 30.25 L898.99 28.63 L902.40 27.00"/><path d="M902.40 613.20 L898.57 611.57 L894.73 609.95 L890.90 608.32 L887.07 606.69 L883.24 605.06 L879.41 603.43 L875.58 601.80 L871.76 600.18 L867.94 598.55 L864.12 596.92 L860.30 595.29 L856.49 593.66 L852.68 592.03 L848.87 590.41 L845.07 588.78 L841.27 587.15 L837.47 585.52 L833.69 583.89 L829.90 582.26 L826.13 580.64 L822.35 579.01 L818.59 577.38 L814.83 575.75 L811.07 574.12 L807.33 572.49 L803.59 570.87 L799.86 569.24 L796.14 567.61 L792.42 565.98 L788.71 564.35 L785.02 562.72 L781.33 561.10 L777.65 559.47 L773.98 557.84 L770.32 556.21 L766.66 554.58 L763.02 552.95 L759.39 551.33 L755.78 549.70 L752.17 548.07 L748.57 546.44 L744.99 544.81 L741.41 543.18 L737.85 541.56 L734.31 539.93 L730.77 538.30 L727.25 536.67 L723.74 535.04 L720.25 533.41 L716.77 531.79 L713.30 530.16 L709.85 528.53 L706.41 526.90 L702.98 525.27 L699.58 523.64 L696.18 522.02 L692.81 520.39 L689.45 518.76 L686.10 517.13 L682.78 515.50 L679.46 513.87 L676.17 512.25 L672.89 510.62 L669.63 508.99 L666.39 507.36 L663.17 505.73 L659.96 504.10 L656.77 502.48 L653.61 500.85 L650.46 499.22 L647.33 497.59 L644.22 495.96 L641.12 494.33 L638.05 492.71 L635.00 491.08 L631.97 489.45 L628.96 487.82 L625.97 486.19 L623.00 484.56 L620.06 482.94 L617.13 481.31 L614.23 479.68 L611.34 478.05 L608.48 476.42 L605.65 474.79 L602.83 473.16 L600.04 471.54 L597.27 469.91 L594.53 468.28 L591.80 466.65 L589.11 465.02 L586.43 463.39 L583.78 461.77 L581.15 460.14 L578.55 458.51 L575.97 456.88 L573.42 455.25 L570.89 453.62 L568.39 452.00 L565.92 450.37 L563.46 448.74 L561.04 447.11 L558.64 445.48 L556.27 443.85 L553.92 442.23 L551.60 440.60 L549.31 438.97 L547.04 437.34 L544.80 435.71 L542.59 434.08 L540.40 432.46 L538.25 430.83 L536.12 429.20 L534.01 427.57 L531.94 425.94 L529.90 424.31 L527.88 422.69 L525.89 421.06 L523.93 419.43 L522.00 417.80 L520.10 416.17 L518.22 414.54 L516.38 412.92 L514.57 411.29 L512.78 409.66 L511.03 408.03 L509.30 406.40 L507.61 404.77 L505.94 403.15 L504.30 401.52 L502.70 399.89 L501.13 398.26 L499.58 396.63 L498.07 395.00 L496.59 393.38 L495.13 391.75 L493.71 390.12 L492.33 388.49 L490.97 386.86 L489.64 385.23 L488.35 383.61 L487.08 381.98 L485.85 380.35 L484.65 378.72 L483.48 377.09 L482.34 375.46 L481.24 373.84 L480.17 372.21 L479.13 370.58 L478.12 368.95 L477.14 367.32 L476.20 365.69 L475.29 364.07 L474.41 362.44 L473.56 360.81 L472.75 359.18 L471.97 357.55 L471.22 355.92 L470.51 354.30 L469.82 352.67 L469.17 351.04 L468.56 349.41 L467.98 347.78 L467.43 346.15 L466.91 344.53 L466.42 342.90 L465.97 341.27 L465.56 339.64 L465.17 338.01 L464.82 336.38 L464.50 334.76 L464.22 333.13 L463.97 331.50 L463.75 329.87 L463.57 328.24 L463.42 326.61 L463.30 324.99 L463.22 323.36 L463.17 321.73 L463.15 320.10 L463.17 318.47 L463.22 316.84 L463.30 315.21 L463.42 313.59 L463.57 311.96 L463.75 310.33 L463.97 308.70 L464.22 307.07 L464.50 305.44 L464.82 303.82 L465.17 302.19 L465.56 300.56 L465.97 298.93 L466.42 297.30 L466.91 295.67 L467.43 294.05 L467.98 292.42 L468.56 290.79 L469.17 289.16 L469.82 287.53 L470.51 285.90 L471.22 284.28 L471.97 282.65 L472.75 281.02 L473.56 279.39 L474.41 277.76 L475.29 276.13 L476.20 274.51 L477.14 272.88 L478.12 271.25 L479.13 269.62 L480.17 267.99 L481.24 266.36 L482.34 264.74 L483.48 263.11 L484.65 261.48 L485.85 259.85 L487.08 258.22 L488.35 256.59 L489.64 254.97 L490.97 253.34 L492.33 251.71 L493.71 250.08 L495.13 248.45 L496.59 246.82 L498.07 245.20 L499.58 243.57 L501.13 241.94 L502.70 240.31 L504.30 238.68 L505.94 237.05 L507.61 235.43 L509.30 233.80 L511.03 232.17 L512.78 230.54 L514.57 228.91 L516.38 227.28 L518.22 225.66 L520.10 224.03 L522.00 222.40 L523.93 220.77 L525.89 219.14 L527.88 217.51 L529.90 215.89 L531.94 214.26 L534.01 212.63 L536.12 211.00 L538.25 209.37 L540.40 207.74 L542.59 206.12 L544.80 204.49 L547.04 202.86 L549.31 201.23 L551.60 199.60 L553.92 197.97 L556.27 196.35 L558.64 194.72 L561.04 193.09 L563.46 191.46 L565.92 189.83 L568.39 188.20 L570.89 186.58 L573.42 184.95 L575.97 183.32 L578.55 181.69 L581.15 180.06 L583.78 178.43 L586.43 176.81 L589.11 175.18 L591.80 173.55 L594.53 171.92 L597.27 170.29 L600.04 168.66 L602.83 167.04 L605.65 165.41 L608.48 163.78 L611.34 162.15 L614.23 160.52 L617.13 158.89 L620.06 157.27 L623.00 155.64 L625.97 154.01 L628.96 152.38 L631.97 150.75 L635.00 149.12 L638.05 147.49 L641.12 145.87 L644.22 144.24 L647.33 142.61 L650.46 140.98 L653.61 139.35 L656.77 137.72 L659.96 136.10 L663.17 134.47 L666.39 132.84 L669.63 131.21 L672.89 129.58 L676.17 127.95 L679.46 126.33 L682.78 124.70 L686.10 123.07 L689.45 121.44 L692.81 119.81 L696.18 118.18 L699.58 116.56 L702.98 114.93 L706.41 113.30 L709.85 111.67 L713.30 110.04 L716.77 108.41 L720.25 106.79 L723.74 105.16 L727.25 103.53 L730.77 101.90 L734.31 100.27 L737.85 98.64 L741.41 97.02 L744.99 95.39 L748.57 93.76 L752.17 92.13 L755.78 90.50 L759.39 88.87 L763.02 87.25 L766.66 85.62 L770.32 83.99 L773.98 82.36 L777.65 80.73 L781.33 79.10 L785.02 77.48 L788.71 75.85 L792.42 74.22 L796.14 72.59 L799.86 70.96 L803.59 69.33 L807.33 67.71 L811.07 66.08 L814.83 64.45 L818.59 62.82 L822.35 61.19 L826.13 59.56 L829.90 57.94 L833.69 56.31 L837.47 54.68 L841.27 53.05 L845.07 51.42 L848.87 49.79 L852.68 48.17 L856.49 46.54 L860.30 44.91 L864.12 43.28 L867.94 41.65 L871.76 40.02 L875.58 38.40 L879.41 36.77 L883.24 35.14 L887.07 33.51 L890.90 31.88 L894.73 30.25 L898.57 28.63 L902.40 27.00"/><path d="M902.40 613.20 L898.14 611.57 L893.88 609.95 L889.62 608.32 L885.37 606.69 L881.11 605.06 L876.86 603.43 L872.60 601.80 L868.36 600.18 L864.11 598.55 L859.86 596.92 L855.62 595.29 L851.38 593.66 L847.15 592.03 L842.92 590.41 L838.70 588.78 L834.48 587.15 L830.26 585.52 L826.05 583.89 L821.85 582.26 L817.65 580.64 L813.46 579.01 L809.27 577.38 L805.10 575.75 L800.93 574.12 L796.77 572.49 L792.61 570.87 L788.47 569.24 L784.33 567.61 L780.20 565.98 L776.08 564.35 L771.97 562.72 L767.87 561.10 L763.78 559.47 L759.71 557.84 L755.64 556.21 L751.58 554.58 L747.54 552.95 L743.50 551.33 L739.48 549.70 L735.48 548.07 L731.48 546.44 L727.50 544.81 L723.53 543.18 L719.57 541.56 L715.63 539.93 L711.70 538.30 L707.79 536.67 L703.89 535.04 L700.01 533.41 L696.14 531.79 L692.29 530.16 L688.45 528.53 L684.63 526.90 L680.83 525.27 L677.04 523.64 L673.27 522.02 L669.52 520.39 L665.79 518.76 L662.07 517.13 L658.37 515.50 L654.69 513.87 L651.03 512.25 L647.39 510.62 L643.77 508.99 L640.17 507.36 L636.59 505.73 L633.02 504.10 L629.48 502.48 L625.96 500.85 L622.46 499.22 L618.99 497.59 L615.53 495.96 L612.09 494.33 L608.68 492.71 L605.29 491.08 L601.92 489.45 L598.58 487.82 L595.26 486.19 L591.96 484.56 L588.68 482.94 L585.43 481.31 L582.21 479.68 L579.00 478.05 L575.83 476.42 L572.67 474.79 L569.55 473.16 L566.45 471.54 L563.37 469.91 L560.32 468.28 L557.29 466.65 L554.29 465.02 L551.32 463.39 L548.38 461.77 L545.46 460.14 L542.57 458.51 L539.70 456.88 L536.87 455.25 L534.06 453.62 L531.28 452.00 L528.53 450.37 L525.80 448.74 L523.11 447.11 L520.44 445.48 L517.81 443.85 L515.20 442.23 L512.62 440.60 L510.07 438.97 L507.56 437.34 L505.07 435.71 L502.61 434.08 L500.18 432.46 L497.78 430.83 L495.42 429.20 L493.08 427.57 L490.78 425.94 L488.51 424.31 L486.26 422.69 L484.06 421.06 L481.88 419.43 L479.73 417.80 L477.62 416.17 L475.54 414.54 L473.49 412.92 L471.47 411.29 L469.49 409.66 L467.54 408.03 L465.62 406.40 L463.74 404.77 L461.89 403.15 L460.07 401.52 L458.29 399.89 L456.54 398.26 L454.82 396.63 L453.14 395.00 L451.50 393.38 L449.88 391.75 L448.31 390.12 L446.76 388.49 L445.25 386.86 L443.78 385.23 L442.34 383.61 L440.93 381.98 L439.57 380.35 L438.23 378.72 L436.93 377.09 L435.67 375.46 L434.44 373.84 L433.25 372.21 L432.10 370.58 L430.98 368.95 L429.89 367.32 L428.84 365.69 L427.83 364.07 L426.85 362.44 L425.91 360.81 L425.01 359.18 L424.14 357.55 L423.31 355.92 L422.52 354.30 L421.76 352.67 L421.04 351.04 L420.35 349.41 L419.71 347.78 L419.09 346.15 L418.52 344.53 L417.98 342.90 L417.48 341.27 L417.02 339.64 L416.59 338.01 L416.20 336.38 L415.85 334.76 L415.53 333.13 L415.26 331.50 L415.01 329.87 L414.81 328.24 L414.64 326.61 L414.51 324.99 L414.42 323.36 L414.36 321.73 L414.35 320.10 L414.36 318.47 L414.42 316.84 L414.51 315.21 L414.64 313.59 L414.81 311.96 L415.01 310.33 L415.26 308.70 L415.53 307.07 L415.85 305.44 L416.20 303.82 L416.59 302.19 L417.02 300.56 L417.48 298.93 L417.98 297.30 L418.52 295.67 L419.09 294.05 L419.71 292.42 L420.35 290.79 L421.04 289.16 L421.76 287.53 L422.52 285.90 L423.31 284.28 L424.14 282.65 L425.01 281.02 L425.91 279.39 L426.85 277.76 L427.83 276.13 L428.84 274.51 L429.89 272.88 L430.98 271.25 L432.10 269.62 L433.25 267.99 L434.44 266.36 L435.67 264.74 L436.93 263.11 L438.23 261.48 L439.57 259.85 L440.93 258.22 L442.34 256.59 L443.78 254.97 L445.25 253.34 L446.76 251.71 L448.31 250.08 L449.88 248.45 L451.50 246.82 L453.14 245.20 L454.82 243.57 L456.54 241.94 L458.29 240.31 L460.07 238.68 L461.89 237.05 L463.74 235.43 L465.62 233.80 L467.54 232.17 L469.49 230.54 L471.47 228.91 L473.49 227.28 L475.54 225.66 L477.62 224.03 L479.73 222.40 L481.88 220.77 L484.06 219.14 L486.26 217.51 L488.51 215.89 L490.78 214.26 L493.08 212.63 L495.42 211.00 L497.78 209.37 L500.18 207.74 L502.61 206.12 L505.07 204.49 L507.56 202.86 L510.07 201.23 L512.62 199.60 L515.20 197.97 L517.81 196.35 L520.44 194.72 L523.11 193.09 L525.80 191.46 L528.53 189.83 L531.28 188.20 L534.06 186.58 L536.87 184.95 L539.70 183.32 L542.57 181.69 L545.46 180.06 L548.38 178.43 L551.32 176.81 L554.29 175.18 L557.29 173.55 L560.32 171.92 L563.37 170.29 L566.45 168.66 L569.55 167.04 L572.67 165.41 L575.83 163.78 L579.00 162.15 L582.21 160.52 L585.43 158.89 L588.68 157.27 L591.96 155.64 L595.26 154.01 L598.58 152.38 L601.92 150.75 L605.29 149.12 L608.68 147.49 L612.09 145.87 L615.53 144.24 L618.99 142.61 L622.46 140.98 L625.96 139.35 L629.48 137.72 L633.02 136.10 L636.59 134.47 L640.17 132.84 L643.77 131.21 L647.39 129.58 L651.03 127.95 L654.69 126.33 L658.37 124.70 L662.07 123.07 L665.79 121.44 L669.52 119.81 L673.27 118.18 L677.04 116.56 L680.83 114.93 L684.63 113.30 L688.45 111.67 L692.29 110.04 L696.14 108.41 L700.01 106.79 L703.89 105.16 L707.79 103.53 L711.70 101.90 L715.63 100.27 L719.57 98.64 L723.53 97.02 L727.50 95.39 L731.48 93.76 L735.48 92.13 L739.48 90.50 L743.50 88.87 L747.54 87.25 L751.58 85.62 L755.64 83.99 L759.71 82.36 L763.78 80.73 L767.87 79.10 L771.97 77.48 L776.08 75.85 L780.20 74.22 L784.33 72.59 L788.47 70.96 L792.61 69.33 L796.77 67.71 L800.93 66.08 L805.10 64.45 L809.27 62.82 L813.46 61.19 L817.65 59.56 L821.85 57.94 L826.05 56.31 L830.26 54.68 L834.48 53.05 L838.70 51.42 L842.92 49.79 L847.15 48.17 L851.38 46.54 L855.62 44.91 L859.86 43.28 L864.11 41.65 L868.36 40.02 L872.60 38.40 L876.86 36.77 L881.11 35.14 L885.37 33.51 L889.62 31.88 L893.88 30.25 L898.14 28.63 L902.40 27.00"/><path d="M902.40 613.20 L897.72 611.57 L893.03 609.95 L888.35 608.32 L883.66 606.69 L878.98 605.06 L874.30 603.43 L869.63 601.80 L864.95 600.18 L860.28 598.55 L855.61 596.92 L850.94 595.29 L846.28 593.66 L841.63 592.03 L836.97 590.41 L832.33 588.78 L827.68 587.15 L823.05 585.52 L818.42 583.89 L813.79 582.26 L809.18 580.64 L804.56 579.01 L799.96 577.38 L795.37 575.75 L790.78 574.12 L786.20 572.49 L781.63 570.87 L777.07 569.24 L772.52 567.61 L767.98 565.98 L763.45 564.35 L758.93 562.72 L754.42 561.10 L749.92 559.47 L745.44 557.84 L740.96 556.21 L736.50 554.58 L732.05 552.95 L727.62 551.33 L723.19 549.70 L718.78 548.07 L714.39 546.44 L710.01 544.81 L705.64 543.18 L701.29 541.56 L696.95 539.93 L692.63 538.30 L688.33 536.67 L684.04 535.04 L679.77 533.41 L675.51 531.79 L671.28 530.16 L667.06 528.53 L662.85 526.90 L658.67 525.27 L654.51 523.64 L650.36 522.02 L646.23 520.39 L642.12 518.76 L638.04 517.13 L633.97 515.50 L629.92 513.87 L625.90 512.25 L621.89 510.62 L617.91 508.99 L613.95 507.36 L610.00 505.73 L606.09 504.10 L602.19 502.48 L598.32 500.85 L594.47 499.22 L590.64 497.59 L586.84 495.96 L583.06 494.33 L579.31 492.71 L575.58 491.08 L571.88 489.45 L568.20 487.82 L564.54 486.19 L560.91 484.56 L557.31 482.94 L553.74 481.31 L550.19 479.68 L546.67 478.05 L543.17 476.42 L539.70 474.79 L536.26 473.16 L532.85 471.54 L529.47 469.91 L526.11 468.28 L522.78 466.65 L519.48 465.02 L516.21 463.39 L512.98 461.77 L509.77 460.14 L506.58 458.51 L503.43 456.88 L500.32 455.25 L497.23 453.62 L494.17 452.00 L491.14 450.37 L488.15 448.74 L485.18 447.11 L482.25 445.48 L479.35 443.85 L476.48 442.23 L473.64 440.60 L470.84 438.97 L468.07 437.34 L465.33 435.71 L462.63 434.08 L459.96 432.46 L457.32 430.83 L454.72 429.20 L452.15 427.57 L449.62 425.94 L447.12 424.31 L444.65 422.69 L442.22 421.06 L439.83 419.43 L437.47 417.80 L435.14 416.17 L432.85 414.54 L430.60 412.92 L428.38 411.29 L426.20 409.66 L424.05 408.03 L421.95 406.40 L419.87 404.77 L417.84 403.15 L415.84 401.52 L413.88 399.89 L411.95 398.26 L410.07 396.63 L408.22 395.00 L406.41 393.38 L404.63 391.75 L402.90 390.12 L401.20 388.49 L399.54 386.86 L397.92 385.23 L396.33 383.61 L394.79 381.98 L393.28 380.35 L391.82 378.72 L390.39 377.09 L389.00 375.46 L387.65 373.84 L386.34 372.21 L385.06 370.58 L383.83 368.95 L382.64 367.32 L381.49 365.69 L380.37 364.07 L379.30 362.44 L378.27 360.81 L377.27 359.18 L376.32 357.55 L375.40 355.92 L374.53 354.30 L373.70 352.67 L372.90 351.04 L372.15 349.41 L371.44 347.78 L370.76 346.15 L370.13 344.53 L369.54 342.90 L368.99 341.27 L368.48 339.64 L368.01 338.01 L367.58 336.38 L367.19 334.76 L366.85 333.13 L366.54 331.50 L366.28 329.87 L366.05 328.24 L365.87 326.61 L365.72 324.99 L365.62 323.36 L365.56 321.73 L365.54 320.10 L365.56 318.47 L365.62 316.84 L365.72 315.21 L365.87 313.59 L366.05 311.96 L366.28 310.33 L366.54 308.70 L366.85 307.07 L367.19 305.44 L367.58 303.82 L368.01 302.19 L368.48 300.56 L368.99 298.93 L369.54 297.30 L370.13 295.67 L370.76 294.05 L371.44 292.42 L372.15 290.79 L372.90 289.16 L373.70 287.53 L374.53 285.90 L375.40 284.28 L376.32 282.65 L377.27 281.02 L378.27 279.39 L379.30 277.76 L380.37 276.13 L381.49 274.51 L382.64 272.88 L383.83 271.25 L385.06 269.62 L386.34 267.99 L387.65 266.36 L389.00 264.74 L390.39 263.11 L391.82 261.48 L393.28 259.85 L394.79 258.22 L396.33 256.59 L397.92 254.97 L399.54 253.34 L401.20 251.71 L402.90 250.08 L404.63 248.45 L406.41 246.82 L408.22 245.20 L410.07 243.57 L411.95 241.94 L413.88 240.31 L415.84 238.68 L417.84 237.05 L419.87 235.43 L421.95 233.80 L424.05 232.17 L426.20 230.54 L428.38 228.91 L430.60 227.28 L432.85 225.66 L435.14 224.03 L437.47 222.40 L439.83 220.77 L442.22 219.14 L444.65 217.51 L447.12 215.89 L449.62 214.26 L452.15 212.63 L454.72 211.00 L457.32 209.37 L459.96 207.74 L462.63 206.12 L465.33 204.49 L468.07 202.86 L470.84 201.23 L473.64 199.60 L476.48 197.97 L479.35 196.35 L482.25 194.72 L485.18 193.09 L488.15 191.46 L491.14 189.83 L494.17 188.20 L497.23 186.58 L500.32 184.95 L503.43 183.32 L506.58 181.69 L509.77 180.06 L512.98 178.43 L516.21 176.81 L519.48 175.18 L522.78 173.55 L526.11 171.92 L529.47 170.29 L532.85 168.66 L536.26 167.04 L539.70 165.41 L543.17 163.78 L546.67 162.15 L550.19 160.52 L553.74 158.89 L557.31 157.27 L560.91 155.64 L564.54 154.01 L568.20 152.38 L571.88 150.75 L575.58 149.12 L579.31 147.49 L583.06 145.87 L586.84 144.24 L590.64 142.61 L594.47 140.98 L598.32 139.35 L602.19 137.72 L606.09 136.10 L610.00 134.47 L613.95 132.84 L617.91 131.21 L621.89 129.58 L625.90 127.95 L629.92 126.33 L633.97 124.70 L638.04 123.07 L642.12 121.44 L646.23 119.81 L650.36 118.18 L654.51 116.56 L658.67 114.93 L662.85 113.30 L667.06 111.67 L671.28 110.04 L675.51 108.41 L679.77 106.79 L684.04 105.16 L688.33 103.53 L692.63 101.90 L696.95 100.27 L701.29 98.64 L705.64 97.02 L710.01 95.39 L714.39 93.76 L718.78 92.13 L723.19 90.50 L727.62 88.87 L732.05 87.25 L736.50 85.62 L740.96 83.99 L745.44 82.36 L749.92 80.73 L754.42 79.10 L758.93 77.48 L763.45 75.85 L767.98 74.22 L772.52 72.59 L777.07 70.96 L781.63 69.33 L786.20 67.71 L790.78 66.08 L795.37 64.45 L799.96 62.82 L804.56 61.19 L809.18 59.56 L813.79 57.94 L818.42 56.31 L823.05 54.68 L827.68 53.05 L832.33 51.42 L836.97 49.79 L841.63 48.17 L846.28 46.54 L850.94 44.91 L855.61 43.28 L860.28 41.65 L864.95 40.02 L869.63 38.40 L874.30 36.77 L878.98 35.14 L883.66 33.51 L888.35 31.88 L893.03 30.25 L897.72 28.63 L902.40 27.00"/><path d="M902.40 613.20 L897.29 611.57 L892.18 609.95 L887.07 608.32 L881.96 606.69 L876.85 605.06 L871.75 603.43 L866.65 601.80 L861.55 600.18 L856.45 598.55 L851.36 596.92 L846.27 595.29 L841.18 593.66 L836.10 592.03 L831.03 590.41 L825.96 588.78 L820.89 587.15 L815.83 585.52 L810.78 583.89 L805.74 582.26 L800.70 580.64 L795.67 579.01 L790.65 577.38 L785.64 575.75 L780.63 574.12 L775.64 572.49 L770.65 570.87 L765.68 569.24 L760.71 567.61 L755.76 565.98 L750.82 564.35 L745.89 562.72 L740.97 561.10 L736.06 559.47 L731.17 557.84 L726.29 556.21 L721.42 554.58 L716.57 552.95 L711.73 551.33 L706.90 549.70 L702.09 548.07 L697.30 546.44 L692.52 544.81 L687.75 543.18 L683.01 541.56 L678.28 539.93 L673.56 538.30 L668.87 536.67 L664.19 535.04 L659.53 533.41 L654.89 531.79 L650.26 530.16 L645.66 528.53 L641.08 526.90 L636.51 525.27 L631.97 523.64 L627.45 522.02 L622.94 520.39 L618.46 518.76 L614.00 517.13 L609.57 515.50 L605.15 513.87 L600.76 512.25 L596.39 510.62 L592.04 508.99 L587.72 507.36 L583.42 505.73 L579.15 504.10 L574.90 502.48 L570.68 500.85 L566.48 499.22 L562.30 497.59 L558.15 495.96 L554.03 494.33 L549.94 492.71 L545.87 491.08 L541.83 489.45 L537.81 487.82 L533.83 486.19 L529.87 484.56 L525.94 482.94 L522.04 481.31 L518.17 479.68 L514.33 478.05 L510.51 476.42 L506.73 474.79 L502.98 473.16 L499.25 471.54 L495.56 469.91 L491.90 468.28 L488.27 466.65 L484.67 465.02 L481.11 463.39 L477.57 461.77 L474.07 460.14 L470.60 458.51 L467.17 456.88 L463.76 455.25 L460.39 453.62 L457.06 452.00 L453.75 450.37 L450.49 448.74 L447.25 447.11 L444.05 445.48 L440.89 443.85 L437.76 442.23 L434.67 440.60 L431.61 438.97 L428.59 437.34 L425.60 435.71 L422.65 434.08 L419.74 432.46 L416.86 430.83 L414.02 429.20 L411.22 427.57 L408.45 425.94 L405.73 424.31 L403.04 422.69 L400.39 421.06 L397.77 419.43 L395.20 417.80 L392.66 416.17 L390.16 414.54 L387.71 412.92 L385.29 411.29 L382.91 409.66 L380.57 408.03 L378.27 406.40 L376.01 404.77 L373.79 403.15 L371.61 401.52 L369.47 399.89 L367.37 398.26 L365.31 396.63 L363.29 395.00 L361.32 393.38 L359.38 391.75 L357.49 390.12 L355.63 388.49 L353.82 386.86 L352.05 385.23 L350.33 383.61 L348.64 381.98 L347.00 380.35 L345.40 378.72 L343.84 377.09 L342.32 375.46 L340.85 373.84 L339.42 372.21 L338.03 370.58 L336.69 368.95 L335.39 367.32 L334.13 365.69 L332.92 364.07 L331.74 362.44 L330.62 360.81 L329.53 359.18 L328.49 357.55 L327.49 355.92 L326.54 354.30 L325.63 352.67 L324.77 351.04 L323.94 349.41 L323.17 347.78 L322.43 346.15 L321.74 344.53 L321.10 342.90 L320.50 341.27 L319.94 339.64 L319.43 338.01 L318.96 336.38 L318.54 334.76 L318.16 333.13 L317.83 331.50 L317.54 329.87 L317.29 328.24 L317.09 326.61 L316.93 324.99 L316.82 323.36 L316.76 321.73 L316.73 320.10 L316.76 318.47 L316.82 316.84 L316.93 315.21 L317.09 313.59 L317.29 311.96 L317.54 310.33 L317.83 308.70 L318.16 307.07 L318.54 305.44 L318.96 303.82 L319.43 302.19 L319.94 300.56 L320.50 298.93 L321.10 297.30 L321.74 295.67 L322.43 294.05 L323.17 292.42 L323.94 290.79 L324.77 289.16 L325.63 287.53 L326.54 285.90 L327.49 284.28 L328.49 282.65 L329.53 281.02 L330.62 279.39 L331.74 277.76 L332.92 276.13 L334.13 274.51 L335.39 272.88 L336.69 271.25 L338.03 269.62 L339.42 267.99 L340.85 266.36 L342.32 264.74 L343.84 263.11 L345.40 261.48 L347.00 259.85 L348.64 258.22 L350.33 256.59 L352.05 254.97 L353.82 253.34 L355.63 251.71 L357.49 250.08 L359.38 248.45 L361.32 246.82 L363.29 245.20 L365.31 243.57 L367.37 241.94 L369.47 240.31 L371.61 238.68 L373.79 237.05 L376.01 235.43 L378.27 233.80 L380.57 232.17 L382.91 230.54 L385.29 228.91 L387.71 227.28 L390.16 225.66 L392.66 224.03 L395.20 222.40 L397.77 220.77 L400.39 219.14 L403.04 217.51 L405.73 215.89 L408.45 214.26 L411.22 212.63 L414.02 211.00 L416.86 209.37 L419.74 207.74 L422.65 206.12 L425.60 204.49 L428.59 202.86 L431.61 201.23 L434.67 199.60 L437.76 197.97 L440.89 196.35 L444.05 194.72 L447.25 193.09 L450.49 191.46 L453.75 189.83 L457.06 188.20 L460.39 186.58 L463.76 184.95 L467.17 183.32 L470.60 181.69 L474.07 180.06 L477.57 178.43 L481.11 176.81 L484.67 175.18 L488.27 173.55 L491.90 171.92 L495.56 170.29 L499.25 168.66 L502.98 167.04 L506.73 165.41 L510.51 163.78 L514.33 162.15 L518.17 160.52 L522.04 158.89 L525.94 157.27 L529.87 155.64 L533.83 154.01 L537.81 152.38 L541.83 150.75 L545.87 149.12 L549.94 147.49 L554.03 145.87 L558.15 144.24 L562.30 142.61 L566.48 140.98 L570.68 139.35 L574.90 137.72 L579.15 136.10 L583.42 134.47 L587.72 132.84 L592.04 131.21 L596.39 129.58 L600.76 127.95 L605.15 126.33 L609.57 124.70 L614.00 123.07 L618.46 121.44 L622.94 119.81 L627.45 118.18 L631.97 116.56 L636.51 114.93 L641.08 113.30 L645.66 111.67 L650.26 110.04 L654.89 108.41 L659.53 106.79 L664.19 105.16 L668.87 103.53 L673.56 101.90 L678.28 100.27 L683.01 98.64 L687.75 97.02 L692.52 95.39 L697.30 93.76 L702.09 92.13 L706.90 90.50 L711.73 88.87 L716.57 87.25 L721.42 85.62 L726.29 83.99 L731.17 82.36 L736.06 80.73 L740.97 79.10 L745.89 77.48 L750.82 75.85 L755.76 74.22 L760.71 72.59 L765.68 70.96 L770.65 69.33 L775.64 67.71 L780.63 66.08 L785.64 64.45 L790.65 62.82 L795.67 61.19 L800.70 59.56 L805.74 57.94 L810.78 56.31 L815.83 54.68 L820.89 53.05 L825.96 51.42 L831.03 49.79 L836.10 48.17 L841.18 46.54 L846.27 44.91 L851.36 43.28 L856.45 41.65 L861.55 40.02 L866.65 38.40 L871.75 36.77 L876.85 35.14 L881.96 33.51 L887.07 31.88 L892.18 30.25 L897.29 28.63 L902.40 27.00"/></g>
<g font-family="&quot;Liberation Sans&quot;, sans-serif"><text x="314.73" y="330.00" font-size="10.30" fill="#8c8c8c" text-anchor="middle" textLength="26.04" lengthAdjust="spacingAndGlyphs">+180</text><circle cx="331.85" cy="322.50" r="0.9" fill="none" stroke="#8c8c8c" stroke-width="0.8"/><text x="412.35" y="330.00" font-size="10.30" fill="#8c8c8c" text-anchor="middle" textLength="26.04" lengthAdjust="spacingAndGlyphs">+150</text><circle cx="429.46" cy="322.50" r="0.9" fill="none" stroke="#8c8c8c" stroke-width="0.8"/><text x="509.96" y="330.00" font-size="10.30" fill="#8c8c8c" text-anchor="middle" textLength="26.04" lengthAdjust="spacingAndGlyphs">+120</text><circle cx="527.07" cy="322.50" r="0.9" fill="none" stroke="#8c8c8c" stroke-width="0.8"/><text x="607.57" y="330.00" font-size="10.30" fill="#8c8c8c" text-anchor="middle" textLength="19.90" lengthAdjust="spacingAndGlyphs">+90</text><circle cx="621.60" cy="322.50" r="0.9" fill="none" stroke="#8c8c8c" stroke-width="0.8"/><text x="705.18" y="330.00" font-size="10.30" fill="#8c8c8c" text-anchor="middle" textLength="19.90" lengthAdjust="spacingAndGlyphs">+60</text><circle cx="719.21" cy="322.50" r="0.9" fill="none" stroke="#8c8c8c" stroke-width="0.8"/><text x="802.79" y="330.00" font-size="10.30" fill="#8c8c8c" text-anchor="middle" textLength="19.90" lengthAdjust="spacingAndGlyphs">+30</text><circle cx="816.82" cy="322.50" r="0.9" fill="none" stroke="#8c8c8c" stroke-width="0.8"/><text x="900.40" y="330.00" font-size="10.30" fill="#8c8c8c" text-anchor="middle" textLength="13.71" lengthAdjust="spacingAndGlyphs">+0</text><circle cx="911.33" cy="322.50" r="0.9" fill="none" stroke="#8c8c8c" stroke-width="0.8"/><text x="998.01" y="330.00" font-size="10.30" fill="#8c8c8c" text-anchor="middle" textLength="26.04" lengthAdjust="spacingAndGlyphs">+330</text><circle cx="1015.13" cy="322.50" r="0.9" fill="none" stroke="#8c8c8c" stroke-width="0.8"/><text x="1095.62" y="330.00" font-size="10.30" fill="#8c8c8c" text-anchor="middle" textLength="26.04" lengthAdjust="spacingAndGlyphs">+300</text><circle cx="1112.74" cy="322.50" r="0.9" fill="none" stroke="#8c8c8c" stroke-width="0.8"/><text x="1193.23" y="330.00" font-size="10.30" fill="#8c8c8c" text-anchor="middle" textLength="26.04" lengthAdjust="spacingAndGlyphs">+270</text><circle cx="1210.35" cy="322.50" r="0.9" fill="none" stroke="#8c8c8c" stroke-width="0.8"/><text x="1290.84" y="330.00" font-size="10.30" fill="#8c8c8c" text-anchor="middle" textLength="26.04" lengthAdjust="spacingAndGlyphs">+240</text><circle cx="1307.96" cy="322.50" r="0.9" fill="none" stroke="#8c8c8c" stroke-width="0.8"/><text x="1388.45" y="330.00" font-size="10.30" fill="#8c8c8c" text-anchor="middle" textLength="26.04" lengthAdjust="spacingAndGlyphs">+210</text><circle cx="1405.57" cy="322.50" r="0.9" fill="none" stroke="#8c8c8c" stroke-width="0.8"/><text x="1486.07" y="330.00" font-size="10.30" fill="#8c8c8c" text-anchor="middle" textLength="26.04" lengthAdjust="spacingAndGlyphs">+180</text><circle cx="1503.18" cy="322.50" r="0.9" fill="none" stroke="#8c8c8c" stroke-width="0.8"/><text x="901.10" y="24.40" font-size="10.30" fill="#8c8c8c" text-anchor="middle" textLength="19.90" lengthAdjust="spacingAndGlyphs">+90</text><circle cx="915.13" cy="16.90" r="0.9" fill="none" stroke="#8c8c8c" stroke-width="0.8"/><text x="901.10" y="122.50" font-size="10.30" fill="#8c8c8c" text-anchor="middle" textLength="19.90" lengthAdjust="spacingAndGlyphs">+60</text><circle cx="915.13" cy="115.00" r="0.9" fill="none" stroke="#8c8c8c" stroke-width="0.8"/><text x="901.10" y="220.50" font-size="10.30" fill="#8c8c8c" text-anchor="middle" textLength="19.90" lengthAdjust="spacingAndGlyphs">+30</text><circle cx="915.13" cy="213.00" r="0.9" fill="none" stroke="#8c8c8c" stroke-width="0.8"/><text x="901.10" y="428.00" font-size="10.30" fill="#8c8c8c" text-anchor="middle" textLength="19.90" lengthAdjust="spacingAndGlyphs">&#8722;30</text><circle cx="915.13" cy="420.50" r="0.9" fill="none" stroke="#8c8c8c" stroke-width="0.8"/><text x="901.10" y="525.20" font-size="10.30" fill="#8c8c8c" text-anchor="middle" textLength="19.90" lengthAdjust="spacingAndGlyphs">&#8722;60</text><circle cx="915.13" cy="517.70" r="0.9" fill="none" stroke="#8c8c8c" stroke-width="0.8"/><text x="901.10" y="623.50" font-size="10.30" fill="#8c8c8c" text-anchor="middle" textLength="19.90" lengthAdjust="spacingAndGlyphs">&#8722;90</text><circle cx="915.13" cy="616.00" r="0.9" fill="none" stroke="#8c8c8c" stroke-width="0.8"/></g>
<path d="M621.74 247.15 L620.44 247.18 L619.11 247.29 L617.73 247.46 L616.33 247.71 L614.90 248.02 L613.45 248.39 L611.98 248.84 L610.49 249.35 L609.00 249.92 L607.50 250.55 L606.00 251.24 L604.51 251.99 L603.03 252.79 L601.57 253.64 L600.14 254.55 L598.73 255.50 L597.35 256.49 L596.01 257.53 L594.71 258.60 L593.46 259.71 L592.27 260.85 L591.13 262.02 L590.05 263.22 L589.03 264.44 L588.08 265.67 L587.20 266.92 L586.40 268.18 L585.67 269.45 L585.02 270.72 L584.45 272.00 L583.97 273.27 L583.56 274.54 L583.24 275.80 L583.01 277.04 L582.85 278.27 L582.79 279.48 L582.81 280.67 L582.91 281.84 L583.09 282.97 L583.35 284.08 L583.69 285.15 L584.11 286.18 L584.60 287.17 L585.16 288.12 L585.80 289.03 L586.50 289.89 L587.26 290.70 L588.08 291.46 L588.96 292.17 L589.89 292.82 L590.88 293.41 L591.90 293.95 L592.98 294.42 L594.09 294.84 L595.23 295.19 L596.41 295.48 L597.61 295.71 L598.84 295.87 L600.09 295.97 L601.36 296.00 L602.64 295.97 L603.93 295.87 L605.23 295.71 L606.53 295.48 L607.83 295.19 L609.13 294.84 L610.42 294.42 L611.71 293.95 L612.98 293.41 L614.24 292.82 L615.49 292.17 L616.72 291.46 L617.92 290.70 L619.10 289.89 L620.26 289.03 L621.39 288.12 L622.49 287.17 L623.56 286.18 L624.59 285.15 L625.59 284.08 L626.55 282.97 L627.47 281.84 L628.36 280.67 L629.20 279.48 L629.99 278.27 L630.75 277.04 L631.45 275.80 L632.11 274.54 L632.71 273.27 L633.27 272.00 L633.77 270.72 L634.22 269.45 L634.61 268.18 L634.95 266.92 L635.23 265.67 L635.45 264.44 L635.60 263.22 L635.70 262.02 L635.74 260.85 L635.71 259.71 L635.62 258.60 L635.46 257.53 L635.24 256.49 L634.96 255.50 L634.60 254.55 L634.19 253.64 L633.70 252.79 L633.15 251.99 L632.53 251.24 L631.85 250.55 L631.11 249.92 L630.30 249.35 L629.42 248.84 L628.49 248.39 L627.50 248.02 L626.45 247.71 L625.35 247.46 L624.19 247.29 L622.99 247.18 Z" fill="none" stroke="#2ab07f" stroke-width="2"/>
<path d="M616 266 Q 697 227.5 758 215.9" fill="none" stroke="#2ab07f" stroke-width="1.4" stroke-dasharray="1.4 2.15"/>
<path d="M753.2 217.2 L758.5 215.9" fill="none" stroke="#2ab07f" stroke-width="1.5"/>
<rect x="758" y="215" width="2.2" height="2.2" fill="#f0603c"/>
<circle cx="609" cy="270.5" r="1.3" fill="#ff0000"/>
<g font-family="&quot;Liberation Sans&quot;, sans-serif"><text x="609.40" y="274.80" font-size="10.80" fill="#ffffff" text-anchor="middle" textLength="19.58" lengthAdjust="spacingAndGlyphs">ORI</text></g>
<g font-family="&quot;Liberation Mono&quot;, monospace" font-size="13.85" fill="#ffffff" xml:space="preserve"><text x="316.5" y="29.7">NZ0004</text><text x="316.5" y="42.7">Beg: 20251018 15:04:22 (sol = 205.14°)</text><text x="316.5" y="56.6">End: 20251018 15:04:22 (sol = 205.14°)</text><text x="316.5" y="68.8">--------------------------------------</text><text x="316.5" y="81.8">ORI: 1</text></g>
<g fill="none" stroke="#5a5a5a" stroke-width="2" stroke-dasharray="2 3.33"><path d="M75.0 641.4 V842.4"/><path d="M218.9 641.4 V842.4"/><path d="M365.0 641.4 V842.4"/><path d="M506.0 641.4 V842.4"/><path d="M650.7 641.4 V842.4"/><path d="M797.0 641.4 V842.4"/><path d="M940.0 641.4 V842.4"/><path d="M1091.0 641.4 V842.4"/><path d="M1239.0 641.4 V842.4"/><path d="M1394.0 641.4 V842.4"/><path d="M1548.2 641.4 V842.4"/><path d="M1686.8 641.4 V842.4"/></g>
<g font-family="&quot;Liberation Sans&quot;, sans-serif" font-size="29.0" fill="#555555"><text transform="translate(148.9 641.5) rotate(-90)" text-anchor="end" textLength="55.38" lengthAdjust="spacingAndGlyphs">APR</text><text transform="translate(295.1 644.2) rotate(-90)" text-anchor="end" textLength="58.11" lengthAdjust="spacingAndGlyphs">MAY</text><text transform="translate(435.6 641.8) rotate(-90)" text-anchor="end" textLength="50.62" lengthAdjust="spacingAndGlyphs">JUN</text><text transform="translate(576.7 641.4) rotate(-90)" text-anchor="end" textLength="46.65" lengthAdjust="spacingAndGlyphs">JUL</text><text transform="translate(723.3 642.4) rotate(-90)" text-anchor="end" textLength="60.53" lengthAdjust="spacingAndGlyphs">AUG</text><text transform="translate(871.6 643.5) rotate(-90)" text-anchor="end" textLength="51.76" lengthAdjust="spacingAndGlyphs">SEP</text><text transform="translate(1016.7 642.8) rotate(-90)" text-anchor="end" textLength="58.83" lengthAdjust="spacingAndGlyphs">OCT</text><text transform="translate(1170.0 643.9) rotate(-90)" text-anchor="end" textLength="60.68" lengthAdjust="spacingAndGlyphs">NOV</text><text transform="translate(1319.3 643.8) rotate(-90)" text-anchor="end" textLength="57.52" lengthAdjust="spacingAndGlyphs">DEC</text><text transform="translate(1468.9 640.7) rotate(-90)" text-anchor="end" textLength="48.78" lengthAdjust="spacingAndGlyphs">JAN</text><text transform="translate(1627.8 644.7) rotate(-90)" text-anchor="end" textLength="51.53" lengthAdjust="spacingAndGlyphs">FEB</text><text transform="translate(1766.0 644.1) rotate(-90)" text-anchor="end" textLength="62.44" lengthAdjust="spacingAndGlyphs">MAR</text></g>
<path d="M1026.5 641.9 V842.4" stroke="#ff0000" stroke-width="2" stroke-dasharray="5.1 2.2" stroke-dashoffset="3.2" fill="none"/>
<rect x="106" y="832.0" width="24" height="4" fill="#c2df23"/><rect x="165" y="832.0" width="181" height="4" fill="#c2df23"/><rect x="366" y="832.0" width="259" height="4" fill="#c2df23"/><rect x="636" y="832.0" width="151" height="4" fill="#c2df23"/><rect x="807" y="832.0" width="93" height="4" fill="#c2df23"/><rect x="920" y="832.0" width="53" height="4" fill="#c2df23"/><rect x="984" y="832.0" width="82" height="4" fill="#c2df23"/><rect x="1082" y="832.0" width="122" height="4" fill="#c2df23"/><rect x="1244" y="832.0" width="82" height="4" fill="#c2df23"/><rect x="1337" y="832.0" width="19" height="4" fill="#c2df23"/><rect x="1381" y="832.0" width="63" height="4" fill="#c2df23"/><rect x="1459" y="832.0" width="54" height="4" fill="#c2df23"/><rect x="1523" y="832.0" width="24" height="4" fill="#c2df23"/><rect x="1724" y="832.0" width="24" height="4" fill="#c2df23"/><rect x="1759" y="832.0" width="23" height="4" fill="#c2df23"/><rect x="165" y="816.0" width="24" height="4" fill="#86d549"/><rect x="224" y="816.0" width="63" height="4" fill="#86d549"/><rect x="312" y="816.0" width="29" height="4" fill="#86d549"/><rect x="366" y="816.0" width="127" height="4" fill="#86d549"/><rect x="508" y="816.0" width="146" height="4" fill="#86d549"/><rect x="704" y="816.0" width="34" height="4" fill="#86d549"/><rect x="773" y="816.0" width="73" height="4" fill="#86d549"/><rect x="871" y="816.0" width="117" height="4" fill="#86d549"/><rect x="1003" y="816.0" width="14" height="4" fill="#86d549"/><rect x="1062" y="816.0" width="151" height="4" fill="#86d549"/><rect x="1244" y="816.0" width="23" height="4" fill="#86d549"/><rect x="1293" y="816.0" width="23" height="4" fill="#86d549"/><rect x="1342" y="816.0" width="23" height="4" fill="#86d549"/><rect x="1386" y="816.0" width="43" height="4" fill="#86d549"/><rect x="1459" y="816.0" width="24" height="4" fill="#86d549"/><rect x="1548" y="816.0" width="23" height="4" fill="#86d549"/><rect x="165" y="800.0" width="24" height="4" fill="#52c569"/><rect x="258" y="800.0" width="230" height="4" fill="#52c569"/><rect x="508" y="800.0" width="107" height="4" fill="#52c569"/><rect x="626" y="800.0" width="92" height="4" fill="#52c569"/><rect x="729" y="800.0" width="97" height="4" fill="#52c569"/><rect x="950" y="800.0" width="200" height="4" fill="#52c569"/><rect x="1160" y="800.0" width="88" height="4" fill="#52c569"/><rect x="1258" y="800.0" width="186" height="4" fill="#52c569"/><rect x="1459" y="800.0" width="24" height="4" fill="#52c569"/><rect x="1553" y="800.0" width="23" height="4" fill="#52c569"/><rect x="194" y="783.0" width="24" height="4" fill="#2ab07f"/><rect x="322" y="783.0" width="185" height="4" fill="#2ab07f"/><rect x="518" y="783.0" width="24" height="4" fill="#2ab07f"/><rect x="557" y="783.0" width="127" height="4" fill="#2ab07f"/><rect x="807" y="783.0" width="24" height="4" fill="#2ab07f"/><rect x="954" y="783.0" width="19" height="4" fill="#2ab07f"/><rect x="989" y="783.0" width="136" height="4" fill="#2ab07f"/><rect x="1155" y="783.0" width="63" height="4" fill="#2ab07f"/><rect x="1244" y="783.0" width="23" height="4" fill="#2ab07f"/><rect x="1317" y="783.0" width="24" height="4" fill="#2ab07f"/><rect x="1396" y="783.0" width="23" height="4" fill="#2ab07f"/><rect x="1464" y="783.0" width="186" height="4" fill="#2ab07f"/><rect x="342" y="767.0" width="28" height="4" fill="#1e9b8a"/><rect x="410" y="767.0" width="38" height="4" fill="#1e9b8a"/><rect x="469" y="767.0" width="24" height="4" fill="#1e9b8a"/><rect x="528" y="767.0" width="19" height="4" fill="#1e9b8a"/><rect x="562" y="767.0" width="29" height="4" fill="#1e9b8a"/><rect x="616" y="767.0" width="34" height="4" fill="#1e9b8a"/><rect x="959" y="767.0" width="29" height="4" fill="#1e9b8a"/><rect x="1062" y="767.0" width="24" height="4" fill="#1e9b8a"/><rect x="1102" y="767.0" width="23" height="4" fill="#1e9b8a"/><rect x="1160" y="767.0" width="34" height="4" fill="#1e9b8a"/><rect x="1249" y="767.0" width="23" height="4" fill="#1e9b8a"/><rect x="1425" y="767.0" width="88" height="4" fill="#1e9b8a"/><rect x="420" y="750.0" width="24" height="4" fill="#25858e"/><rect x="533" y="750.0" width="23" height="4" fill="#25858e"/><rect x="567" y="750.0" width="24" height="4" fill="#25858e"/><rect x="621" y="750.0" width="122" height="4" fill="#25858e"/><rect x="969" y="750.0" width="166" height="4" fill="#25858e"/><rect x="1185" y="750.0" width="161" height="4" fill="#25858e"/><rect x="1469" y="750.0" width="24" height="4" fill="#25858e"/><rect x="430" y="734.0" width="23" height="4" fill="#2d708e"/><rect x="577" y="734.0" width="156" height="4" fill="#2d708e"/><rect x="994" y="734.0" width="112" height="4" fill="#2d708e"/><rect x="1116" y="734.0" width="107" height="4" fill="#2d708e"/><rect x="1263" y="734.0" width="29" height="4" fill="#2d708e"/><rect x="1489" y="734.0" width="24" height="4" fill="#2d708e"/><rect x="592" y="718.0" width="23" height="4" fill="#38588c"/><rect x="655" y="718.0" width="117" height="4" fill="#38588c"/><rect x="1072" y="718.0" width="171" height="4" fill="#38588c"/><rect x="1263" y="718.0" width="24" height="4" fill="#38588c"/><rect x="596" y="701.0" width="137" height="4" fill="#433e85"/><rect x="1092" y="701.0" width="28" height="4" fill="#433e85"/><rect x="1200" y="701.0" width="23" height="4" fill="#433e85"/><rect x="1273" y="701.0" width="53" height="4" fill="#433e85"/><rect x="1111" y="685.0" width="24" height="4" fill="#482173"/>
<g stroke="#ffffff" stroke-width="2" fill="none"><path d="M113.8 834.0 h8 M117.8 830.0 v8"/><path d="M240.9 834.0 h8 M244.9 830.0 v8"/><path d="M510.5 834.0 h8 M514.5 830.0 v8"/><path d="M706.7 834.0 h8 M710.7 830.0 v8"/><path d="M834.0 834.0 h8 M838.0 830.0 v8"/><path d="M961.7 834.0 h8 M965.7 830.0 v8"/><path d="M986.7 834.0 h8 M990.7 830.0 v8"/><path d="M1116.8 834.0 h8 M1120.8 830.0 v8"/><path d="M1296.0 834.0 h8 M1300.0 830.0 v8"/><path d="M1341.6 834.0 h8 M1345.6 830.0 v8"/><path d="M1412.8 834.0 h8 M1416.8 830.0 v8"/><path d="M1481.8 834.0 h8 M1485.8 830.0 v8"/><path d="M1530.6 834.0 h8 M1534.6 830.0 v8"/><path d="M1731.8 834.0 h8 M1735.8 830.0 v8"/><path d="M1765.6 834.0 h8 M1769.6 830.0 v8"/><path d="M172.9 818.0 h8 M176.9 814.0 v8"/><path d="M255.7 818.0 h8 M259.7 814.0 v8"/><path d="M323.7 818.0 h8 M327.7 814.0 v8"/><path d="M437.7 818.0 h8 M441.7 814.0 v8"/><path d="M598.8 818.0 h8 M602.8 814.0 v8"/><path d="M716.6 818.0 h8 M720.6 814.0 v8"/><path d="M793.9 818.0 h8 M797.9 814.0 v8"/><path d="M939.6 818.0 h8 M943.6 814.0 v8"/><path d="M1005.7 818.0 h8 M1009.7 814.0 v8"/><path d="M1152.6 818.0 h8 M1156.6 814.0 v8"/><path d="M1250.8 818.0 h8 M1254.8 814.0 v8"/><path d="M1299.8 818.0 h8 M1303.8 814.0 v8"/><path d="M1349.4 818.0 h8 M1353.4 814.0 v8"/><path d="M1402.6 818.0 h8 M1406.6 814.0 v8"/><path d="M1466.6 818.0 h8 M1470.6 814.0 v8"/><path d="M1555.1 818.0 h8 M1559.1 814.0 v8"/><path d="M175.0 802.0 h8 M179.0 798.0 v8"/><path d="M378.6 802.0 h8 M382.6 798.0 v8"/><path d="M544.8 802.0 h8 M548.8 798.0 v8"/><path d="M682.8 802.0 h8 M686.8 798.0 v8"/><path d="M741.5 802.0 h8 M745.5 798.0 v8"/><path d="M1074.7 802.0 h8 M1078.7 798.0 v8"/><path d="M1216.6 802.0 h8 M1220.6 798.0 v8"/><path d="M1304.7 802.0 h8 M1308.7 798.0 v8"/><path d="M1466.6 802.0 h8 M1470.6 798.0 v8"/><path d="M1560.0 802.0 h8 M1564.0 798.0 v8"/><path d="M201.8 785.0 h8 M205.8 781.0 v8"/><path d="M400.7 785.0 h8 M404.7 781.0 v8"/><path d="M525.7 785.0 h8 M529.7 781.0 v8"/><path d="M638.9 785.0 h8 M642.9 781.0 v8"/><path d="M814.6 785.0 h8 M818.6 781.0 v8"/><path d="M959.9 785.0 h8 M963.9 781.0 v8"/><path d="M1040.8 785.0 h8 M1044.8 781.0 v8"/><path d="M1187.5 785.0 h8 M1191.5 781.0 v8"/><path d="M1250.8 785.0 h8 M1254.8 781.0 v8"/><path d="M1324.7 785.0 h8 M1328.7 781.0 v8"/><path d="M1402.6 785.0 h8 M1406.6 781.0 v8"/><path d="M1546.0 785.0 h8 M1550.0 781.0 v8"/><path d="M355.8 769.0 h8 M359.8 765.0 v8"/><path d="M426.7 769.0 h8 M430.7 765.0 v8"/><path d="M476.7 769.0 h8 M480.7 765.0 v8"/><path d="M535.6 769.0 h8 M539.6 765.0 v8"/><path d="M570.7 769.0 h8 M574.7 765.0 v8"/><path d="M630.7 769.0 h8 M634.7 765.0 v8"/><path d="M973.6 769.0 h8 M977.6 765.0 v8"/><path d="M1069.5 769.0 h8 M1073.5 765.0 v8"/><path d="M1108.9 769.0 h8 M1112.9 765.0 v8"/><path d="M1177.5 769.0 h8 M1181.5 765.0 v8"/><path d="M1255.7 769.0 h8 M1259.7 765.0 v8"/><path d="M1466.6 769.0 h8 M1470.6 765.0 v8"/><path d="M427.5 752.0 h8 M431.5 748.0 v8"/><path d="M539.7 752.0 h8 M543.7 748.0 v8"/><path d="M574.5 752.0 h8 M578.5 748.0 v8"/><path d="M703.9 752.0 h8 M707.9 748.0 v8"/><path d="M1094.6 752.0 h8 M1098.6 748.0 v8"/><path d="M1270.9 752.0 h8 M1274.9 748.0 v8"/><path d="M1476.7 752.0 h8 M1480.7 748.0 v8"/><path d="M437.7 736.0 h8 M441.7 732.0 v8"/><path d="M630.7 736.0 h8 M634.7 732.0 v8"/><path d="M1038.9 736.0 h8 M1042.9 732.0 v8"/><path d="M1168.0 736.0 h8 M1172.0 732.0 v8"/><path d="M1274.7 736.0 h8 M1278.7 732.0 v8"/><path d="M1496.6 736.0 h8 M1500.6 732.0 v8"/><path d="M598.8 720.0 h8 M602.8 716.0 v8"/><path d="M726.7 720.0 h8 M730.7 716.0 v8"/><path d="M1187.7 720.0 h8 M1191.7 716.0 v8"/><path d="M1270.9 720.0 h8 M1274.9 716.0 v8"/><path d="M687.7 703.0 h8 M691.7 699.0 v8"/><path d="M1101.6 703.0 h8 M1105.6 699.0 v8"/><path d="M1206.7 703.0 h8 M1210.7 699.0 v8"/><path d="M1299.8 703.0 h8 M1303.8 699.0 v8"/><path d="M1118.4 687.0 h8 M1122.4 683.0 v8"/></g>
<g font-family="&quot;Liberation Sans&quot;, sans-serif"><text x="117.57" y="831.50" font-size="10.90" fill="#ffffff" text-anchor="middle" textLength="20.26" lengthAdjust="spacingAndGlyphs">KSE</text><text x="254.86" y="831.50" font-size="10.90" fill="#ffffff" text-anchor="middle" textLength="19.72" lengthAdjust="spacingAndGlyphs">ETA</text><text x="495.12" y="831.50" font-size="10.90" fill="#ffffff" text-anchor="middle" textLength="22.74" lengthAdjust="spacingAndGlyphs">NZC</text><text x="710.87" y="831.50" font-size="10.90" fill="#ffffff" text-anchor="middle" textLength="23.37" lengthAdjust="spacingAndGlyphs">NDA</text><text x="853.07" y="831.50" font-size="10.90" fill="#ffffff" text-anchor="middle" textLength="19.64" lengthAdjust="spacingAndGlyphs">SPE</text><text x="946.23" y="831.50" font-size="10.90" fill="#ffffff" text-anchor="middle" textLength="23.02" lengthAdjust="spacingAndGlyphs">ARD</text><text x="1024.68" y="831.50" font-size="10.90" fill="#ffffff" text-anchor="middle" textLength="21.55" lengthAdjust="spacingAndGlyphs">EGE</text><text x="1142.36" y="831.50" font-size="10.90" fill="#ffffff" text-anchor="middle" textLength="21.00" lengthAdjust="spacingAndGlyphs">NTA</text><text x="1284.56" y="831.50" font-size="10.90" fill="#ffffff" text-anchor="middle" textLength="25.60" lengthAdjust="spacingAndGlyphs">MON</text><text x="1343.40" y="831.50" font-size="10.90" fill="#ffffff" text-anchor="middle" textLength="22.03" lengthAdjust="spacingAndGlyphs">URS</text><text x="1412.05" y="831.50" font-size="10.90" fill="#ffffff" text-anchor="middle" textLength="22.29" lengthAdjust="spacingAndGlyphs">AHY</text><text x="1485.60" y="831.50" font-size="10.90" fill="#ffffff" text-anchor="middle" textLength="25.40" lengthAdjust="spacingAndGlyphs">GUM</text><text x="1534.63" y="831.50" font-size="10.90" fill="#ffffff" text-anchor="middle" textLength="23.40" lengthAdjust="spacingAndGlyphs">QHY</text><text x="1735.67" y="831.50" font-size="10.90" fill="#ffffff" text-anchor="middle" textLength="22.01" lengthAdjust="spacingAndGlyphs">XHE</text><text x="1769.99" y="831.50" font-size="10.90" fill="#ffffff" text-anchor="middle" textLength="17.14" lengthAdjust="spacingAndGlyphs">EVI</text><text x="176.41" y="815.09" font-size="10.90" fill="#ffffff" text-anchor="middle" textLength="21.25" lengthAdjust="spacingAndGlyphs">AVB</text><text x="254.86" y="815.09" font-size="10.90" fill="#ffffff" text-anchor="middle" textLength="17.98" lengthAdjust="spacingAndGlyphs">ELY</text><text x="323.51" y="815.09" font-size="10.90" fill="#ffffff" text-anchor="middle" textLength="24.03" lengthAdjust="spacingAndGlyphs">CAM</text><text x="431.38" y="815.09" font-size="10.90" fill="#ffffff" text-anchor="middle" textLength="21.72" lengthAdjust="spacingAndGlyphs">SSG</text><text x="578.48" y="815.09" font-size="10.90" fill="#ffffff" text-anchor="middle" textLength="21.17" lengthAdjust="spacingAndGlyphs">PCA</text><text x="720.68" y="815.09" font-size="10.90" fill="#ffffff" text-anchor="middle" textLength="23.41" lengthAdjust="spacingAndGlyphs">AUD</text><text x="808.94" y="815.09" font-size="10.90" fill="#ffffff" text-anchor="middle" textLength="22.91" lengthAdjust="spacingAndGlyphs">AUR</text><text x="931.52" y="815.09" font-size="10.90" fill="#ffffff" text-anchor="middle" textLength="22.29" lengthAdjust="spacingAndGlyphs">DSX</text><text x="1009.97" y="815.09" font-size="10.90" fill="#ffffff" text-anchor="middle" textLength="23.74" lengthAdjust="spacingAndGlyphs">OCU</text><text x="1137.46" y="815.09" font-size="10.90" fill="#ffffff" text-anchor="middle" textLength="22.92" lengthAdjust="spacingAndGlyphs">OER</text><text x="1255.14" y="815.09" font-size="10.90" fill="#ffffff" text-anchor="middle" textLength="23.44" lengthAdjust="spacingAndGlyphs">DKD</text><text x="1304.17" y="815.09" font-size="10.90" fill="#ffffff" text-anchor="middle" textLength="22.35" lengthAdjust="spacingAndGlyphs">DSV</text><text x="1353.21" y="815.09" font-size="10.90" fill="#ffffff" text-anchor="middle" textLength="18.74" lengthAdjust="spacingAndGlyphs">ALY</text><text x="1407.14" y="815.09" font-size="10.90" fill="#ffffff" text-anchor="middle" textLength="16.46" lengthAdjust="spacingAndGlyphs">JLE</text><text x="1470.89" y="815.09" font-size="10.90" fill="#ffffff" text-anchor="middle" textLength="21.51" lengthAdjust="spacingAndGlyphs">SCC</text><text x="1559.15" y="815.09" font-size="10.90" fill="#ffffff" text-anchor="middle" textLength="20.18" lengthAdjust="spacingAndGlyphs">FEV</text><text x="176.41" y="798.68" font-size="10.90" fill="#ffffff" text-anchor="middle" textLength="18.58" lengthAdjust="spacingAndGlyphs">LYR</text><text x="372.54" y="798.68" font-size="10.90" fill="#ffffff" text-anchor="middle" textLength="20.59" lengthAdjust="spacingAndGlyphs">JMC</text><text x="558.87" y="798.68" font-size="10.90" fill="#ffffff" text-anchor="middle" textLength="16.91" lengthAdjust="spacingAndGlyphs">JPE</text><text x="671.64" y="798.68" font-size="10.90" fill="#ffffff" text-anchor="middle" textLength="20.79" lengthAdjust="spacingAndGlyphs">PAU</text><text x="774.61" y="798.68" font-size="10.90" fill="#ffffff" text-anchor="middle" textLength="18.43" lengthAdjust="spacingAndGlyphs">NIA</text><text x="1049.20" y="798.68" font-size="10.90" fill="#ffffff" text-anchor="middle" textLength="19.70" lengthAdjust="spacingAndGlyphs">STA</text><text x="1206.11" y="798.68" font-size="10.90" fill="#ffffff" text-anchor="middle" textLength="24.83" lengthAdjust="spacingAndGlyphs">NOO</text><text x="1353.21" y="798.68" font-size="10.90" fill="#ffffff" text-anchor="middle" textLength="25.14" lengthAdjust="spacingAndGlyphs">COM</text><text x="1470.89" y="798.68" font-size="10.90" fill="#ffffff" text-anchor="middle" textLength="22.83" lengthAdjust="spacingAndGlyphs">NCC</text><text x="1564.05" y="798.68" font-size="10.90" fill="#ffffff" text-anchor="middle" textLength="21.02" lengthAdjust="spacingAndGlyphs">FED</text><text x="205.83" y="782.27" font-size="10.90" fill="#ffffff" text-anchor="middle" textLength="18.52" lengthAdjust="spacingAndGlyphs">HVI</text><text x="411.77" y="782.27" font-size="10.90" fill="#ffffff" text-anchor="middle" textLength="17.98" lengthAdjust="spacingAndGlyphs">ARI</text><text x="529.45" y="782.27" font-size="10.90" fill="#ffffff" text-anchor="middle" textLength="21.43" lengthAdjust="spacingAndGlyphs">SZC</text><text x="617.71" y="782.27" font-size="10.90" fill="#ffffff" text-anchor="middle" textLength="21.55" lengthAdjust="spacingAndGlyphs">CAP</text><text x="818.74" y="782.27" font-size="10.90" fill="#ffffff" text-anchor="middle" textLength="22.37" lengthAdjust="spacingAndGlyphs">NUE</text><text x="960.94" y="782.27" font-size="10.90" fill="#ffffff" text-anchor="middle" textLength="22.85" lengthAdjust="spacingAndGlyphs">OCT</text><text x="1059.01" y="782.27" font-size="10.90" fill="#ffffff" text-anchor="middle" textLength="19.05" lengthAdjust="spacingAndGlyphs">ORI</text><text x="1186.49" y="782.27" font-size="10.90" fill="#ffffff" text-anchor="middle" textLength="25.07" lengthAdjust="spacingAndGlyphs">AMO</text><text x="1255.14" y="782.27" font-size="10.90" fill="#ffffff" text-anchor="middle" textLength="22.00" lengthAdjust="spacingAndGlyphs">DPC</text><text x="1328.69" y="782.27" font-size="10.90" fill="#ffffff" text-anchor="middle" textLength="17.87" lengthAdjust="spacingAndGlyphs">XVI</text><text x="1407.14" y="782.27" font-size="10.90" fill="#ffffff" text-anchor="middle" textLength="23.65" lengthAdjust="spacingAndGlyphs">QUA</text><text x="1559.15" y="782.27" font-size="10.90" fill="#ffffff" text-anchor="middle" textLength="22.94" lengthAdjust="spacingAndGlyphs">AAN</text><text x="352.93" y="765.86" font-size="10.90" fill="#ffffff" text-anchor="middle" textLength="21.43" lengthAdjust="spacingAndGlyphs">TAH</text><text x="431.38" y="765.86" font-size="10.90" fill="#ffffff" text-anchor="middle" textLength="18.04" lengthAdjust="spacingAndGlyphs">JEA</text><text x="480.41" y="765.86" font-size="10.90" fill="#ffffff" text-anchor="middle" textLength="13.74" lengthAdjust="spacingAndGlyphs">JIP</text><text x="539.25" y="765.86" font-size="10.90" fill="#ffffff" text-anchor="middle" textLength="19.48" lengthAdjust="spacingAndGlyphs">PPS</text><text x="578.48" y="765.86" font-size="10.90" fill="#ffffff" text-anchor="middle" textLength="21.57" lengthAdjust="spacingAndGlyphs">ZCS</text><text x="632.42" y="765.86" font-size="10.90" fill="#ffffff" text-anchor="middle" textLength="24.34" lengthAdjust="spacingAndGlyphs">GDR</text><text x="970.75" y="765.86" font-size="10.90" fill="#ffffff" text-anchor="middle" textLength="22.52" lengthAdjust="spacingAndGlyphs">DRA</text><text x="1073.72" y="765.86" font-size="10.90" fill="#ffffff" text-anchor="middle" textLength="22.36" lengthAdjust="spacingAndGlyphs">LUM</text><text x="1112.94" y="765.86" font-size="10.90" fill="#ffffff" text-anchor="middle" textLength="21.55" lengthAdjust="spacingAndGlyphs">RPU</text><text x="1176.69" y="765.86" font-size="10.90" fill="#ffffff" text-anchor="middle" textLength="22.31" lengthAdjust="spacingAndGlyphs">THA</text><text x="1260.04" y="765.86" font-size="10.90" fill="#ffffff" text-anchor="middle" textLength="20.89" lengthAdjust="spacingAndGlyphs">PSU</text><text x="1470.89" y="765.86" font-size="10.90" fill="#ffffff" text-anchor="middle" textLength="21.23" lengthAdjust="spacingAndGlyphs">XCB</text><text x="431.38" y="749.45" font-size="10.90" fill="#ffffff" text-anchor="middle" textLength="18.19" lengthAdjust="spacingAndGlyphs">JRC</text><text x="544.16" y="749.45" font-size="10.90" fill="#ffffff" text-anchor="middle" textLength="22.77" lengthAdjust="spacingAndGlyphs">CAN</text><text x="578.48" y="749.45" font-size="10.90" fill="#ffffff" text-anchor="middle" textLength="20.30" lengthAdjust="spacingAndGlyphs">FAN</text><text x="681.45" y="749.45" font-size="10.90" fill="#ffffff" text-anchor="middle" textLength="20.77" lengthAdjust="spacingAndGlyphs">PER</text><text x="1049.20" y="749.45" font-size="10.90" fill="#ffffff" text-anchor="middle" textLength="20.55" lengthAdjust="spacingAndGlyphs">CTA</text><text x="1264.95" y="749.45" font-size="10.90" fill="#ffffff" text-anchor="middle" textLength="22.72" lengthAdjust="spacingAndGlyphs">HYD</text><text x="1480.69" y="749.45" font-size="10.90" fill="#ffffff" text-anchor="middle" textLength="24.40" lengthAdjust="spacingAndGlyphs">XUM</text><text x="441.19" y="733.04" font-size="10.90" fill="#ffffff" text-anchor="middle" textLength="23.66" lengthAdjust="spacingAndGlyphs">COR</text><text x="656.93" y="733.04" font-size="10.90" fill="#ffffff" text-anchor="middle" textLength="22.07" lengthAdjust="spacingAndGlyphs">SDA</text><text x="1049.20" y="733.04" font-size="10.90" fill="#ffffff" text-anchor="middle" textLength="18.34" lengthAdjust="spacingAndGlyphs">LMI</text><text x="1166.88" y="733.04" font-size="10.90" fill="#ffffff" text-anchor="middle" textLength="21.06" lengthAdjust="spacingAndGlyphs">LEO</text><text x="1274.75" y="733.04" font-size="10.90" fill="#ffffff" text-anchor="middle" textLength="21.61" lengthAdjust="spacingAndGlyphs">EHY</text><text x="1500.31" y="733.04" font-size="10.90" fill="#ffffff" text-anchor="middle" textLength="21.50" lengthAdjust="spacingAndGlyphs">ECV</text><text x="603.00" y="716.63" font-size="10.90" fill="#ffffff" text-anchor="middle" textLength="18.61" lengthAdjust="spacingAndGlyphs">JXA</text><text x="715.77" y="716.63" font-size="10.90" fill="#ffffff" text-anchor="middle" textLength="22.06" lengthAdjust="spacingAndGlyphs">KCG</text><text x="1157.07" y="716.63" font-size="10.90" fill="#ffffff" text-anchor="middle" textLength="23.60" lengthAdjust="spacingAndGlyphs">AND</text><text x="1274.75" y="716.63" font-size="10.90" fill="#ffffff" text-anchor="middle" textLength="23.58" lengthAdjust="spacingAndGlyphs">DAD</text><text x="666.74" y="700.22" font-size="10.90" fill="#ffffff" text-anchor="middle" textLength="17.22" lengthAdjust="spacingAndGlyphs">ERI</text><text x="1108.04" y="700.22" font-size="10.90" fill="#ffffff" text-anchor="middle" textLength="20.84" lengthAdjust="spacingAndGlyphs">SLD</text><text x="1211.01" y="700.22" font-size="10.90" fill="#ffffff" text-anchor="middle" textLength="22.67" lengthAdjust="spacingAndGlyphs">ORS</text><text x="1299.27" y="700.22" font-size="10.90" fill="#ffffff" text-anchor="middle" textLength="24.29" lengthAdjust="spacingAndGlyphs">GEM</text><text x="1122.75" y="683.81" font-size="10.90" fill="#ffffff" text-anchor="middle" textLength="23.65" lengthAdjust="spacingAndGlyphs">KUM</text></g>
<rect x="20.5" y="641.5" width="1765" height="201" fill="none" stroke="#ffffff" stroke-width="1.1"/>
<g stroke="#ffffff" stroke-width="1.1"><path d="M20.5 842.5 v5.2"/><path d="M265.5 842.5 v5.2"/><path d="M510.5 842.5 v5.2"/><path d="M755.5 842.5 v5.2"/><path d="M1000.5 842.5 v5.2"/><path d="M1245.5 842.5 v5.2"/><path d="M1490.5 842.5 v5.2"/><path d="M1736.5 842.5 v5.2"/></g>
<g font-family="&quot;Liberation Sans&quot;, sans-serif"><text x="20.40" y="861.70" font-size="14.20" fill="#ffffff" text-anchor="middle" textLength="8.18" lengthAdjust="spacingAndGlyphs">0</text><text x="265.57" y="861.70" font-size="14.20" fill="#ffffff" text-anchor="middle" textLength="16.92" lengthAdjust="spacingAndGlyphs">50</text><text x="510.73" y="861.70" font-size="14.20" fill="#ffffff" text-anchor="middle" textLength="25.84" lengthAdjust="spacingAndGlyphs">100</text><text x="755.90" y="861.70" font-size="14.20" fill="#ffffff" text-anchor="middle" textLength="25.84" lengthAdjust="spacingAndGlyphs">150</text><text x="1001.07" y="861.70" font-size="14.20" fill="#ffffff" text-anchor="middle" textLength="25.98" lengthAdjust="spacingAndGlyphs">200</text><text x="1246.23" y="861.70" font-size="14.20" fill="#ffffff" text-anchor="middle" textLength="25.98" lengthAdjust="spacingAndGlyphs">250</text><text x="1491.40" y="861.70" font-size="14.20" fill="#ffffff" text-anchor="middle" textLength="25.74" lengthAdjust="spacingAndGlyphs">300</text><text x="1736.57" y="861.70" font-size="14.20" fill="#ffffff" text-anchor="middle" textLength="25.74" lengthAdjust="spacingAndGlyphs">350</text></g>
<g font-family="&quot;Liberation Sans&quot;, sans-serif"><text x="902.30" y="881.90" font-size="14.20" fill="#ffffff" text-anchor="middle" textLength="146.42" lengthAdjust="spacingAndGlyphs">Solar longitude (deg)</text></g></svg>
</body></html>
